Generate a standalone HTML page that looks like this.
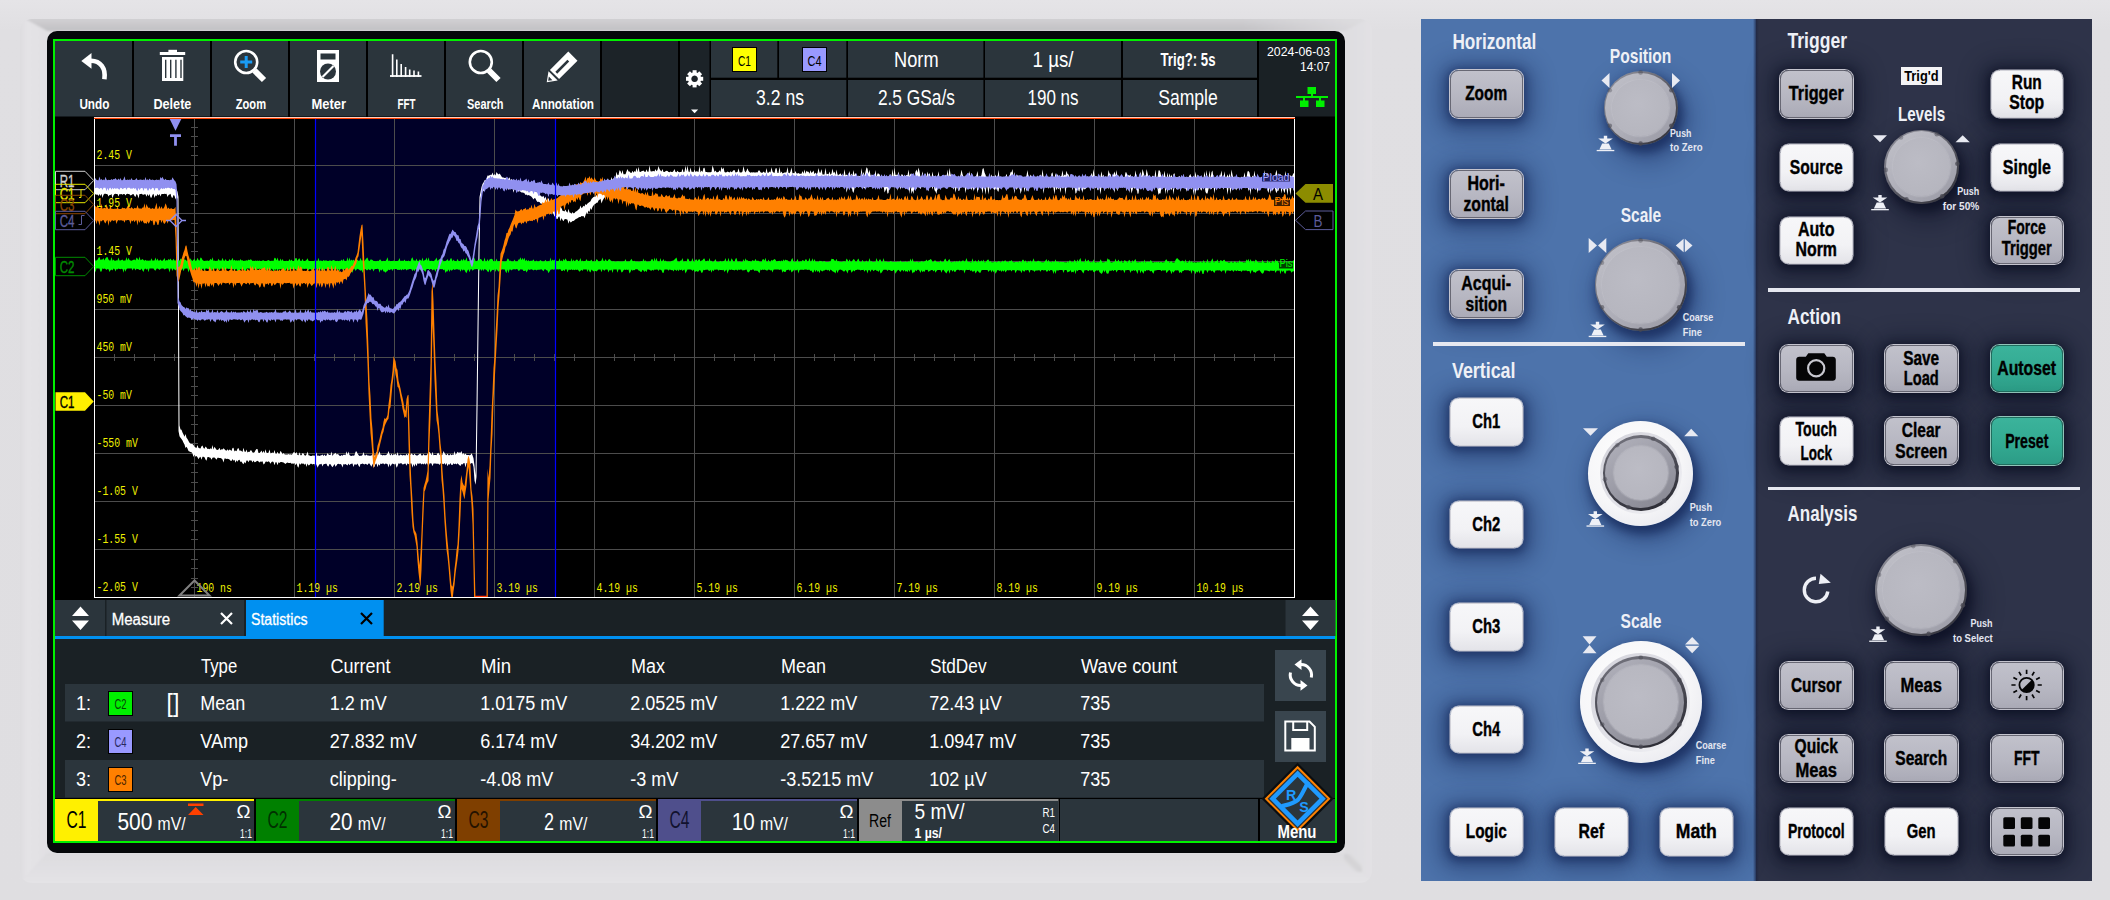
<!DOCTYPE html>
<html><head><meta charset="utf-8"><title>Oscilloscope</title>
<style>
html,body{margin:0;padding:0;background:#dfdee1;}
body{width:2110px;height:900px;overflow:hidden;font-family:"Liberation Sans",sans-serif;}
#root{position:relative;width:2110px;height:900px;overflow:hidden;background:linear-gradient(180deg,#e5e4e7 0,#e0dfe2 30px,#dfdee1 100%);}
#root div{position:absolute;box-sizing:border-box;}
#ov{position:absolute;left:0;top:0;}

</style></head>
<body>
<div id="root">
<svg style="position:absolute;left:0;top:0" width="1400" height="900" viewBox="0 0 1400 900"><defs><linearGradient id="bt" x1="0" y1="0" x2="0" y2="1"><stop offset="0" stop-color="#d9d8db"/><stop offset="1" stop-color="#c1c0c3"/></linearGradient><linearGradient id="btf" x1="0" y1="0" x2="1" y2="0"><stop offset="0" stop-color="#e1e0e3" stop-opacity="0"/><stop offset=".9" stop-color="#e1e0e3" stop-opacity="0"/><stop offset="1" stop-color="#e1e0e3" stop-opacity=".9"/></linearGradient><linearGradient id="bl" x1="0" y1="0" x2="1" y2="0"><stop offset="0" stop-color="#d9d8db"/><stop offset=".4" stop-color="#e4e3e6"/><stop offset="1" stop-color="#e1e0e3"/></linearGradient><linearGradient id="bb" x1="0" y1="0" x2="0" y2="1"><stop offset="0" stop-color="#dddcdf"/><stop offset="1" stop-color="#e5e4e7"/></linearGradient><linearGradient id="br" x1="0" y1="0" x2="1" y2="0"><stop offset="0" stop-color="#dedde0"/><stop offset="1" stop-color="#e3e2e5"/></linearGradient><clipPath id="bz"><rect x="20" y="19" width="1352" height="864" rx="12"/></clipPath><filter id="bf" x="-2%" y="-2%" width="104%" height="104%"><feGaussianBlur stdDeviation="1.2"/></filter></defs><g clip-path="url(#bz)"><g filter="url(#bf)"><rect x="10" y="10" width="1372" height="884" fill="#e1e0e3"/><path d="M14 13H1378L1345 31H47z" fill="url(#bt)"/><path d="M14 13H1378L1345 31H47z" fill="url(#btf)"/><path d="M14 13L47 31V853L14 889z" fill="url(#bl)"/><path d="M14 889L47 853H1345L1378 889z" fill="url(#bb)"/><path d="M1378 13L1345 31V853L1378 889z" fill="url(#br)"/><path d="M1345 855L1361 871" stroke="#cccbce" stroke-width="7" stroke-linecap="round" opacity=".55" filter="url(#bf)"/></g></g></svg>
<div style="left:47px;top:31px;width:1298.3px;height:822.3px;background:#05070a;border-radius:10px;"></div>
<div style="left:53px;top:39px;width:1284px;height:804px;border:2px solid #00f000;background:#000;"></div>
<div style="left:0;top:0;width:2110px;height:900px;clip-path:inset(19px 18px 19px 1421px);"><div style="left:1421px;top:19px;width:335px;height:862px;background:#4d73ab;"></div>
<div style="left:1756px;top:19px;width:336px;height:862px;background:#2e3349;"></div>
<div style="left:1753px;top:19px;width:6px;height:862px;background:linear-gradient(90deg,rgba(30,40,70,0),rgba(28,36,66,.7) 50%,rgba(30,40,70,0));"></div>
<div style="left:1450px;top:70px;width:72.5px;height:47.5px;background:linear-gradient(180deg,#c1c1cb 0,#b7b7c2 55%,#ababb7 100%);border:1.5px solid #686874;box-shadow:0 0 0 1px #c4c4ce,0 2px 8px 3px rgba(14,30,78,.5),0 4px 22px 11px rgba(14,30,78,.4);border-radius:8.5px;"></div>
<div style="left:1450px;top:170px;width:72.5px;height:47.5px;background:linear-gradient(180deg,#c1c1cb 0,#b7b7c2 55%,#ababb7 100%);border:1.5px solid #686874;box-shadow:0 0 0 1px #c4c4ce,0 2px 8px 3px rgba(14,30,78,.5),0 4px 22px 11px rgba(14,30,78,.4);border-radius:8.5px;"></div>
<div style="left:1450px;top:270px;width:72.5px;height:47.5px;background:linear-gradient(180deg,#c1c1cb 0,#b7b7c2 55%,#ababb7 100%);border:1.5px solid #686874;box-shadow:0 0 0 1px #c4c4ce,0 2px 8px 3px rgba(14,30,78,.5),0 4px 22px 11px rgba(14,30,78,.4);border-radius:8.5px;"></div>
<div style="left:1603.6px;top:71px;width:74px;height:74px;border-radius:50%;background:linear-gradient(140deg,#9a9aa4 0,#5c5c66 50%,#2a2a32 100%);box-shadow:3px 6px 10px 2px rgba(14,30,78,.6),6px 11px 24px 7px rgba(14,30,78,.35);"></div>
<div style="left:1605.3999999999999px;top:72.8px;width:70.4px;height:70.4px;border-radius:50%;background:linear-gradient(140deg,#c2c2ca 0,#aeaeb8 55%,#9898a3 100%);"></div>
<div style="left:1612.11px;top:79.50999999999999px;width:56.980000000000004px;height:56.980000000000004px;border-radius:50%;background:radial-gradient(circle at 45% 42%,#bcbcc5 0,#b6b6bf 70%,#b0b0ba 100%);box-shadow:0 0 1.5px 0.6px rgba(196,196,204,.75);"></div>
<div style="left:1594.6px;top:239px;width:92px;height:92px;border-radius:50%;background:linear-gradient(140deg,#9a9aa4 0,#5c5c66 50%,#2a2a32 100%);box-shadow:3px 6px 10px 2px rgba(14,30,78,.6),6px 11px 24px 7px rgba(14,30,78,.35);"></div>
<div style="left:1596.3999999999999px;top:240.8px;width:88.4px;height:88.4px;border-radius:50%;background:linear-gradient(140deg,#c2c2ca 0,#aeaeb8 55%,#9898a3 100%);"></div>
<div style="left:1602.4199999999998px;top:246.82px;width:76.36px;height:76.36px;border-radius:50%;background:radial-gradient(circle at 45% 42%,#bcbcc5 0,#b6b6bf 70%,#b0b0ba 100%);box-shadow:0 0 1.5px 0.6px rgba(196,196,204,.75);"></div>
<div style="left:1433px;top:342.2px;width:312px;height:3.6px;background:#e6e8f0;"></div>
<div style="left:1450px;top:398px;width:72.5px;height:47.5px;background:linear-gradient(180deg,#f7f7f9 0,#f2f2f5 60%,#e4e4e9 100%);border:1.5px solid #d2d2d9;box-shadow:0 0 0 0.5px #c4c4d0,0 2px 8px 3px rgba(14,30,78,.5),0 4px 22px 11px rgba(14,30,78,.4);border-radius:8.5px;"></div>
<div style="left:1450px;top:500.5px;width:72.5px;height:47.5px;background:linear-gradient(180deg,#f7f7f9 0,#f2f2f5 60%,#e4e4e9 100%);border:1.5px solid #d2d2d9;box-shadow:0 0 0 0.5px #c4c4d0,0 2px 8px 3px rgba(14,30,78,.5),0 4px 22px 11px rgba(14,30,78,.4);border-radius:8.5px;"></div>
<div style="left:1450px;top:603px;width:72.5px;height:47.5px;background:linear-gradient(180deg,#f7f7f9 0,#f2f2f5 60%,#e4e4e9 100%);border:1.5px solid #d2d2d9;box-shadow:0 0 0 0.5px #c4c4d0,0 2px 8px 3px rgba(14,30,78,.5),0 4px 22px 11px rgba(14,30,78,.4);border-radius:8.5px;"></div>
<div style="left:1450px;top:705.5px;width:72.5px;height:47.5px;background:linear-gradient(180deg,#f7f7f9 0,#f2f2f5 60%,#e4e4e9 100%);border:1.5px solid #d2d2d9;box-shadow:0 0 0 0.5px #c4c4d0,0 2px 8px 3px rgba(14,30,78,.5),0 4px 22px 11px rgba(14,30,78,.4);border-radius:8.5px;"></div>
<div style="left:1450px;top:808px;width:72.5px;height:47.5px;background:linear-gradient(180deg,#f7f7f9 0,#f2f2f5 60%,#e4e4e9 100%);border:1.5px solid #d2d2d9;box-shadow:0 0 0 0.5px #c4c4d0,0 2px 8px 3px rgba(14,30,78,.5),0 4px 22px 11px rgba(14,30,78,.4);border-radius:8.5px;"></div>
<div style="left:1555px;top:808px;width:72.5px;height:47.5px;background:linear-gradient(180deg,#f7f7f9 0,#f2f2f5 60%,#e4e4e9 100%);border:1.5px solid #d2d2d9;box-shadow:0 0 0 0.5px #c4c4d0,0 2px 8px 3px rgba(14,30,78,.5),0 4px 22px 11px rgba(14,30,78,.4);border-radius:8.5px;"></div>
<div style="left:1660px;top:808px;width:72.5px;height:47.5px;background:linear-gradient(180deg,#f7f7f9 0,#f2f2f5 60%,#e4e4e9 100%);border:1.5px solid #d2d2d9;box-shadow:0 0 0 0.5px #c4c4d0,0 2px 8px 3px rgba(14,30,78,.5),0 4px 22px 11px rgba(14,30,78,.4);border-radius:8.5px;"></div>
<div style="left:1588.3px;top:420.5px;width:105.0px;height:105.0px;border-radius:50%;background:radial-gradient(circle at 42% 38%,#ffffff 0,#f6f6f8 55%,#e8e8ee 85%,#d8d8e0 100%);box-shadow:3px 6px 10px 2px rgba(14,30,78,.6),6px 10px 22px 6px rgba(14,30,78,.35);"></div>
<div style="left:1599.5px;top:431.7px;width:82.6px;height:82.6px;border-radius:50%;background:linear-gradient(135deg,#d2d2da 0,#e4e4ea 60%,#f4f4f7 100%);"></div>
<div style="left:1603.0px;top:435.2px;width:75.6px;height:75.6px;border-radius:50%;background:linear-gradient(160deg,#7a7a84 0,#4c4c56 45%,#26262e 100%);"></div>
<div style="left:1605.3999999999999px;top:437.6px;width:70.8px;height:70.8px;border-radius:50%;background:linear-gradient(150deg,#b2b2bc 0,#9c9ca7 50%,#85858f 100%);"></div>
<div style="left:1613.584px;top:445.784px;width:54.431999999999995px;height:54.431999999999995px;border-radius:50%;background:radial-gradient(circle at 45% 42%,#bcbcc5 0,#b6b6bf 70%,#b0b0ba 100%);box-shadow:0 0 1.5px 0.6px rgba(196,196,204,.75);"></div>
<div style="left:1579.7px;top:641.1px;width:122.2px;height:122.2px;border-radius:50%;background:radial-gradient(circle at 42% 38%,#ffffff 0,#f6f6f8 55%,#e8e8ee 85%,#d8d8e0 100%);box-shadow:3px 6px 10px 2px rgba(14,30,78,.6),6px 10px 22px 6px rgba(14,30,78,.35);"></div>
<div style="left:1591.3px;top:652.7px;width:99px;height:99px;border-radius:50%;background:linear-gradient(135deg,#d2d2da 0,#e4e4ea 60%,#f4f4f7 100%);"></div>
<div style="left:1594.8px;top:656.2px;width:92px;height:92px;border-radius:50%;background:linear-gradient(160deg,#7a7a84 0,#4c4c56 45%,#26262e 100%);"></div>
<div style="left:1597.2px;top:658.6px;width:87.2px;height:87.2px;border-radius:50%;background:linear-gradient(150deg,#b2b2bc 0,#9c9ca7 50%,#85858f 100%);"></div>
<div style="left:1604.0px;top:665.4000000000001px;width:73.60000000000001px;height:73.60000000000001px;border-radius:50%;background:radial-gradient(circle at 45% 42%,#bcbcc5 0,#b6b6bf 70%,#b0b0ba 100%);box-shadow:0 0 1.5px 0.6px rgba(196,196,204,.75);"></div>
<div style="left:1780px;top:70px;width:72.5px;height:47.5px;background:linear-gradient(180deg,#c1c1cb 0,#b7b7c2 55%,#ababb7 100%);border:1.5px solid #686874;box-shadow:0 0 0 1px #c4c4ce,0 2px 8px 3px rgba(6,10,30,.55),0 4px 22px 11px rgba(6,10,30,.38);border-radius:8.5px;"></div>
<div style="left:1780px;top:143.5px;width:72.5px;height:47.5px;background:linear-gradient(180deg,#f7f7f9 0,#f2f2f5 60%,#e4e4e9 100%);border:1.5px solid #d2d2d9;box-shadow:0 0 0 0.5px #c4c4d0,0 2px 8px 3px rgba(6,10,30,.55),0 4px 22px 11px rgba(6,10,30,.38);border-radius:8.5px;"></div>
<div style="left:1780px;top:216.5px;width:72.5px;height:47.5px;background:linear-gradient(180deg,#f7f7f9 0,#f2f2f5 60%,#e4e4e9 100%);border:1.5px solid #d2d2d9;box-shadow:0 0 0 0.5px #c4c4d0,0 2px 8px 3px rgba(6,10,30,.55),0 4px 22px 11px rgba(6,10,30,.38);border-radius:8.5px;"></div>
<div style="left:1990.5px;top:70px;width:72.5px;height:47.5px;background:linear-gradient(180deg,#f7f7f9 0,#f2f2f5 60%,#e4e4e9 100%);border:1.5px solid #d2d2d9;box-shadow:0 0 0 0.5px #c4c4d0,0 2px 8px 3px rgba(6,10,30,.55),0 4px 22px 11px rgba(6,10,30,.38);border-radius:8.5px;"></div>
<div style="left:1990.5px;top:143.5px;width:72.5px;height:47.5px;background:linear-gradient(180deg,#f7f7f9 0,#f2f2f5 60%,#e4e4e9 100%);border:1.5px solid #d2d2d9;box-shadow:0 0 0 0.5px #c4c4d0,0 2px 8px 3px rgba(6,10,30,.55),0 4px 22px 11px rgba(6,10,30,.38);border-radius:8.5px;"></div>
<div style="left:1990.5px;top:216.5px;width:72.5px;height:47.5px;background:linear-gradient(180deg,#c1c1cb 0,#b7b7c2 55%,#ababb7 100%);border:1.5px solid #686874;box-shadow:0 0 0 1px #c4c4ce,0 2px 8px 3px rgba(6,10,30,.55),0 4px 22px 11px rgba(6,10,30,.38);border-radius:8.5px;"></div>
<div style="left:1901px;top:67px;width:41px;height:18px;background:#f4f4f6;"></div>
<div style="left:1884.3px;top:129.5px;width:74.6px;height:74.6px;border-radius:50%;background:linear-gradient(140deg,#9a9aa4 0,#5c5c66 50%,#2a2a32 100%);box-shadow:3px 6px 10px 2px rgba(6,10,30,.6),6px 11px 24px 7px rgba(6,10,30,.35);"></div>
<div style="left:1886.1px;top:131.3px;width:71.0px;height:71.0px;border-radius:50%;background:linear-gradient(140deg,#c2c2ca 0,#aeaeb8 55%,#9898a3 100%);"></div>
<div style="left:1892.879px;top:138.079px;width:57.442px;height:57.442px;border-radius:50%;background:radial-gradient(circle at 45% 42%,#bcbcc5 0,#b6b6bf 70%,#b0b0ba 100%);box-shadow:0 0 1.5px 0.6px rgba(196,196,204,.75);"></div>
<div style="left:1768px;top:288.2px;width:312px;height:3.6px;background:#e6e8f0;"></div>
<div style="left:1780px;top:344.5px;width:72.5px;height:47.5px;background:linear-gradient(180deg,#c1c1cb 0,#b7b7c2 55%,#ababb7 100%);border:1.5px solid #686874;box-shadow:0 0 0 1px #c4c4ce,0 2px 8px 3px rgba(6,10,30,.55),0 4px 22px 11px rgba(6,10,30,.38);border-radius:8.5px;"></div>
<div style="left:1885px;top:344.5px;width:72.5px;height:47.5px;background:linear-gradient(180deg,#c1c1cb 0,#b7b7c2 55%,#ababb7 100%);border:1.5px solid #686874;box-shadow:0 0 0 1px #c4c4ce,0 2px 8px 3px rgba(6,10,30,.55),0 4px 22px 11px rgba(6,10,30,.38);border-radius:8.5px;"></div>
<div style="left:1990.5px;top:344.5px;width:72.5px;height:47.5px;background:linear-gradient(180deg,#3bb39b 0,#33aa92 55%,#2c9c86 100%);border:1.5px solid #1e6e5e;box-shadow:0 0 0 1px #8fc4b8,0 2px 8px 3px rgba(6,10,30,.55),0 4px 22px 11px rgba(6,10,30,.38);border-radius:8.5px;"></div>
<div style="left:1780px;top:417.3px;width:72.5px;height:47.5px;background:linear-gradient(180deg,#f7f7f9 0,#f2f2f5 60%,#e4e4e9 100%);border:1.5px solid #d2d2d9;box-shadow:0 0 0 0.5px #c4c4d0,0 2px 8px 3px rgba(6,10,30,.55),0 4px 22px 11px rgba(6,10,30,.38);border-radius:8.5px;"></div>
<div style="left:1885px;top:417.3px;width:72.5px;height:47.5px;background:linear-gradient(180deg,#c1c1cb 0,#b7b7c2 55%,#ababb7 100%);border:1.5px solid #686874;box-shadow:0 0 0 1px #c4c4ce,0 2px 8px 3px rgba(6,10,30,.55),0 4px 22px 11px rgba(6,10,30,.38);border-radius:8.5px;"></div>
<div style="left:1990.5px;top:417.3px;width:72.5px;height:47.5px;background:linear-gradient(180deg,#3bb39b 0,#33aa92 55%,#2c9c86 100%);border:1.5px solid #1e6e5e;box-shadow:0 0 0 1px #8fc4b8,0 2px 8px 3px rgba(6,10,30,.55),0 4px 22px 11px rgba(6,10,30,.38);border-radius:8.5px;"></div>
<div style="left:1768px;top:486.7px;width:312px;height:3.6px;background:#e6e8f0;"></div>
<div style="left:1875px;top:544px;width:92px;height:92px;border-radius:50%;background:linear-gradient(140deg,#9a9aa4 0,#5c5c66 50%,#2a2a32 100%);box-shadow:3px 6px 10px 2px rgba(6,10,30,.6),6px 11px 24px 7px rgba(6,10,30,.35);"></div>
<div style="left:1876.8px;top:545.8px;width:88.4px;height:88.4px;border-radius:50%;background:linear-gradient(140deg,#c2c2ca 0,#aeaeb8 55%,#9898a3 100%);"></div>
<div style="left:1883.28px;top:552.28px;width:75.44px;height:75.44px;border-radius:50%;background:radial-gradient(circle at 45% 42%,#bcbcc5 0,#b6b6bf 70%,#b0b0ba 100%);box-shadow:0 0 1.5px 0.6px rgba(196,196,204,.75);"></div>
<div style="left:1780px;top:661.8px;width:72.5px;height:47.5px;background:linear-gradient(180deg,#c1c1cb 0,#b7b7c2 55%,#ababb7 100%);border:1.5px solid #686874;box-shadow:0 0 0 1px #c4c4ce,0 2px 8px 3px rgba(6,10,30,.55),0 4px 22px 11px rgba(6,10,30,.38);border-radius:8.5px;"></div>
<div style="left:1885px;top:661.8px;width:72.5px;height:47.5px;background:linear-gradient(180deg,#c1c1cb 0,#b7b7c2 55%,#ababb7 100%);border:1.5px solid #686874;box-shadow:0 0 0 1px #c4c4ce,0 2px 8px 3px rgba(6,10,30,.55),0 4px 22px 11px rgba(6,10,30,.38);border-radius:8.5px;"></div>
<div style="left:1990.5px;top:661.8px;width:72.5px;height:47.5px;background:linear-gradient(180deg,#c1c1cb 0,#b7b7c2 55%,#ababb7 100%);border:1.5px solid #686874;box-shadow:0 0 0 1px #c4c4ce,0 2px 8px 3px rgba(6,10,30,.55),0 4px 22px 11px rgba(6,10,30,.38);border-radius:8.5px;"></div>
<div style="left:1780px;top:734.5px;width:72.5px;height:47.5px;background:linear-gradient(180deg,#c1c1cb 0,#b7b7c2 55%,#ababb7 100%);border:1.5px solid #686874;box-shadow:0 0 0 1px #c4c4ce,0 2px 8px 3px rgba(6,10,30,.55),0 4px 22px 11px rgba(6,10,30,.38);border-radius:8.5px;"></div>
<div style="left:1885px;top:734.5px;width:72.5px;height:47.5px;background:linear-gradient(180deg,#c1c1cb 0,#b7b7c2 55%,#ababb7 100%);border:1.5px solid #686874;box-shadow:0 0 0 1px #c4c4ce,0 2px 8px 3px rgba(6,10,30,.55),0 4px 22px 11px rgba(6,10,30,.38);border-radius:8.5px;"></div>
<div style="left:1990.5px;top:734.5px;width:72.5px;height:47.5px;background:linear-gradient(180deg,#c1c1cb 0,#b7b7c2 55%,#ababb7 100%);border:1.5px solid #686874;box-shadow:0 0 0 1px #c4c4ce,0 2px 8px 3px rgba(6,10,30,.55),0 4px 22px 11px rgba(6,10,30,.38);border-radius:8.5px;"></div>
<div style="left:1780px;top:807.8px;width:72.5px;height:47.5px;background:linear-gradient(180deg,#f7f7f9 0,#f2f2f5 60%,#e4e4e9 100%);border:1.5px solid #d2d2d9;box-shadow:0 0 0 0.5px #c4c4d0,0 2px 8px 3px rgba(6,10,30,.55),0 4px 22px 11px rgba(6,10,30,.38);border-radius:8.5px;"></div>
<div style="left:1885px;top:807.8px;width:72.5px;height:47.5px;background:linear-gradient(180deg,#f7f7f9 0,#f2f2f5 60%,#e4e4e9 100%);border:1.5px solid #d2d2d9;box-shadow:0 0 0 0.5px #c4c4d0,0 2px 8px 3px rgba(6,10,30,.55),0 4px 22px 11px rgba(6,10,30,.38);border-radius:8.5px;"></div>
<div style="left:1990.5px;top:807.8px;width:72.5px;height:47.5px;background:linear-gradient(180deg,#c1c1cb 0,#b7b7c2 55%,#ababb7 100%);border:1.5px solid #686874;box-shadow:0 0 0 1px #c4c4ce,0 2px 8px 3px rgba(6,10,30,.55),0 4px 22px 11px rgba(6,10,30,.38);border-radius:8.5px;"></div></div>
<svg id="ov" width="2110" height="900" viewBox="0 0 2110 900" font-family='"Liberation Sans", sans-serif'>
<rect x="55" y="41" width="1280" height="76" fill="#000"/>
<rect x="55" y="41" width="77" height="75.5" fill="#2b353c"/>
<text x="79.4" y="108.6" font-size="14.5" fill="#fff" font-weight="700" textLength="30.0" lengthAdjust="spacingAndGlyphs">Undo</text>
<rect x="134" y="41" width="76" height="75.5" fill="#2b353c"/>
<text x="153.4" y="108.6" font-size="14.5" fill="#fff" font-weight="700" textLength="38.0" lengthAdjust="spacingAndGlyphs">Delete</text>
<rect x="212" y="41" width="76" height="75.5" fill="#2b353c"/>
<text x="235.8" y="108.6" font-size="14.5" fill="#fff" font-weight="700" textLength="30.2" lengthAdjust="spacingAndGlyphs">Zoom</text>
<rect x="290" y="41" width="76" height="75.5" fill="#2b353c"/>
<text x="311.5" y="108.6" font-size="14.5" fill="#fff" font-weight="700" textLength="34.5" lengthAdjust="spacingAndGlyphs">Meter</text>
<rect x="368" y="41" width="76" height="75.5" fill="#2b353c"/>
<text x="397.6" y="108.6" font-size="14.5" fill="#fff" font-weight="700" textLength="18.0" lengthAdjust="spacingAndGlyphs">FFT</text>
<rect x="446" y="41" width="76" height="75.5" fill="#2b353c"/>
<text x="467.0" y="108.6" font-size="14.5" fill="#fff" font-weight="700" textLength="36.5" lengthAdjust="spacingAndGlyphs">Search</text>
<rect x="524" y="41" width="76" height="75.5" fill="#2b353c"/>
<text x="532.0" y="108.6" font-size="14.5" fill="#fff" font-weight="700" textLength="62.0" lengthAdjust="spacingAndGlyphs">Annotation</text>
<rect x="602" y="41" width="76" height="75.5" fill="#1c2328"/>
<rect x="680" y="41" width="29.5" height="75.5" fill="#1c2328"/>
<rect x="711" y="41" width="66.3" height="36.7" fill="#2b353c"/>
<rect x="779" y="41" width="67.3" height="36.7" fill="#2b353c"/>
<rect x="848" y="41" width="135.4" height="36.7" fill="#2b353c"/>
<rect x="985" y="41" width="136" height="36.7" fill="#2b353c"/>
<rect x="1123" y="41" width="134" height="36.7" fill="#2b353c"/>
<rect x="711" y="80" width="135.3" height="36.5" fill="#2b353c"/>
<rect x="848" y="80" width="135.4" height="36.5" fill="#2b353c"/>
<rect x="985" y="80" width="136" height="36.5" fill="#2b353c"/>
<rect x="1123" y="80" width="134" height="36.5" fill="#2b353c"/>
<rect x="1259" y="41" width="76" height="75.5" fill="#1a2125"/>
<rect x="732.5" y="47.5" width="24" height="24" fill="#ffff00" stroke="#000" stroke-width="1"/>
<text x="738.0" y="66.0" font-size="15" fill="#000" textLength="13.0" lengthAdjust="spacingAndGlyphs">C1</text>
<rect x="802.5" y="47.5" width="24" height="24" fill="#9999ff" stroke="#000" stroke-width="1"/>
<text x="807.5" y="66.0" font-size="15" fill="#000" textLength="14.0" lengthAdjust="spacingAndGlyphs">C4</text>
<text x="894.1" y="67.0" font-size="21.5" fill="#fff" textLength="44.5" lengthAdjust="spacingAndGlyphs">Norm</text>
<text x="1032.5" y="67.0" font-size="21.5" fill="#fff" textLength="41.0" lengthAdjust="spacingAndGlyphs">1 µs/</text>
<text x="1160.5" y="66.0" font-size="17.5" fill="#fff" font-weight="700" textLength="55.0" lengthAdjust="spacingAndGlyphs">Trig?: 5s</text>
<text x="756.0" y="104.7" font-size="21.5" fill="#fff" textLength="48.0" lengthAdjust="spacingAndGlyphs">3.2 ns</text>
<text x="877.9" y="104.7" font-size="21.5" fill="#fff" textLength="77.0" lengthAdjust="spacingAndGlyphs">2.5 GSa/s</text>
<text x="1027.5" y="104.7" font-size="21.5" fill="#fff" textLength="51.0" lengthAdjust="spacingAndGlyphs">190 ns</text>
<text x="1158.2" y="104.7" font-size="21.5" fill="#fff" textLength="59.5" lengthAdjust="spacingAndGlyphs">Sample</text>
<text x="1267.0" y="55.7" font-size="13.5" fill="#fff" textLength="63.0" lengthAdjust="spacingAndGlyphs">2024-06-03</text>
<text x="1300.0" y="70.8" font-size="13.5" fill="#fff" textLength="30.0" lengthAdjust="spacingAndGlyphs">14:07</text>
<g fill="#00f000"><rect x="1307.5" y="87" width="8.5" height="7"/><rect x="1311" y="93" width="2" height="4"/><rect x="1296" y="96" width="32" height="2"/><rect x="1303" y="97" width="2" height="4"/><rect x="1319" y="97" width="2" height="4"/><rect x="1300" y="100.5" width="8.5" height="6.5"/><rect x="1316" y="100.5" width="8.5" height="6.5"/></g>
<g transform="translate(694.6 78.8)" fill="#fff"><rect x="-2" y="-8.6" width="4" height="4.2" transform="rotate(0)"/><rect x="-2" y="-8.6" width="4" height="4.2" transform="rotate(45)"/><rect x="-2" y="-8.6" width="4" height="4.2" transform="rotate(90)"/><rect x="-2" y="-8.6" width="4" height="4.2" transform="rotate(135)"/><rect x="-2" y="-8.6" width="4" height="4.2" transform="rotate(180)"/><rect x="-2" y="-8.6" width="4" height="4.2" transform="rotate(225)"/><rect x="-2" y="-8.6" width="4" height="4.2" transform="rotate(270)"/><rect x="-2" y="-8.6" width="4" height="4.2" transform="rotate(315)"/><path fill-rule="evenodd" d="M0 -6.6A6.6 6.6 0 1 0 0.01 -6.6ZM0 -3.3A3.3 3.3 0 1 1 -0.01 -3.3Z"/></g>
<path d="M691 109.5h7.2l-3.6 3.8z" fill="#fff"/>
<rect x="55" y="600" width="1280" height="36" fill="#1a2125"/>
<rect x="55" y="600" width="50" height="36" fill="#2b353c"/>
<rect x="106.5" y="600" width="137.5" height="36" fill="#2b353c"/>
<rect x="246" y="600" width="137.7" height="36" fill="#0090f0"/>
<rect x="1285.5" y="600" width="50" height="36" fill="#2b353c"/>
<rect x="55" y="636" width="1280" height="3" fill="#0090f0"/>
<text x="111.7" y="624.5" font-size="16" fill="#fff" textLength="58.5" lengthAdjust="spacingAndGlyphs" stroke="#fff" stroke-width=".3">Measure</text>
<text x="251.0" y="624.5" font-size="16" fill="#fff" textLength="56.5" lengthAdjust="spacingAndGlyphs" stroke="#fff" stroke-width=".3">Statistics</text>
<path d="M221 613l11 11M232 613l-11 11" stroke="#fff" stroke-width="2.2" fill="none"/>
<path d="M361 613l11 11M372 613l-11 11" stroke="#000" stroke-width="2.2" fill="none"/>
<path d="M72.0 616h17l-8.500 -9.500zM72.0 620.5h17l-8.500 9.500z" fill="#fff"/>
<path d="M1302.0 616h17l-8.500 -9.500zM1302.0 620.5h17l-8.500 9.500z" fill="#fff"/>
<rect x="55" y="639" width="1280" height="159" fill="#1a2125"/>
<rect x="65" y="684" width="1199" height="37.5" fill="#2b353c"/>
<rect x="65" y="760" width="1199" height="37.5" fill="#2b353c"/>
<text x="201.0" y="672.5" font-size="19.5" fill="#fff" textLength="36.2" lengthAdjust="spacingAndGlyphs">Type</text>
<text x="330.5" y="672.5" font-size="19.5" fill="#fff" textLength="60.0" lengthAdjust="spacingAndGlyphs">Current</text>
<text x="481.0" y="672.5" font-size="19.5" fill="#fff" textLength="30.0" lengthAdjust="spacingAndGlyphs">Min</text>
<text x="631.0" y="672.5" font-size="19.5" fill="#fff" textLength="34.0" lengthAdjust="spacingAndGlyphs">Max</text>
<text x="781.0" y="672.5" font-size="19.5" fill="#fff" textLength="45.0" lengthAdjust="spacingAndGlyphs">Mean</text>
<text x="930.0" y="672.5" font-size="19.5" fill="#fff" textLength="56.5" lengthAdjust="spacingAndGlyphs">StdDev</text>
<text x="1081.0" y="672.5" font-size="19.5" fill="#fff" textLength="96.0" lengthAdjust="spacingAndGlyphs">Wave count</text>
<text transform="translate(76.0 709.7) scale(0.88 1)" font-size="20.5" fill="#fff">1:</text>
<rect x="108.5" y="691.5" width="24" height="24" fill="#00f000" stroke="#000" stroke-width="1"/>
<text x="114.5" y="708.5" font-size="14" fill="#084008" textLength="12.0" lengthAdjust="spacingAndGlyphs">C2</text>
<text transform="translate(166.5 712.0) scale(0.92 1)" font-size="25" fill="#fff">[]</text>
<text transform="translate(200.2 709.7) scale(0.88 1)" font-size="20.5" fill="#fff">Mean</text>
<text transform="translate(329.7 709.7) scale(0.88 1)" font-size="20.5" fill="#fff">1.2 mV</text>
<text transform="translate(480.2 709.7) scale(0.88 1)" font-size="20.5" fill="#fff">1.0175 mV</text>
<text transform="translate(630.2 709.7) scale(0.88 1)" font-size="20.5" fill="#fff">2.0525 mV</text>
<text transform="translate(780.2 709.7) scale(0.88 1)" font-size="20.5" fill="#fff">1.222 mV</text>
<text transform="translate(929.2 709.7) scale(0.88 1)" font-size="20.5" fill="#fff">72.43 µV</text>
<text transform="translate(1080.2 709.7) scale(0.88 1)" font-size="20.5" fill="#fff">735</text>
<text transform="translate(76.0 747.7) scale(0.88 1)" font-size="20.5" fill="#fff">2:</text>
<rect x="108.5" y="729.5" width="24" height="24" fill="#9999ff" stroke="#000" stroke-width="1"/>
<text x="114.5" y="746.5" font-size="14" fill="#282860" textLength="12.0" lengthAdjust="spacingAndGlyphs">C4</text>
<text transform="translate(200.2 747.7) scale(0.88 1)" font-size="20.5" fill="#fff">VAmp</text>
<text transform="translate(329.7 747.7) scale(0.88 1)" font-size="20.5" fill="#fff">27.832 mV</text>
<text transform="translate(480.2 747.7) scale(0.88 1)" font-size="20.5" fill="#fff">6.174 mV</text>
<text transform="translate(630.2 747.7) scale(0.88 1)" font-size="20.5" fill="#fff">34.202 mV</text>
<text transform="translate(780.2 747.7) scale(0.88 1)" font-size="20.5" fill="#fff">27.657 mV</text>
<text transform="translate(929.2 747.7) scale(0.88 1)" font-size="20.5" fill="#fff">1.0947 mV</text>
<text transform="translate(1080.2 747.7) scale(0.88 1)" font-size="20.5" fill="#fff">735</text>
<text transform="translate(76.0 785.7) scale(0.88 1)" font-size="20.5" fill="#fff">3:</text>
<rect x="108.5" y="767.5" width="24" height="24" fill="#ff8000" stroke="#000" stroke-width="1"/>
<text x="114.5" y="784.5" font-size="14" fill="#4a2400" textLength="12.0" lengthAdjust="spacingAndGlyphs">C3</text>
<text transform="translate(200.2 785.7) scale(0.88 1)" font-size="20.5" fill="#fff">Vp-</text>
<text transform="translate(329.7 785.7) scale(0.88 1)" font-size="20.5" fill="#fff">clipping-</text>
<text transform="translate(480.2 785.7) scale(0.88 1)" font-size="20.5" fill="#fff">-4.08 mV</text>
<text transform="translate(630.2 785.7) scale(0.88 1)" font-size="20.5" fill="#fff">-3 mV</text>
<text transform="translate(780.2 785.7) scale(0.88 1)" font-size="20.5" fill="#fff">-3.5215 mV</text>
<text transform="translate(929.2 785.7) scale(0.88 1)" font-size="20.5" fill="#fff">102 µV</text>
<text transform="translate(1080.2 785.7) scale(0.88 1)" font-size="20.5" fill="#fff">735</text>
<rect x="1275" y="650" width="51" height="51" fill="#39454e"/>
<rect x="1275" y="711" width="51" height="51" fill="#39454e"/>
<g fill="none" stroke="#fff" stroke-width="3"><path d="M1311.300 677.500A10.500 10.500 0 0 0 1300.500 664.600"/><path d="M1290.500 672.500A10.500 10.500 0 0 0 1301.500 685.400"/></g><path d="M1294.500 664.600L1301.500 659.300V670zM1307.500 685.400L1300.500 680V690.700z" fill="#fff"/>
<path d="M1285.300 721.500H1309.500L1314.800 726.800V750.600H1285.300z" fill="none" stroke="#fff" stroke-width="2"/><path d="M1293.200 721.500V729.900H1307.200V721.500" fill="none" stroke="#fff" stroke-width="2"/><rect x="1291.300" y="738" width="18.200" height="13" fill="#fff"/>
<rect x="55" y="798" width="1280" height="43" fill="#000"/>
<rect x="55" y="799" width="199" height="42" fill="#fff000"/>
<rect x="98" y="801" width="156" height="40" fill="#2b353c"/>
<text x="66.5" y="828.0" font-size="23" fill="#000" textLength="20.0" lengthAdjust="spacingAndGlyphs">C1</text>
<text x="236.5" y="817.5" font-size="19" fill="#fff" textLength="14.0" lengthAdjust="spacingAndGlyphs">Ω</text>
<text x="240.0" y="838.0" font-size="12.5" fill="#fff" textLength="12.0" lengthAdjust="spacingAndGlyphs">1:1</text>
<rect x="256" y="799" width="199" height="42" fill="#008000"/>
<rect x="299" y="801" width="156" height="40" fill="#2b353c"/>
<text x="267.5" y="828.0" font-size="23" fill="#003000" textLength="20.0" lengthAdjust="spacingAndGlyphs">C2</text>
<text x="437.5" y="817.5" font-size="19" fill="#fff" textLength="14.0" lengthAdjust="spacingAndGlyphs">Ω</text>
<text x="441.0" y="838.0" font-size="12.5" fill="#fff" textLength="12.0" lengthAdjust="spacingAndGlyphs">1:1</text>
<rect x="457" y="799" width="199" height="42" fill="#7f3f00"/>
<rect x="500" y="801" width="156" height="40" fill="#2b353c"/>
<text x="468.5" y="828.0" font-size="23" fill="#241200" textLength="20.0" lengthAdjust="spacingAndGlyphs">C3</text>
<text x="638.5" y="817.5" font-size="19" fill="#fff" textLength="14.0" lengthAdjust="spacingAndGlyphs">Ω</text>
<text x="642.0" y="838.0" font-size="12.5" fill="#fff" textLength="12.0" lengthAdjust="spacingAndGlyphs">1:1</text>
<rect x="658" y="799" width="199" height="42" fill="#4f4f8c"/>
<rect x="701" y="801" width="156" height="40" fill="#2b353c"/>
<text x="669.5" y="828.0" font-size="23" fill="#12122e" textLength="20.0" lengthAdjust="spacingAndGlyphs">C4</text>
<text x="839.5" y="817.5" font-size="19" fill="#fff" textLength="14.0" lengthAdjust="spacingAndGlyphs">Ω</text>
<text x="843.0" y="838.0" font-size="12.5" fill="#fff" textLength="12.0" lengthAdjust="spacingAndGlyphs">1:1</text>
<text x="157.6" y="830.0" font-size="18.5" fill="#fff" textLength="28.0" lengthAdjust="spacingAndGlyphs">mV/</text>
<text x="117.4" y="830.0" font-size="24.5" fill="#fff" textLength="35.0" lengthAdjust="spacingAndGlyphs">500</text>
<text x="357.7" y="830.0" font-size="18.5" fill="#fff" textLength="28.0" lengthAdjust="spacingAndGlyphs">mV/</text>
<text x="329.5" y="830.0" font-size="24.5" fill="#fff" textLength="23.0" lengthAdjust="spacingAndGlyphs">20</text>
<text x="559.3" y="830.0" font-size="18.5" fill="#fff" textLength="28.0" lengthAdjust="spacingAndGlyphs">mV/</text>
<text x="544.1" y="830.0" font-size="24.5" fill="#fff" textLength="10.0" lengthAdjust="spacingAndGlyphs">2</text>
<text x="760.0" y="830.0" font-size="18.5" fill="#fff" textLength="28.0" lengthAdjust="spacingAndGlyphs">mV/</text>
<text x="731.8" y="830.0" font-size="24.5" fill="#fff" textLength="23.0" lengthAdjust="spacingAndGlyphs">10</text>
<path d="M188 803.5h15.500v2.500h-15.500zM188 815l7.700 -8 7.800 8z" fill="#ff4000"/>
<rect x="859" y="799" width="199.5" height="42" fill="#8c8c8c"/>
<rect x="902" y="801" width="156.5" height="40" fill="#2b353c"/>
<text x="869.0" y="826.5" font-size="17.5" fill="#000" textLength="22.0" lengthAdjust="spacingAndGlyphs">Ref</text>
<text x="914.5" y="818.5" font-size="21.5" fill="#fff" textLength="50.0" lengthAdjust="spacingAndGlyphs">5 mV/</text>
<text x="914.5" y="837.5" font-size="14.5" fill="#fff" font-weight="700" textLength="27.5" lengthAdjust="spacingAndGlyphs">1 µs/</text>
<text x="1042.5" y="816.5" font-size="13.5" fill="#fff" textLength="12.5" lengthAdjust="spacingAndGlyphs">R1</text>
<text x="1042.5" y="832.5" font-size="13.5" fill="#fff" textLength="12.5" lengthAdjust="spacingAndGlyphs">C4</text>
<rect x="1060" y="799" width="198" height="42" fill="#2b353c"/>
<rect x="1260" y="799" width="75" height="42" fill="#2b353c"/>
<g transform="translate(1297.6 798.7)"><path d="M0 -36L36 0 0 36 -36 0z" fill="#0a0d10"/><path d="M0 -31.500L31.500 0 0 31.500 -31.500 0z" fill="#2b353c" stroke="#ff8200" stroke-width="2"/><path d="M0 -25L25 0 0 25 -25 0z" fill="none" stroke="#1f9aff" stroke-width="4.500"/><path d="M-16 7.500C-8 5.500 -4 5 0 1.500C4 -2.500 6 -9 11 -17" fill="none" stroke="#1f9aff" stroke-width="4.200"/></g>
<rect x="1260" y="831" width="75" height="10" fill="#2b353c"/>
<text transform="translate(1291.2 799.5) scale(0.92 1)" font-size="15.5" fill="#1f9aff" font-weight="700" text-anchor="middle">R</text>
<text transform="translate(1303.9 811.5) scale(0.92 1)" font-size="15.5" fill="#1f9aff" font-weight="700" text-anchor="middle">S</text>
<text x="1277.5" y="838.4" font-size="17.5" fill="#fff" font-weight="700" textLength="39.0" lengthAdjust="spacingAndGlyphs">Menu</text>
<path d="M81.300 60.900L91.500 53V68.800z" fill="#fff"/><path d="M91 60.800C100.500 61 106 68 104.400 79.300" stroke="#fff" stroke-width="4.600" fill="none"/>
<g fill="#fff"><rect x="159.800" y="52" width="25.400" height="3"/><rect x="168.400" y="49.800" width="8.600" height="3"/><path fill-rule="evenodd" d="M162 56.900h21.300v24.100h-21.300zM165 59.700v18.300h1.400v-18.300zM170 59.700v18.300h1.400v-18.300zM175.200 59.700v18.300h1.400v-18.300zM180.300 59.700v18.300h1.400v-18.300z"/></g>
<g><circle cx="246.200" cy="62" r="11" fill="none" stroke="#fff" stroke-width="2.600"/><path d="M254.500 70.500l9.500 9.500" stroke="#fff" stroke-width="6" /><path d="M240.200 62h12M246.200 56v12" stroke="#1a9cf5" stroke-width="3"/></g>
<g><rect x="317" y="50" width="22" height="32" fill="#fff"/><rect x="320.500" y="53.500" width="15" height="6" fill="#2b353c"/><circle cx="328" cy="71.500" r="8" fill="#2b353c"/><path d="M322.500 77l11 -11" stroke="#fff" stroke-width="2.200"/></g>
<path d="M392.6 77V54.3M396.8 77V59.5M401.2 77V64.0M405.6 77V67.0M409.7 77V69.5M414.0 77V70.5M418.4 77V71.5" stroke="#fff" stroke-width="1.600" fill="none"/><path d="M390 76h31.500" stroke="#fff" stroke-width="1.800"/>
<g><circle cx="480.800" cy="62" r="11" fill="none" stroke="#fff" stroke-width="2.600"/><path d="M489 70.500l9.500 9.500" stroke="#fff" stroke-width="6"/></g>
<g transform="translate(563 66) rotate(-45)" fill="#fff"><path fill-rule="evenodd" d="M-12 -6.500h26v13h-26zM-9.500 -1.300v2.600h17v-2.600z"/><path d="M-14 -6.500v13l-9 -6.500zM-17.500 -2.500v5l-3.500 -2.500z" fill-rule="evenodd"/></g>
<rect x="94.5" y="117.5" width="1200.0" height="480.0" fill="#000"/>
<rect x="315.5" y="117.5" width="240" height="480.0" fill="#000028"/>
<path d="M194.5 117.5V597.5M294.5 117.5V597.5M394.5 117.5V597.5M494.5 117.5V597.5M594.5 117.5V597.5M694.5 117.5V597.5M794.5 117.5V597.5M894.5 117.5V597.5M994.5 117.5V597.5M1094.5 117.5V597.5M1194.5 117.5V597.5M94.5 165.5H1294.5M94.5 213.5H1294.5M94.5 261.5H1294.5M94.5 309.5H1294.5M94.5 357.5H1294.5M94.5 405.5H1294.5M94.5 453.5H1294.5M94.5 501.5H1294.5M94.5 549.5H1294.5M191.0 127.1h7M191.0 136.7h7M191.0 146.3h7M191.0 155.9h7M191.0 175.1h7M191.0 184.7h7M191.0 194.3h7M191.0 203.9h7M191.0 223.1h7M191.0 232.7h7M191.0 242.3h7M191.0 251.9h7M191.0 271.1h7M191.0 280.7h7M191.0 290.3h7M191.0 299.9h7M191.0 319.1h7M191.0 328.7h7M191.0 338.3h7M191.0 347.9h7M191.0 367.1h7M191.0 376.7h7M191.0 386.3h7M191.0 395.9h7M191.0 415.1h7M191.0 424.7h7M191.0 434.3h7M191.0 443.9h7M191.0 463.1h7M191.0 472.7h7M191.0 482.3h7M191.0 491.9h7M191.0 511.1h7M191.0 520.7h7M191.0 530.3h7M191.0 539.9h7M191.0 559.1h7M191.0 568.7h7M191.0 578.3h7M191.0 587.9h7M114.5 354.0v7M134.5 354.0v7M154.5 354.0v7M174.5 354.0v7M214.5 354.0v7M234.5 354.0v7M254.5 354.0v7M274.5 354.0v7M314.5 354.0v7M334.5 354.0v7M354.5 354.0v7M374.5 354.0v7M414.5 354.0v7M434.5 354.0v7M454.5 354.0v7M474.5 354.0v7M514.5 354.0v7M534.5 354.0v7M554.5 354.0v7M574.5 354.0v7M614.5 354.0v7M634.5 354.0v7M654.5 354.0v7M674.5 354.0v7M714.5 354.0v7M734.5 354.0v7M754.5 354.0v7M774.5 354.0v7M814.5 354.0v7M834.5 354.0v7M854.5 354.0v7M874.5 354.0v7M914.5 354.0v7M934.5 354.0v7M954.5 354.0v7M974.5 354.0v7M1014.5 354.0v7M1034.5 354.0v7M1054.5 354.0v7M1074.5 354.0v7M1114.5 354.0v7M1134.5 354.0v7M1154.5 354.0v7M1174.5 354.0v7M1214.5 354.0v7M1234.5 354.0v7M1254.5 354.0v7M1274.5 354.0v7" stroke="#4c4c4c" stroke-width="1" fill="none" shape-rendering="crispEdges"/>
<clipPath id="gc"><rect x="94.5" y="117.5" width="1200" height="480"/></clipPath>
<g clip-path="url(#gc)">
<path d="M94.5,186.8 95.5,183.6 96.5,186.6 97.5,187.1 98.5,186.2 99.5,187.2 100.5,187.2 101.5,185.8 102.5,182.7 103.5,186.0 104.5,187.1 105.5,186.6 106.5,187.1 107.5,187.2 108.5,186.8 109.5,186.6 110.5,186.6 111.5,186.7 112.5,182.5 113.5,184.6 114.5,187.0 115.5,187.0 116.5,185.3 117.5,184.5 118.5,183.1 119.5,187.2 120.5,183.8 121.5,182.8 122.5,187.2 123.5,185.2 124.5,187.2 125.5,183.0 126.5,187.2 127.5,187.2 128.5,185.0 129.5,186.4 130.5,187.1 131.5,187.2 132.5,187.2 133.5,187.1 134.5,182.9 135.5,187.0 136.5,187.1 137.5,184.5 138.5,187.2 139.5,187.1 140.5,185.2 141.5,187.0 142.5,187.2 143.5,187.1 144.5,186.9 145.5,183.1 146.5,186.4 147.5,187.1 148.5,183.8 149.5,187.1 150.5,185.5 151.5,187.1 152.5,184.1 153.5,186.8 154.5,187.2 155.5,187.1 156.5,187.0 157.5,186.3 158.5,187.1 159.5,187.2 160.5,186.4 161.5,186.2 162.5,183.7 163.5,187.2 164.5,186.8 165.5,187.1 166.5,186.4 167.5,186.9 168.5,182.8 169.5,185.8 170.5,187.1 171.5,187.2 172.5,185.8 173.5,187.2 174.5,187.1 175.5,188.2 176.5,189.2 177.5,191.7 178.5,196.9 179.5,425.5 180.5,429.4 181.5,429.8 182.5,432.6 183.5,434.4 184.5,436.7 185.5,434.0 186.5,437.7 187.5,438.9 188.5,441.1 189.5,442.7 190.5,443.6 191.5,443.9 192.5,443.9 193.5,445.1 194.5,446.7 195.5,447.5 196.5,448.1 197.5,444.9 198.5,447.9 199.5,448.2 200.5,448.4 201.5,446.3 202.5,445.6 203.5,447.9 204.5,448.8 205.5,446.4 206.5,447.5 207.5,448.9 208.5,448.8 209.5,449.2 210.5,448.3 211.5,449.2 212.5,445.1 213.5,449.6 214.5,446.8 215.5,448.3 216.5,449.7 217.5,450.0 218.5,449.6 219.5,447.7 220.5,450.2 221.5,449.3 222.5,449.4 223.5,448.2 224.5,449.3 225.5,450.2 226.5,450.8 227.5,449.3 228.5,450.8 229.5,449.6 230.5,450.1 231.5,450.9 232.5,447.9 233.5,447.7 234.5,451.4 235.5,450.5 236.5,451.3 237.5,448.7 238.5,447.9 239.5,450.7 240.5,450.4 241.5,451.0 242.5,452.0 243.5,447.8 244.5,451.6 245.5,452.1 246.5,449.6 247.5,452.4 248.5,451.8 249.5,452.0 250.5,450.3 251.5,450.5 252.5,452.5 253.5,452.7 254.5,452.2 255.5,450.3 256.5,449.0 257.5,449.1 258.5,452.9 259.5,452.9 260.5,452.1 261.5,450.6 262.5,453.1 263.5,450.7 264.5,453.3 265.5,449.2 266.5,452.7 267.5,452.9 268.5,452.7 269.5,449.4 270.5,453.4 271.5,453.0 272.5,452.5 273.5,453.2 274.5,449.9 275.5,453.8 276.5,454.0 277.5,451.8 278.5,453.7 279.5,454.1 280.5,450.7 281.5,452.3 282.5,454.3 283.5,453.1 284.5,454.2 285.5,454.5 286.5,454.6 287.5,454.5 288.5,454.1 289.5,454.5 290.5,454.2 291.5,454.8 292.5,453.9 293.5,452.3 294.5,452.3 295.5,453.4 296.5,451.9 297.5,455.0 298.5,455.2 299.5,452.2 300.5,455.3 301.5,455.3 302.5,453.0 303.5,453.5 304.5,455.3 305.5,455.7 306.5,454.4 307.5,451.6 308.5,455.3 309.5,455.4 310.5,455.9 311.5,456.0 312.5,455.4 313.5,455.4 314.5,456.0 315.5,453.5 316.5,452.5 317.5,456.1 318.5,455.6 319.5,455.9 320.5,455.5 321.5,455.2 322.5,454.6 323.5,456.0 324.5,454.4 325.5,456.0 326.5,455.5 327.5,452.9 328.5,454.6 329.5,455.0 330.5,455.1 331.5,451.6 332.5,455.9 333.5,454.3 334.5,453.7 335.5,452.8 336.5,454.6 337.5,454.1 338.5,454.4 339.5,455.7 340.5,456.0 341.5,454.9 342.5,455.8 343.5,454.7 344.5,454.8 345.5,455.3 346.5,451.2 347.5,454.5 348.5,451.5 349.5,454.9 350.5,455.8 351.5,455.9 352.5,455.6 353.5,455.7 354.5,455.2 355.5,451.7 356.5,451.2 357.5,453.6 358.5,455.0 359.5,455.9 360.5,455.8 361.5,455.8 362.5,454.9 363.5,451.9 364.5,455.2 365.5,455.5 366.5,454.6 367.5,455.6 368.5,455.6 369.5,455.7 370.5,455.7 371.5,455.5 372.5,454.0 373.5,451.2 374.5,455.8 375.5,455.4 376.5,451.4 377.5,455.1 378.5,454.2 379.5,451.3 380.5,454.8 381.5,454.7 382.5,455.6 383.5,455.1 384.5,455.3 385.5,455.2 386.5,454.8 387.5,453.7 388.5,451.0 389.5,454.0 390.5,455.6 391.5,453.6 392.5,455.4 393.5,454.3 394.5,454.8 395.5,453.8 396.5,455.5 397.5,452.1 398.5,455.6 399.5,455.4 400.5,454.6 401.5,454.9 402.5,455.6 403.5,454.9 404.5,455.3 405.5,455.5 406.5,453.8 407.5,455.6 408.5,453.3 409.5,453.6 410.5,455.1 411.5,453.2 412.5,454.4 413.5,455.3 414.5,453.8 415.5,455.1 416.5,455.5 417.5,455.5 418.5,454.7 419.5,454.1 420.5,453.5 421.5,455.4 422.5,455.5 423.5,453.9 424.5,455.3 425.5,455.2 426.5,455.2 427.5,453.9 428.5,451.9 429.5,452.0 430.5,453.2 431.5,455.2 432.5,451.7 433.5,455.2 434.5,455.1 435.5,455.0 436.5,455.3 437.5,453.2 438.5,452.8 439.5,455.3 440.5,452.3 441.5,455.4 442.5,454.6 443.5,451.1 444.5,453.1 445.5,454.6 446.5,455.3 447.5,453.6 448.5,455.3 449.5,455.2 450.5,454.1 451.5,455.2 452.5,454.6 453.5,454.9 454.5,451.0 455.5,454.7 456.5,453.7 457.5,451.8 458.5,452.8 459.5,452.5 460.5,452.7 461.5,451.1 462.5,454.6 463.5,453.0 464.5,454.8 465.5,453.5 466.5,454.9 467.5,455.1 468.5,455.0 469.5,455.2 470.5,455.1 471.5,453.2 472.5,455.2 473.5,458.3 474.5,465.6 475.5,475.5 476.5,406.1 477.5,328.0 478.5,249.2 479.5,196.9 480.5,191.9 481.5,186.9 482.5,184.1 483.5,182.6 484.5,180.3 485.5,180.3 486.5,178.9 487.5,175.4 488.5,175.7 489.5,175.2 490.5,174.7 491.5,175.0 492.5,172.6 493.5,175.4 494.5,174.1 495.5,175.4 496.5,172.1 497.5,173.6 498.5,174.5 499.5,173.4 500.5,174.7 501.5,176.6 502.5,177.5 503.5,177.6 504.5,178.0 505.5,177.8 506.5,178.2 507.5,178.8 508.5,178.8 509.5,177.3 510.5,180.2 511.5,179.1 512.5,180.3 513.5,181.5 514.5,179.8 515.5,181.4 516.5,182.5 517.5,183.1 518.5,183.4 519.5,184.0 520.5,183.0 521.5,181.2 522.5,183.9 523.5,183.5 524.5,186.3 525.5,185.5 526.5,187.2 527.5,185.2 528.5,188.1 529.5,188.5 530.5,188.7 531.5,186.0 532.5,189.3 533.5,188.5 534.5,190.7 535.5,191.4 536.5,192.2 537.5,189.2 538.5,193.0 539.5,194.9 540.5,195.5 541.5,196.4 542.5,196.7 543.5,195.8 544.5,198.8 545.5,196.5 546.5,200.1 547.5,201.1 548.5,197.8 549.5,201.3 550.5,203.4 551.5,203.3 552.5,205.1 553.5,205.1 554.5,206.4 555.5,207.2 556.5,208.2 557.5,208.7 558.5,208.5 559.5,208.8 560.5,206.7 561.5,208.1 562.5,210.7 563.5,211.0 564.5,211.4 565.5,209.5 566.5,211.7 567.5,212.8 568.5,208.7 569.5,212.4 570.5,212.7 571.5,214.1 572.5,212.1 573.5,213.6 574.5,213.0 575.5,211.7 576.5,211.2 577.5,210.5 578.5,209.5 579.5,208.8 580.5,205.5 581.5,208.3 582.5,207.2 583.5,205.8 584.5,206.4 585.5,203.9 586.5,204.9 587.5,203.6 588.5,202.7 589.5,202.0 590.5,201.2 591.5,199.0 592.5,198.0 593.5,196.9 594.5,196.8 595.5,196.6 596.5,195.2 597.5,194.7 598.5,193.2 599.5,192.6 600.5,191.4 601.5,186.1 602.5,188.0 603.5,188.2 604.5,187.6 605.5,185.8 606.5,185.8 607.5,184.8 608.5,178.6 609.5,182.8 610.5,181.8 611.5,176.9 612.5,179.9 613.5,178.3 614.5,178.6 615.5,177.4 616.5,171.7 617.5,175.2 618.5,175.0 619.5,170.3 620.5,171.1 621.5,174.1 622.5,170.1 623.5,174.3 624.5,174.2 625.5,174.2 626.5,171.6 627.5,168.9 628.5,171.4 629.5,171.4 630.5,172.7 631.5,173.0 632.5,170.8 633.5,172.8 634.5,170.9 635.5,172.1 636.5,167.8 637.5,172.1 638.5,166.7 639.5,171.7 640.5,171.9 641.5,171.3 642.5,171.0 643.5,170.6 644.5,171.7 645.5,171.9 646.5,169.2 647.5,171.7 648.5,171.8 649.5,165.2 650.5,171.3 651.5,171.5 652.5,171.2 653.5,170.9 654.5,171.6 655.5,169.0 656.5,171.2 657.5,170.0 658.5,166.1 659.5,169.0 660.5,170.6 661.5,171.4 662.5,169.0 663.5,171.9 664.5,171.9 665.5,171.2 666.5,170.8 667.5,170.9 668.5,172.0 669.5,172.2 670.5,171.5 671.5,171.9 672.5,172.1 673.5,171.0 674.5,169.0 675.5,172.1 676.5,172.2 677.5,170.7 678.5,171.9 679.5,172.2 680.5,172.1 681.5,172.1 682.5,168.5 683.5,172.2 684.5,171.8 685.5,165.8 686.5,171.4 687.5,165.5 688.5,171.6 689.5,172.3 690.5,167.5 691.5,171.8 692.5,171.7 693.5,172.3 694.5,169.5 695.5,172.1 696.5,171.2 697.5,171.6 698.5,171.9 699.5,165.7 700.5,172.4 701.5,170.6 702.5,172.0 703.5,168.1 704.5,167.7 705.5,171.9 706.5,171.9 707.5,172.2 708.5,172.2 709.5,172.3 710.5,172.2 711.5,172.1 712.5,165.4 713.5,168.2 714.5,171.9 715.5,170.4 716.5,172.2 717.5,172.3 718.5,171.9 719.5,170.2 720.5,172.0 721.5,166.8 722.5,169.6 723.5,167.4 724.5,172.1 725.5,172.5 726.5,172.2 727.5,171.6 728.5,172.0 729.5,172.5 730.5,171.2 731.5,172.2 732.5,171.5 733.5,170.3 734.5,170.1 735.5,172.5 736.5,172.3 737.5,172.0 738.5,168.3 739.5,172.3 740.5,172.4 741.5,172.6 742.5,171.4 743.5,166.1 744.5,170.7 745.5,172.5 746.5,170.8 747.5,168.3 748.5,171.1 749.5,172.1 750.5,172.7 751.5,172.3 752.5,172.4 753.5,172.2 754.5,172.6 755.5,172.5 756.5,172.3 757.5,172.6 758.5,170.5 759.5,170.6 760.5,172.2 761.5,172.8 762.5,172.8 763.5,171.5 764.5,172.5 765.5,172.9 766.5,168.1 767.5,172.7 768.5,172.8 769.5,171.5 770.5,172.6 771.5,167.3 772.5,171.5 773.5,172.6 774.5,172.9 775.5,168.6 776.5,168.1 777.5,173.1 778.5,172.9 779.5,166.7 780.5,173.2 781.5,171.4 782.5,173.4 783.5,172.9 784.5,172.6 785.5,172.4 786.5,172.3 787.5,167.1 788.5,173.1 789.5,173.2 790.5,171.5 791.5,167.4 792.5,173.5 793.5,172.9 794.5,173.3 795.5,171.1 796.5,173.5 797.5,173.4 798.5,172.9 799.5,173.8 800.5,173.8 801.5,173.8 802.5,171.0 803.5,173.8 804.5,169.6 805.5,173.8 806.5,170.8 807.5,171.8 808.5,171.8 809.5,173.8 810.5,170.2 811.5,173.0 812.5,172.0 813.5,170.5 814.5,174.2 815.5,172.4 816.5,174.2 817.5,173.1 818.5,168.0 819.5,172.4 820.5,172.8 821.5,168.9 822.5,174.5 823.5,174.5 824.5,174.4 825.5,167.7 826.5,174.4 827.5,173.7 828.5,174.4 829.5,171.6 830.5,174.7 831.5,173.5 832.5,168.4 833.5,173.0 834.5,171.8 835.5,175.1 836.5,169.6 837.5,174.5 838.5,175.0 839.5,174.2 840.5,173.3 841.5,175.2 842.5,174.9 843.5,175.6 844.5,169.0 845.5,175.6 846.5,174.6 847.5,175.5 848.5,174.7 849.5,171.1 850.5,175.9 851.5,173.5 852.5,175.6 853.5,170.1 854.5,175.2 855.5,172.8 856.5,176.3 857.5,176.2 858.5,175.7 859.5,175.9 860.5,176.5 861.5,167.9 862.5,175.2 863.5,172.1 864.5,175.9 865.5,171.5 866.5,167.3 867.5,168.5 868.5,173.7 869.5,169.8 870.5,175.2 871.5,176.2 872.5,174.4 873.5,176.3 874.5,176.4 875.5,170.0 876.5,176.9 877.5,173.4 878.5,173.4 879.5,174.2 880.5,176.9 881.5,176.4 882.5,177.1 883.5,176.3 884.5,175.6 885.5,176.8 886.5,176.6 887.5,177.0 888.5,176.2 889.5,176.8 890.5,174.0 891.5,176.7 892.5,168.9 893.5,176.9 894.5,167.6 895.5,174.9 896.5,174.8 897.5,175.1 898.5,171.4 899.5,175.9 900.5,177.1 901.5,174.3 902.5,174.6 903.5,176.5 904.5,175.3 905.5,175.9 906.5,175.0 907.5,175.3 908.5,169.5 909.5,176.2 910.5,173.7 911.5,173.7 912.5,176.5 913.5,177.1 914.5,176.1 915.5,171.8 916.5,169.4 917.5,172.7 918.5,167.6 919.5,171.2 920.5,177.0 921.5,176.3 922.5,171.3 923.5,176.9 924.5,177.3 925.5,173.0 926.5,177.0 927.5,171.6 928.5,175.8 929.5,172.8 930.5,176.8 931.5,177.4 932.5,171.4 933.5,177.3 934.5,176.7 935.5,175.3 936.5,177.4 937.5,177.2 938.5,171.2 939.5,177.2 940.5,176.6 941.5,176.9 942.5,175.3 943.5,175.5 944.5,177.3 945.5,174.6 946.5,177.4 947.5,169.5 948.5,176.9 949.5,167.8 950.5,174.0 951.5,177.1 952.5,177.4 953.5,176.7 954.5,176.8 955.5,176.3 956.5,177.0 957.5,177.3 958.5,177.2 959.5,177.2 960.5,174.9 961.5,169.8 962.5,174.0 963.5,176.7 964.5,176.8 965.5,176.7 966.5,177.2 967.5,175.0 968.5,176.9 969.5,171.0 970.5,176.9 971.5,172.7 972.5,175.9 973.5,177.6 974.5,177.7 975.5,177.1 976.5,175.1 977.5,171.0 978.5,177.8 979.5,176.7 980.5,176.8 981.5,175.1 982.5,168.9 983.5,168.1 984.5,172.6 985.5,174.8 986.5,177.8 987.5,177.1 988.5,177.6 989.5,177.6 990.5,177.7 991.5,174.2 992.5,177.7 993.5,175.7 994.5,177.5 995.5,174.4 996.5,177.8 997.5,178.0 998.5,169.8 999.5,178.0 1000.5,176.5 1001.5,177.8 1002.5,177.5 1003.5,177.8 1004.5,177.8 1005.5,176.7 1006.5,173.7 1007.5,177.2 1008.5,177.7 1009.5,176.4 1010.5,172.3 1011.5,172.3 1012.5,169.1 1013.5,177.2 1014.5,172.0 1015.5,177.2 1016.5,177.8 1017.5,174.5 1018.5,177.8 1019.5,178.0 1020.5,177.5 1021.5,175.7 1022.5,178.0 1023.5,178.0 1024.5,177.9 1025.5,177.5 1026.5,175.6 1027.5,169.9 1028.5,176.8 1029.5,177.3 1030.5,174.5 1031.5,177.4 1032.5,177.0 1033.5,177.2 1034.5,178.0 1035.5,178.0 1036.5,176.5 1037.5,177.8 1038.5,177.4 1039.5,176.9 1040.5,174.3 1041.5,178.1 1042.5,169.3 1043.5,176.2 1044.5,177.4 1045.5,177.4 1046.5,176.1 1047.5,177.6 1048.5,176.8 1049.5,178.1 1050.5,177.8 1051.5,173.6 1052.5,172.2 1053.5,177.7 1054.5,178.1 1055.5,172.9 1056.5,177.6 1057.5,173.7 1058.5,178.1 1059.5,178.1 1060.5,176.6 1061.5,175.8 1062.5,170.3 1063.5,176.4 1064.5,174.6 1065.5,175.4 1066.5,170.8 1067.5,173.9 1068.5,174.4 1069.5,177.2 1070.5,178.1 1071.5,174.7 1072.5,178.1 1073.5,175.6 1074.5,178.1 1075.5,177.7 1076.5,176.6 1077.5,177.9 1078.5,176.8 1079.5,178.1 1080.5,177.1 1081.5,177.3 1082.5,175.5 1083.5,177.0 1084.5,177.5 1085.5,178.1 1086.5,178.0 1087.5,178.0 1088.5,178.0 1089.5,176.4 1090.5,177.5 1091.5,172.8 1092.5,176.4 1093.5,169.0 1094.5,175.3 1095.5,177.9 1096.5,176.5 1097.5,178.2 1098.5,177.6 1099.5,177.4 1100.5,176.7 1101.5,171.2 1102.5,177.1 1103.5,174.5 1104.5,177.8 1105.5,178.3 1106.5,176.6 1107.5,177.8 1108.5,170.0 1109.5,173.6 1110.5,174.0 1111.5,178.1 1112.5,176.3 1113.5,174.3 1114.5,171.5 1115.5,175.4 1116.5,170.0 1117.5,177.9 1118.5,174.9 1119.5,178.0 1120.5,176.9 1121.5,177.9 1122.5,178.2 1123.5,178.0 1124.5,178.0 1125.5,172.2 1126.5,172.5 1127.5,176.3 1128.5,174.9 1129.5,175.8 1130.5,174.2 1131.5,178.4 1132.5,177.8 1133.5,178.1 1134.5,177.7 1135.5,170.3 1136.5,176.7 1137.5,178.1 1138.5,178.3 1139.5,175.9 1140.5,171.5 1141.5,176.8 1142.5,168.9 1143.5,172.3 1144.5,175.8 1145.5,178.4 1146.5,169.1 1147.5,172.7 1148.5,177.1 1149.5,177.1 1150.5,177.1 1151.5,177.2 1152.5,175.4 1153.5,177.3 1154.5,177.3 1155.5,169.5 1156.5,178.3 1157.5,177.9 1158.5,170.5 1159.5,170.2 1160.5,172.6 1161.5,178.5 1162.5,176.6 1163.5,176.4 1164.5,170.7 1165.5,177.2 1166.5,178.5 1167.5,172.4 1168.5,178.5 1169.5,173.3 1170.5,177.2 1171.5,174.6 1172.5,178.6 1173.5,174.0 1174.5,173.2 1175.5,178.0 1176.5,178.6 1177.5,178.2 1178.5,177.2 1179.5,175.8 1180.5,178.2 1181.5,178.3 1182.5,178.2 1183.5,174.2 1184.5,178.2 1185.5,178.2 1186.5,178.2 1187.5,178.3 1188.5,178.1 1189.5,175.2 1190.5,174.1 1191.5,178.5 1192.5,178.3 1193.5,177.8 1194.5,177.9 1195.5,171.4 1196.5,177.9 1197.5,174.2 1198.5,178.1 1199.5,177.9 1200.5,176.7 1201.5,177.5 1202.5,178.7 1203.5,177.9 1204.5,171.4 1205.5,178.4 1206.5,170.0 1207.5,178.1 1208.5,178.5 1209.5,170.5 1210.5,178.5 1211.5,172.2 1212.5,170.4 1213.5,178.0 1214.5,178.3 1215.5,178.6 1216.5,178.1 1217.5,178.2 1218.5,178.6 1219.5,177.2 1220.5,174.7 1221.5,170.5 1222.5,178.4 1223.5,178.2 1224.5,171.2 1225.5,178.5 1226.5,177.0 1227.5,174.2 1228.5,177.7 1229.5,173.2 1230.5,178.5 1231.5,169.5 1232.5,174.8 1233.5,178.7 1234.5,178.5 1235.5,178.5 1236.5,178.5 1237.5,177.5 1238.5,177.7 1239.5,178.8 1240.5,178.8 1241.5,176.6 1242.5,177.7 1243.5,178.3 1244.5,172.3 1245.5,177.9 1246.5,177.8 1247.5,171.5 1248.5,170.9 1249.5,172.4 1250.5,177.5 1251.5,178.4 1252.5,175.4 1253.5,177.0 1254.5,170.6 1255.5,178.7 1256.5,178.2 1257.5,177.6 1258.5,177.5 1259.5,178.9 1260.5,178.4 1261.5,176.6 1262.5,178.8 1263.5,177.7 1264.5,169.9 1265.5,177.9 1266.5,174.2 1267.5,173.6 1268.5,178.5 1269.5,177.6 1270.5,177.3 1271.5,177.7 1272.5,178.4 1273.5,177.6 1274.5,178.6 1275.5,173.6 1276.5,169.7 1277.5,176.0 1278.5,175.7 1279.5,174.2 1280.5,174.0 1281.5,178.6 1282.5,178.9 1283.5,178.3 1284.5,176.9 1285.5,171.1 1286.5,178.9 1287.5,178.8 1288.5,172.8 1289.5,178.7 1290.5,175.0 1291.5,176.8 1292.5,175.5 1293.5,172.9 1294.5,174.6 L1294.5,192.3 1293.5,190.1 1292.5,186.1 1291.5,186.2 1290.5,195.5 1289.5,189.0 1288.5,186.5 1287.5,195.4 1286.5,188.7 1285.5,188.4 1284.5,193.2 1283.5,190.5 1282.5,187.3 1281.5,193.4 1280.5,186.5 1279.5,186.2 1278.5,190.8 1277.5,190.6 1276.5,193.3 1275.5,190.7 1274.5,186.3 1273.5,186.6 1272.5,191.4 1271.5,187.1 1270.5,194.1 1269.5,186.8 1268.5,192.9 1267.5,190.6 1266.5,186.3 1265.5,186.0 1264.5,186.4 1263.5,188.3 1262.5,187.2 1261.5,187.0 1260.5,187.7 1259.5,187.1 1258.5,186.6 1257.5,193.4 1256.5,187.5 1255.5,188.8 1254.5,186.3 1253.5,186.1 1252.5,186.2 1251.5,186.1 1250.5,195.3 1249.5,186.1 1248.5,191.6 1247.5,186.2 1246.5,186.4 1245.5,187.4 1244.5,187.7 1243.5,186.5 1242.5,188.0 1241.5,186.5 1240.5,186.2 1239.5,186.3 1238.5,186.1 1237.5,188.3 1236.5,190.5 1235.5,185.8 1234.5,189.4 1233.5,186.0 1232.5,186.6 1231.5,185.8 1230.5,194.0 1229.5,186.9 1228.5,187.8 1227.5,194.8 1226.5,186.3 1225.5,186.4 1224.5,187.1 1223.5,189.7 1222.5,185.9 1221.5,185.9 1220.5,187.2 1219.5,187.5 1218.5,187.2 1217.5,186.0 1216.5,185.8 1215.5,186.0 1214.5,193.7 1213.5,185.9 1212.5,186.8 1211.5,189.2 1210.5,188.5 1209.5,186.0 1208.5,189.0 1207.5,193.5 1206.5,193.5 1205.5,192.1 1204.5,185.9 1203.5,185.8 1202.5,187.0 1201.5,190.7 1200.5,189.4 1199.5,186.2 1198.5,190.2 1197.5,190.0 1196.5,185.9 1195.5,195.3 1194.5,186.3 1193.5,195.3 1192.5,186.0 1191.5,189.7 1190.5,187.2 1189.5,188.4 1188.5,186.2 1187.5,186.0 1186.5,192.0 1185.5,187.1 1184.5,188.2 1183.5,186.2 1182.5,186.8 1181.5,185.8 1180.5,192.1 1179.5,186.7 1178.5,186.2 1177.5,187.5 1176.5,189.7 1175.5,186.2 1174.5,186.4 1173.5,194.7 1172.5,185.7 1171.5,190.4 1170.5,187.4 1169.5,188.5 1168.5,185.6 1167.5,194.1 1166.5,185.7 1165.5,194.2 1164.5,185.7 1163.5,187.7 1162.5,188.5 1161.5,186.8 1160.5,193.4 1159.5,193.2 1158.5,194.7 1157.5,188.7 1156.5,186.1 1155.5,187.2 1154.5,187.2 1153.5,185.6 1152.5,186.4 1151.5,185.8 1150.5,186.2 1149.5,185.8 1148.5,185.6 1147.5,189.9 1146.5,188.4 1145.5,187.3 1144.5,185.6 1143.5,185.6 1142.5,186.0 1141.5,185.7 1140.5,185.6 1139.5,185.6 1138.5,193.5 1137.5,193.8 1136.5,186.1 1135.5,186.8 1134.5,189.0 1133.5,186.5 1132.5,189.9 1131.5,193.4 1130.5,185.9 1129.5,192.9 1128.5,186.9 1127.5,187.0 1126.5,191.3 1125.5,185.7 1124.5,186.8 1123.5,185.9 1122.5,186.6 1121.5,185.8 1120.5,185.8 1119.5,185.4 1118.5,185.8 1117.5,191.3 1116.5,188.7 1115.5,186.1 1114.5,193.0 1113.5,187.2 1112.5,185.6 1111.5,186.9 1110.5,185.7 1109.5,185.5 1108.5,189.4 1107.5,185.6 1106.5,187.0 1105.5,188.4 1104.5,191.0 1103.5,185.5 1102.5,185.7 1101.5,186.4 1100.5,194.5 1099.5,187.5 1098.5,188.7 1097.5,190.5 1096.5,185.8 1095.5,188.8 1094.5,185.7 1093.5,185.9 1092.5,186.5 1091.5,186.0 1090.5,187.1 1089.5,186.7 1088.5,186.0 1087.5,185.9 1086.5,187.2 1085.5,189.0 1084.5,189.6 1083.5,188.2 1082.5,193.0 1081.5,186.0 1080.5,185.3 1079.5,191.5 1078.5,190.7 1077.5,186.1 1076.5,192.8 1075.5,193.7 1074.5,185.4 1073.5,186.8 1072.5,190.6 1071.5,185.4 1070.5,185.8 1069.5,186.2 1068.5,186.0 1067.5,186.2 1066.5,185.3 1065.5,194.7 1064.5,186.1 1063.5,185.2 1062.5,189.1 1061.5,185.2 1060.5,192.9 1059.5,187.4 1058.5,189.2 1057.5,187.6 1056.5,190.3 1055.5,185.8 1054.5,194.6 1053.5,188.0 1052.5,186.0 1051.5,186.1 1050.5,185.6 1049.5,185.3 1048.5,189.0 1047.5,186.4 1046.5,187.1 1045.5,185.7 1044.5,187.1 1043.5,193.8 1042.5,185.2 1041.5,186.0 1040.5,186.4 1039.5,185.5 1038.5,185.7 1037.5,185.3 1036.5,185.9 1035.5,186.6 1034.5,190.5 1033.5,186.1 1032.5,185.8 1031.5,186.0 1030.5,185.5 1029.5,185.6 1028.5,192.1 1027.5,186.8 1026.5,191.7 1025.5,186.3 1024.5,192.5 1023.5,185.5 1022.5,186.0 1021.5,190.7 1020.5,193.9 1019.5,185.2 1018.5,186.5 1017.5,188.3 1016.5,190.1 1015.5,185.1 1014.5,193.8 1013.5,187.2 1012.5,186.5 1011.5,185.3 1010.5,185.2 1009.5,186.1 1008.5,186.1 1007.5,185.1 1006.5,185.4 1005.5,185.5 1004.5,185.2 1003.5,186.7 1002.5,186.3 1001.5,189.5 1000.5,186.5 999.5,185.7 998.5,191.8 997.5,190.9 996.5,186.1 995.5,189.2 994.5,189.9 993.5,188.6 992.5,187.4 991.5,185.1 990.5,185.7 989.5,185.6 988.5,194.6 987.5,187.5 986.5,186.0 985.5,194.8 984.5,187.4 983.5,185.7 982.5,194.1 981.5,186.9 980.5,185.4 979.5,185.5 978.5,187.2 977.5,193.2 976.5,185.5 975.5,188.2 974.5,185.5 973.5,191.6 972.5,186.4 971.5,190.5 970.5,185.4 969.5,185.2 968.5,185.0 967.5,185.2 966.5,187.8 965.5,193.2 964.5,185.2 963.5,184.8 962.5,186.7 961.5,185.5 960.5,185.7 959.5,190.5 958.5,190.9 957.5,186.5 956.5,187.8 955.5,192.8 954.5,185.7 953.5,189.7 952.5,186.9 951.5,185.5 950.5,185.3 949.5,187.6 948.5,184.9 947.5,186.7 946.5,184.8 945.5,185.7 944.5,184.8 943.5,187.6 942.5,185.0 941.5,185.1 940.5,184.6 939.5,187.2 938.5,188.0 937.5,186.8 936.5,194.1 935.5,191.5 934.5,190.2 933.5,184.8 932.5,189.8 931.5,185.1 930.5,184.6 929.5,184.7 928.5,191.5 927.5,188.6 926.5,189.1 925.5,185.7 924.5,186.1 923.5,186.8 922.5,184.7 921.5,185.9 920.5,189.2 919.5,187.6 918.5,184.5 917.5,185.7 916.5,189.6 915.5,186.8 914.5,184.7 913.5,194.0 912.5,190.4 911.5,194.0 910.5,184.9 909.5,194.1 908.5,184.5 907.5,186.2 906.5,185.3 905.5,184.3 904.5,186.0 903.5,184.6 902.5,185.1 901.5,185.3 900.5,189.7 899.5,186.0 898.5,186.5 897.5,190.8 896.5,184.5 895.5,184.9 894.5,184.4 893.5,184.9 892.5,184.8 891.5,187.0 890.5,184.4 889.5,185.0 888.5,192.9 887.5,193.7 886.5,188.0 885.5,190.6 884.5,192.5 883.5,184.7 882.5,185.4 881.5,185.0 880.5,184.3 879.5,184.4 878.5,185.6 877.5,184.4 876.5,184.7 875.5,184.6 874.5,184.5 873.5,186.4 872.5,188.9 871.5,184.7 870.5,184.4 869.5,184.0 868.5,184.4 867.5,184.7 866.5,184.0 865.5,187.9 864.5,188.5 863.5,187.3 862.5,188.5 861.5,183.6 860.5,183.9 859.5,184.9 858.5,187.3 857.5,183.5 856.5,183.6 855.5,183.6 854.5,188.6 853.5,193.0 852.5,191.2 851.5,185.3 850.5,184.7 849.5,183.8 848.5,183.8 847.5,189.0 846.5,192.7 845.5,183.1 844.5,183.3 843.5,182.8 842.5,183.1 841.5,183.8 840.5,183.0 839.5,182.7 838.5,182.5 837.5,182.5 836.5,182.6 835.5,182.4 834.5,182.4 833.5,183.3 832.5,182.7 831.5,185.0 830.5,182.6 829.5,185.9 828.5,182.3 827.5,182.8 826.5,181.9 825.5,181.9 824.5,184.3 823.5,181.7 822.5,184.0 821.5,188.5 820.5,182.1 819.5,182.1 818.5,181.6 817.5,187.3 816.5,181.4 815.5,181.7 814.5,181.9 813.5,184.7 812.5,182.9 811.5,181.9 810.5,185.0 809.5,184.1 808.5,181.6 807.5,181.5 806.5,181.7 805.5,182.1 804.5,181.1 803.5,185.4 802.5,181.9 801.5,181.7 800.5,183.2 799.5,181.0 798.5,181.0 797.5,181.1 796.5,181.1 795.5,181.9 794.5,181.1 793.5,182.0 792.5,182.3 791.5,184.4 790.5,182.8 789.5,183.0 788.5,185.4 787.5,181.0 786.5,184.4 785.5,182.1 784.5,182.3 783.5,180.8 782.5,181.6 781.5,180.7 780.5,180.7 779.5,180.5 778.5,180.8 777.5,181.3 776.5,180.3 775.5,180.8 774.5,184.0 773.5,180.8 772.5,181.7 771.5,183.1 770.5,181.4 769.5,186.2 768.5,180.9 767.5,182.0 766.5,181.2 765.5,180.4 764.5,180.2 763.5,180.7 762.5,180.8 761.5,180.5 760.5,180.3 759.5,179.8 758.5,181.0 757.5,181.1 756.5,180.4 755.5,179.9 754.5,181.7 753.5,180.6 752.5,179.9 751.5,180.7 750.5,180.3 749.5,180.3 748.5,179.8 747.5,180.0 746.5,185.8 745.5,181.8 744.5,185.1 743.5,180.1 742.5,183.2 741.5,181.3 740.5,179.7 739.5,180.1 738.5,179.9 737.5,180.2 736.5,182.0 735.5,179.9 734.5,181.6 733.5,179.9 732.5,179.8 731.5,180.3 730.5,179.6 729.5,179.8 728.5,179.9 727.5,179.6 726.5,182.6 725.5,184.2 724.5,180.1 723.5,179.6 722.5,182.0 721.5,180.0 720.5,179.7 719.5,179.9 718.5,185.0 717.5,179.8 716.5,179.5 715.5,180.0 714.5,179.6 713.5,179.7 712.5,181.5 711.5,180.2 710.5,180.3 709.5,179.7 708.5,180.6 707.5,179.9 706.5,182.6 705.5,183.4 704.5,180.2 703.5,180.8 702.5,181.6 701.5,179.5 700.5,180.0 699.5,180.9 698.5,179.8 697.5,185.0 696.5,179.7 695.5,179.7 694.5,181.9 693.5,186.5 692.5,179.4 691.5,179.7 690.5,179.5 689.5,179.6 688.5,182.0 687.5,179.5 686.5,182.2 685.5,179.4 684.5,179.5 683.5,179.9 682.5,182.5 681.5,181.4 680.5,179.6 679.5,182.9 678.5,180.6 677.5,180.3 676.5,179.6 675.5,179.6 674.5,179.5 673.5,180.3 672.5,184.3 671.5,182.6 670.5,179.9 669.5,180.1 668.5,179.4 667.5,183.7 666.5,181.5 665.5,179.2 664.5,180.5 663.5,180.0 662.5,182.4 661.5,182.2 660.5,179.4 659.5,179.3 658.5,179.3 657.5,180.1 656.5,183.2 655.5,180.1 654.5,181.0 653.5,180.8 652.5,179.3 651.5,184.6 650.5,181.8 649.5,179.1 648.5,184.0 647.5,180.2 646.5,179.3 645.5,179.4 644.5,182.4 643.5,179.4 642.5,179.1 641.5,180.1 640.5,185.8 639.5,180.9 638.5,181.2 637.5,179.8 636.5,181.0 635.5,181.7 634.5,183.2 633.5,180.4 632.5,180.5 631.5,180.8 630.5,180.7 629.5,186.5 628.5,181.0 627.5,185.5 626.5,181.6 625.5,181.5 624.5,186.1 623.5,183.3 622.5,188.9 621.5,182.2 620.5,182.6 619.5,182.5 618.5,187.9 617.5,183.2 616.5,189.9 615.5,185.6 614.5,190.2 613.5,186.6 612.5,187.9 611.5,191.6 610.5,189.4 609.5,190.5 608.5,191.1 607.5,193.0 606.5,195.9 605.5,198.4 604.5,197.3 603.5,198.9 602.5,200.7 601.5,203.5 600.5,198.8 599.5,199.8 598.5,200.6 597.5,202.7 596.5,202.7 595.5,203.7 594.5,204.3 593.5,205.4 592.5,207.0 591.5,210.1 590.5,208.1 589.5,212.0 588.5,210.6 587.5,214.0 586.5,212.3 585.5,215.3 584.5,218.2 583.5,216.0 582.5,216.3 581.5,215.9 580.5,217.1 579.5,216.9 578.5,217.4 577.5,218.3 576.5,218.8 575.5,219.3 574.5,220.2 573.5,221.0 572.5,221.1 571.5,222.1 570.5,222.5 569.5,220.6 568.5,223.7 567.5,219.7 566.5,219.2 565.5,218.9 564.5,219.2 563.5,221.2 562.5,220.0 561.5,218.1 560.5,221.3 559.5,216.6 558.5,216.8 557.5,218.9 556.5,219.0 555.5,214.7 554.5,216.8 553.5,214.0 552.5,212.0 551.5,211.2 550.5,213.9 549.5,211.9 548.5,209.3 547.5,209.4 546.5,207.7 545.5,207.1 544.5,207.4 543.5,205.7 542.5,206.0 541.5,203.5 540.5,203.5 539.5,201.9 538.5,201.8 537.5,202.1 536.5,200.7 535.5,198.5 534.5,198.0 533.5,199.5 532.5,197.9 531.5,196.7 530.5,195.9 529.5,195.5 528.5,195.1 527.5,195.4 526.5,194.4 525.5,195.1 524.5,193.2 523.5,192.8 522.5,192.5 521.5,192.6 520.5,191.7 519.5,191.1 518.5,191.7 517.5,190.3 516.5,190.3 515.5,189.4 514.5,188.9 513.5,192.8 512.5,188.3 511.5,187.6 510.5,187.3 509.5,187.7 508.5,190.2 507.5,186.0 506.5,186.6 505.5,186.6 504.5,185.0 503.5,184.8 502.5,186.8 501.5,184.7 500.5,184.0 499.5,183.6 498.5,183.8 497.5,183.4 496.5,183.8 495.5,183.2 494.5,182.5 493.5,182.4 492.5,184.4 491.5,184.1 490.5,183.4 489.5,182.4 488.5,187.0 487.5,184.9 486.5,185.8 485.5,186.9 484.5,188.9 483.5,191.2 482.5,191.1 481.5,193.6 480.5,198.5 479.5,251.3 478.5,330.1 477.5,408.1 476.5,477.1 475.5,484.8 474.5,480.4 473.5,467.1 472.5,463.3 471.5,462.9 470.5,464.0 469.5,463.1 468.5,467.1 467.5,463.3 466.5,463.0 465.5,467.5 464.5,463.0 463.5,463.3 462.5,464.4 461.5,464.0 460.5,466.1 459.5,465.2 458.5,464.2 457.5,463.3 456.5,464.4 455.5,463.6 454.5,464.2 453.5,463.2 452.5,464.9 451.5,464.9 450.5,463.1 449.5,464.7 448.5,464.1 447.5,466.3 446.5,463.0 445.5,465.1 444.5,463.0 443.5,464.2 442.5,463.8 441.5,463.7 440.5,463.2 439.5,464.9 438.5,463.8 437.5,463.8 436.5,463.8 435.5,463.4 434.5,463.4 433.5,463.4 432.5,466.3 431.5,463.5 430.5,463.3 429.5,463.5 428.5,466.9 427.5,463.9 426.5,463.2 425.5,464.8 424.5,463.2 423.5,464.6 422.5,463.4 421.5,464.4 420.5,463.2 419.5,463.4 418.5,463.7 417.5,463.2 416.5,466.2 415.5,463.5 414.5,466.8 413.5,463.9 412.5,467.8 411.5,463.5 410.5,463.4 409.5,463.4 408.5,464.3 407.5,463.3 406.5,465.8 405.5,463.5 404.5,463.8 403.5,464.3 402.5,464.6 401.5,463.3 400.5,463.3 399.5,463.7 398.5,463.3 397.5,466.3 396.5,467.7 395.5,463.4 394.5,464.4 393.5,464.1 392.5,463.5 391.5,464.4 390.5,466.6 389.5,463.5 388.5,467.4 387.5,464.0 386.5,463.8 385.5,463.6 384.5,464.6 383.5,463.5 382.5,463.4 381.5,463.9 380.5,463.5 379.5,465.8 378.5,463.9 377.5,467.2 376.5,463.6 375.5,464.0 374.5,466.8 373.5,467.4 372.5,463.5 371.5,466.7 370.5,465.3 369.5,463.5 368.5,463.5 367.5,465.1 366.5,464.3 365.5,463.7 364.5,464.4 363.5,463.9 362.5,463.5 361.5,464.1 360.5,464.0 359.5,467.2 358.5,465.4 357.5,463.6 356.5,464.7 355.5,464.4 354.5,464.2 353.5,466.9 352.5,463.6 351.5,463.7 350.5,464.0 349.5,465.3 348.5,463.6 347.5,465.5 346.5,464.8 345.5,464.0 344.5,464.4 343.5,463.9 342.5,467.5 341.5,464.7 340.5,464.0 339.5,464.2 338.5,463.7 337.5,464.1 336.5,465.6 335.5,466.7 334.5,464.1 333.5,465.7 332.5,467.2 331.5,466.0 330.5,464.3 329.5,464.1 328.5,466.6 327.5,466.0 326.5,463.7 325.5,463.8 324.5,464.1 323.5,464.2 322.5,466.4 321.5,463.8 320.5,464.2 319.5,464.3 318.5,465.7 317.5,467.8 316.5,463.9 315.5,468.4 314.5,463.9 313.5,463.9 312.5,464.5 311.5,463.8 310.5,463.7 309.5,465.0 308.5,465.5 307.5,463.6 306.5,466.9 305.5,463.6 304.5,464.7 303.5,463.4 302.5,463.7 301.5,463.2 300.5,464.8 299.5,463.2 298.5,467.8 297.5,466.6 296.5,463.2 295.5,465.2 294.5,463.0 293.5,463.7 292.5,463.4 291.5,463.7 290.5,462.7 289.5,462.9 288.5,462.9 287.5,462.5 286.5,463.0 285.5,464.0 284.5,463.3 283.5,462.4 282.5,462.3 281.5,462.1 280.5,462.1 279.5,463.0 278.5,462.2 277.5,465.2 276.5,462.2 275.5,462.3 274.5,465.3 273.5,462.0 272.5,461.6 271.5,462.1 270.5,463.7 269.5,462.0 268.5,461.3 267.5,461.9 266.5,461.4 265.5,461.8 264.5,463.8 263.5,464.4 262.5,461.3 261.5,461.7 260.5,461.5 259.5,462.5 258.5,461.4 257.5,460.8 256.5,461.2 255.5,462.0 254.5,462.2 253.5,460.6 252.5,462.6 251.5,460.5 250.5,460.4 249.5,460.3 248.5,462.2 247.5,460.6 246.5,460.4 245.5,463.5 244.5,462.1 243.5,464.3 242.5,463.2 241.5,461.4 240.5,462.1 239.5,459.8 238.5,460.1 237.5,461.7 236.5,460.2 235.5,462.7 234.5,459.7 233.5,460.7 232.5,459.1 231.5,461.1 230.5,460.7 229.5,459.4 228.5,459.0 227.5,458.7 226.5,459.0 225.5,458.5 224.5,458.5 223.5,462.4 222.5,459.4 221.5,458.5 220.5,458.0 219.5,458.1 218.5,457.8 217.5,457.8 216.5,459.8 215.5,458.4 214.5,457.5 213.5,457.4 212.5,457.8 211.5,459.8 210.5,457.7 209.5,457.4 208.5,457.1 207.5,457.0 206.5,460.8 205.5,459.4 204.5,457.2 203.5,456.8 202.5,456.8 201.5,459.8 200.5,456.7 199.5,457.4 198.5,459.3 197.5,457.2 196.5,456.0 195.5,456.7 194.5,454.6 193.5,457.0 192.5,453.5 191.5,452.2 190.5,452.1 189.5,451.6 188.5,451.1 187.5,448.4 186.5,446.8 185.5,447.9 184.5,444.5 183.5,442.7 182.5,440.6 181.5,438.9 180.5,437.8 179.5,436.3 178.5,430.9 177.5,198.9 176.5,196.6 175.5,199.5 174.5,195.8 173.5,194.9 172.5,197.9 171.5,197.2 170.5,193.8 169.5,194.6 168.5,195.0 167.5,197.0 166.5,193.8 165.5,194.1 164.5,193.8 163.5,194.0 162.5,193.9 161.5,194.0 160.5,196.5 159.5,193.9 158.5,195.4 157.5,194.0 156.5,196.2 155.5,195.3 154.5,197.9 153.5,193.8 152.5,194.7 151.5,197.8 150.5,197.6 149.5,193.9 148.5,196.2 147.5,193.9 146.5,196.7 145.5,194.3 144.5,194.2 143.5,194.7 142.5,194.6 141.5,193.8 140.5,194.0 139.5,194.0 138.5,198.4 137.5,194.9 136.5,194.1 135.5,196.9 134.5,196.0 133.5,194.0 132.5,194.2 131.5,194.9 130.5,195.4 129.5,194.2 128.5,193.9 127.5,193.8 126.5,193.9 125.5,195.6 124.5,194.0 123.5,194.0 122.5,194.8 121.5,194.1 120.5,194.3 119.5,193.9 118.5,196.5 117.5,194.1 116.5,194.1 115.5,193.8 114.5,193.9 113.5,195.3 112.5,198.5 111.5,194.0 110.5,195.0 109.5,194.9 108.5,196.4 107.5,194.3 106.5,193.9 105.5,193.8 104.5,193.8 103.5,194.8 102.5,198.0 101.5,193.8 100.5,196.1 99.5,194.0 98.5,195.9 97.5,194.4 96.5,194.7 95.5,194.3 94.5,194.6Z" fill="#ffffff"/>
<path d="M94.5,257.0 95.5,260.7 96.5,260.6 97.5,259.7 98.5,257.8 99.5,257.0 100.5,259.9 101.5,259.5 102.5,259.4 103.5,257.9 104.5,260.5 105.5,258.3 106.5,257.3 107.5,256.9 108.5,259.4 109.5,260.6 110.5,260.5 111.5,257.0 112.5,260.7 113.5,259.6 114.5,260.8 115.5,260.8 116.5,260.2 117.5,260.4 118.5,257.6 119.5,260.5 120.5,260.6 121.5,260.1 122.5,259.6 123.5,260.7 124.5,260.5 125.5,260.4 126.5,257.1 127.5,260.5 128.5,257.8 129.5,260.1 130.5,260.6 131.5,260.7 132.5,260.2 133.5,259.7 134.5,259.5 135.5,260.5 136.5,257.5 137.5,258.4 138.5,260.2 139.5,256.6 140.5,260.3 141.5,259.8 142.5,258.9 143.5,259.9 144.5,260.8 145.5,259.8 146.5,260.7 147.5,260.4 148.5,260.8 149.5,260.6 150.5,260.7 151.5,258.2 152.5,260.7 153.5,260.4 154.5,260.6 155.5,257.5 156.5,260.8 157.5,258.4 158.5,260.7 159.5,260.5 160.5,259.4 161.5,260.7 162.5,260.7 163.5,259.7 164.5,258.0 165.5,260.9 166.5,260.0 167.5,260.4 168.5,259.1 169.5,259.9 170.5,258.4 171.5,260.2 172.5,260.6 173.5,258.7 174.5,260.6 175.5,260.8 176.5,257.9 177.5,260.6 178.5,260.3 179.5,260.7 180.5,258.5 181.5,259.6 182.5,256.9 183.5,260.6 184.5,259.2 185.5,259.8 186.5,260.8 187.5,260.6 188.5,260.3 189.5,260.8 190.5,258.3 191.5,260.3 192.5,260.9 193.5,259.7 194.5,258.7 195.5,260.9 196.5,260.4 197.5,257.8 198.5,260.0 199.5,260.7 200.5,257.4 201.5,257.9 202.5,259.9 203.5,260.8 204.5,260.9 205.5,260.7 206.5,260.7 207.5,260.5 208.5,260.9 209.5,260.6 210.5,258.8 211.5,260.3 212.5,257.2 213.5,261.0 214.5,260.4 215.5,260.9 216.5,260.8 217.5,261.0 218.5,258.8 219.5,260.5 220.5,260.4 221.5,260.7 222.5,257.8 223.5,260.5 224.5,261.0 225.5,258.9 226.5,260.7 227.5,261.0 228.5,260.9 229.5,259.1 230.5,260.5 231.5,260.0 232.5,257.7 233.5,260.8 234.5,259.7 235.5,260.8 236.5,260.3 237.5,260.7 238.5,260.3 239.5,260.8 240.5,259.1 241.5,260.4 242.5,260.3 243.5,260.9 244.5,260.8 245.5,260.7 246.5,260.2 247.5,260.7 248.5,259.5 249.5,260.2 250.5,259.2 251.5,259.8 252.5,260.9 253.5,260.7 254.5,260.9 255.5,260.6 256.5,261.0 257.5,260.5 258.5,261.0 259.5,260.6 260.5,261.0 261.5,260.9 262.5,260.6 263.5,260.3 264.5,261.0 265.5,261.1 266.5,261.0 267.5,260.4 268.5,260.1 269.5,260.7 270.5,260.9 271.5,260.7 272.5,260.8 273.5,261.0 274.5,257.7 275.5,258.0 276.5,260.4 277.5,257.4 278.5,260.7 279.5,261.1 280.5,258.6 281.5,260.9 282.5,259.1 283.5,260.9 284.5,261.1 285.5,260.9 286.5,260.7 287.5,261.1 288.5,260.9 289.5,259.1 290.5,260.9 291.5,259.6 292.5,261.1 293.5,261.0 294.5,260.8 295.5,258.1 296.5,258.1 297.5,261.1 298.5,259.0 299.5,258.3 300.5,261.1 301.5,260.9 302.5,258.8 303.5,260.9 304.5,261.0 305.5,260.8 306.5,260.0 307.5,258.2 308.5,260.8 309.5,260.9 310.5,261.1 311.5,261.0 312.5,260.9 313.5,261.0 314.5,261.0 315.5,258.0 316.5,261.0 317.5,261.0 318.5,257.8 319.5,261.2 320.5,260.4 321.5,260.8 322.5,261.2 323.5,259.9 324.5,260.7 325.5,260.6 326.5,260.6 327.5,261.0 328.5,261.1 329.5,260.5 330.5,260.5 331.5,261.1 332.5,260.4 333.5,259.9 334.5,260.4 335.5,261.0 336.5,260.9 337.5,260.8 338.5,261.2 339.5,260.7 340.5,260.9 341.5,259.4 342.5,261.0 343.5,258.7 344.5,261.0 345.5,260.9 346.5,261.0 347.5,257.2 348.5,261.2 349.5,257.4 350.5,260.9 351.5,259.5 352.5,260.7 353.5,259.4 354.5,260.9 355.5,260.9 356.5,260.7 357.5,259.4 358.5,261.0 359.5,260.7 360.5,257.8 361.5,260.6 362.5,260.6 363.5,260.4 364.5,260.9 365.5,259.5 366.5,258.2 367.5,257.5 368.5,260.5 369.5,261.3 370.5,259.6 371.5,259.6 372.5,260.0 373.5,261.0 374.5,260.9 375.5,261.3 376.5,261.2 377.5,260.7 378.5,261.3 379.5,259.7 380.5,259.6 381.5,261.2 382.5,261.2 383.5,260.7 384.5,261.1 385.5,261.1 386.5,259.7 387.5,257.2 388.5,261.2 389.5,260.6 390.5,261.2 391.5,261.1 392.5,260.9 393.5,260.6 394.5,261.2 395.5,261.0 396.5,261.1 397.5,261.1 398.5,260.4 399.5,258.0 400.5,261.3 401.5,260.7 402.5,260.7 403.5,260.9 404.5,259.4 405.5,261.2 406.5,260.8 407.5,261.3 408.5,260.5 409.5,261.2 410.5,261.4 411.5,258.4 412.5,257.2 413.5,260.6 414.5,260.6 415.5,261.1 416.5,258.4 417.5,261.1 418.5,261.3 419.5,259.4 420.5,260.0 421.5,261.1 422.5,257.4 423.5,261.3 424.5,260.3 425.5,260.0 426.5,257.4 427.5,260.9 428.5,257.2 429.5,261.0 430.5,261.0 431.5,260.8 432.5,260.9 433.5,261.2 434.5,260.4 435.5,259.4 436.5,257.5 437.5,260.9 438.5,260.1 439.5,258.9 440.5,259.4 441.5,260.5 442.5,259.1 443.5,261.4 444.5,261.2 445.5,261.1 446.5,260.5 447.5,259.0 448.5,261.0 449.5,260.8 450.5,258.6 451.5,258.3 452.5,261.4 453.5,259.5 454.5,261.1 455.5,260.9 456.5,261.4 457.5,258.8 458.5,261.0 459.5,261.3 460.5,260.9 461.5,259.0 462.5,260.9 463.5,258.5 464.5,260.5 465.5,260.3 466.5,257.3 467.5,261.4 468.5,261.1 469.5,261.4 470.5,258.5 471.5,260.9 472.5,258.1 473.5,261.4 474.5,257.2 475.5,261.2 476.5,261.2 477.5,260.5 478.5,260.3 479.5,259.1 480.5,258.9 481.5,259.5 482.5,261.3 483.5,261.5 484.5,257.6 485.5,261.3 486.5,261.5 487.5,258.9 488.5,261.4 489.5,259.6 490.5,259.0 491.5,258.7 492.5,259.3 493.5,261.5 494.5,261.0 495.5,261.5 496.5,258.4 497.5,261.5 498.5,261.3 499.5,261.1 500.5,261.5 501.5,261.4 502.5,261.0 503.5,261.4 504.5,261.5 505.5,261.5 506.5,261.3 507.5,258.5 508.5,259.0 509.5,261.1 510.5,260.4 511.5,261.4 512.5,261.4 513.5,261.6 514.5,259.5 515.5,261.5 516.5,261.4 517.5,261.5 518.5,259.6 519.5,259.5 520.5,257.2 521.5,260.2 522.5,257.8 523.5,260.1 524.5,257.7 525.5,261.3 526.5,259.6 527.5,261.4 528.5,260.1 529.5,261.5 530.5,260.7 531.5,260.7 532.5,260.8 533.5,259.3 534.5,261.6 535.5,261.5 536.5,260.4 537.5,261.6 538.5,261.5 539.5,261.1 540.5,259.9 541.5,261.1 542.5,261.5 543.5,261.5 544.5,261.3 545.5,259.7 546.5,261.4 547.5,261.6 548.5,260.9 549.5,261.4 550.5,257.5 551.5,261.6 552.5,259.5 553.5,260.6 554.5,260.0 555.5,258.2 556.5,261.3 557.5,260.9 558.5,261.3 559.5,258.3 560.5,261.5 561.5,260.2 562.5,261.7 563.5,258.8 564.5,260.8 565.5,258.3 566.5,260.3 567.5,261.4 568.5,260.7 569.5,261.2 570.5,261.7 571.5,258.1 572.5,261.7 573.5,259.4 574.5,261.6 575.5,260.6 576.5,259.5 577.5,259.8 578.5,261.4 579.5,260.5 580.5,258.1 581.5,261.7 582.5,260.5 583.5,261.5 584.5,260.9 585.5,261.1 586.5,258.9 587.5,261.0 588.5,260.7 589.5,261.0 590.5,260.7 591.5,259.5 592.5,261.7 593.5,261.2 594.5,261.3 595.5,261.6 596.5,259.1 597.5,259.9 598.5,261.6 599.5,261.5 600.5,260.9 601.5,260.6 602.5,257.5 603.5,260.8 604.5,261.3 605.5,258.9 606.5,260.7 607.5,261.3 608.5,259.5 609.5,259.0 610.5,260.3 611.5,261.1 612.5,261.6 613.5,260.9 614.5,261.5 615.5,261.7 616.5,261.6 617.5,261.2 618.5,261.3 619.5,261.4 620.5,261.5 621.5,261.4 622.5,261.5 623.5,261.2 624.5,261.3 625.5,258.9 626.5,261.7 627.5,261.4 628.5,261.5 629.5,261.6 630.5,260.2 631.5,258.8 632.5,261.1 633.5,261.3 634.5,260.8 635.5,261.7 636.5,261.6 637.5,261.6 638.5,261.7 639.5,261.7 640.5,261.4 641.5,261.1 642.5,261.4 643.5,258.4 644.5,261.4 645.5,260.3 646.5,261.8 647.5,261.7 648.5,261.5 649.5,261.6 650.5,261.2 651.5,259.2 652.5,259.1 653.5,261.7 654.5,257.5 655.5,260.9 656.5,257.7 657.5,261.3 658.5,261.5 659.5,261.8 660.5,257.9 661.5,261.8 662.5,260.7 663.5,259.0 664.5,261.6 665.5,260.5 666.5,261.5 667.5,261.7 668.5,261.5 669.5,261.7 670.5,261.8 671.5,261.0 672.5,260.8 673.5,260.5 674.5,259.4 675.5,258.4 676.5,257.6 677.5,261.4 678.5,261.8 679.5,261.9 680.5,260.5 681.5,260.6 682.5,258.1 683.5,261.9 684.5,261.6 685.5,260.9 686.5,261.9 687.5,258.4 688.5,258.9 689.5,261.6 690.5,261.8 691.5,261.1 692.5,258.0 693.5,261.8 694.5,261.7 695.5,259.8 696.5,259.2 697.5,261.2 698.5,259.6 699.5,259.1 700.5,261.8 701.5,260.5 702.5,260.2 703.5,258.7 704.5,258.5 705.5,261.5 706.5,261.3 707.5,260.4 708.5,261.5 709.5,257.9 710.5,261.2 711.5,260.8 712.5,261.9 713.5,261.7 714.5,260.7 715.5,258.9 716.5,261.8 717.5,261.9 718.5,261.9 719.5,261.8 720.5,260.8 721.5,261.7 722.5,261.5 723.5,261.1 724.5,260.7 725.5,258.0 726.5,261.7 727.5,261.5 728.5,257.7 729.5,261.8 730.5,261.8 731.5,258.2 732.5,259.7 733.5,261.7 734.5,261.9 735.5,258.8 736.5,258.0 737.5,261.7 738.5,261.8 739.5,261.4 740.5,261.8 741.5,261.9 742.5,261.9 743.5,259.0 744.5,261.8 745.5,258.2 746.5,260.4 747.5,260.2 748.5,261.3 749.5,261.1 750.5,261.4 751.5,261.8 752.5,260.1 753.5,260.8 754.5,260.9 755.5,258.7 756.5,260.9 757.5,260.8 758.5,260.7 759.5,261.7 760.5,261.8 761.5,261.9 762.5,259.4 763.5,259.1 764.5,260.8 765.5,257.7 766.5,261.8 767.5,262.0 768.5,259.6 769.5,261.8 770.5,261.9 771.5,259.8 772.5,260.7 773.5,259.8 774.5,259.0 775.5,259.7 776.5,261.8 777.5,261.3 778.5,261.1 779.5,260.8 780.5,261.8 781.5,260.3 782.5,261.7 783.5,259.2 784.5,261.0 785.5,259.6 786.5,260.3 787.5,260.3 788.5,261.3 789.5,261.9 790.5,262.0 791.5,259.3 792.5,258.0 793.5,261.8 794.5,261.4 795.5,261.9 796.5,261.6 797.5,258.7 798.5,261.9 799.5,262.0 800.5,261.3 801.5,261.7 802.5,259.9 803.5,260.6 804.5,261.5 805.5,259.2 806.5,259.4 807.5,261.7 808.5,261.1 809.5,257.7 810.5,261.9 811.5,260.9 812.5,258.3 813.5,261.8 814.5,259.1 815.5,261.5 816.5,261.7 817.5,261.5 818.5,262.1 819.5,260.7 820.5,261.0 821.5,261.0 822.5,262.0 823.5,261.2 824.5,261.0 825.5,262.0 826.5,262.1 827.5,261.9 828.5,262.0 829.5,261.5 830.5,261.6 831.5,258.7 832.5,258.9 833.5,259.0 834.5,260.4 835.5,260.9 836.5,258.8 837.5,261.6 838.5,260.9 839.5,261.7 840.5,261.7 841.5,262.0 842.5,261.7 843.5,261.3 844.5,261.3 845.5,262.1 846.5,258.6 847.5,259.8 848.5,262.0 849.5,259.2 850.5,261.5 851.5,262.1 852.5,260.5 853.5,259.1 854.5,259.7 855.5,261.7 856.5,262.0 857.5,259.7 858.5,258.5 859.5,261.5 860.5,262.1 861.5,262.0 862.5,259.8 863.5,261.8 864.5,262.1 865.5,261.6 866.5,260.4 867.5,262.0 868.5,261.8 869.5,258.0 870.5,261.7 871.5,261.1 872.5,262.1 873.5,262.0 874.5,261.8 875.5,261.9 876.5,258.0 877.5,260.9 878.5,262.1 879.5,259.4 880.5,259.6 881.5,262.0 882.5,262.1 883.5,258.1 884.5,261.7 885.5,261.5 886.5,261.6 887.5,262.0 888.5,262.0 889.5,262.0 890.5,260.9 891.5,261.4 892.5,262.0 893.5,262.1 894.5,261.4 895.5,262.0 896.5,262.1 897.5,261.5 898.5,261.8 899.5,261.8 900.5,260.6 901.5,262.0 902.5,262.1 903.5,261.8 904.5,262.1 905.5,261.2 906.5,262.1 907.5,262.1 908.5,261.2 909.5,261.9 910.5,258.5 911.5,261.8 912.5,258.3 913.5,261.8 914.5,262.0 915.5,262.1 916.5,261.6 917.5,261.7 918.5,262.2 919.5,262.0 920.5,262.1 921.5,261.1 922.5,261.4 923.5,262.0 924.5,261.2 925.5,261.1 926.5,259.6 927.5,261.3 928.5,260.3 929.5,260.1 930.5,259.0 931.5,259.7 932.5,262.1 933.5,261.9 934.5,260.4 935.5,260.4 936.5,261.9 937.5,262.0 938.5,262.1 939.5,262.2 940.5,260.2 941.5,262.1 942.5,262.0 943.5,262.1 944.5,259.5 945.5,258.4 946.5,261.3 947.5,262.1 948.5,260.1 949.5,258.9 950.5,262.1 951.5,262.2 952.5,262.0 953.5,262.1 954.5,261.0 955.5,262.3 956.5,261.0 957.5,261.8 958.5,261.8 959.5,260.6 960.5,262.1 961.5,261.4 962.5,260.5 963.5,260.5 964.5,262.1 965.5,260.8 966.5,257.9 967.5,261.4 968.5,262.0 969.5,261.9 970.5,262.2 971.5,262.2 972.5,258.3 973.5,262.2 974.5,261.5 975.5,260.2 976.5,262.0 977.5,262.2 978.5,259.4 979.5,262.0 980.5,261.5 981.5,260.2 982.5,262.0 983.5,259.4 984.5,262.2 985.5,262.2 986.5,261.0 987.5,259.7 988.5,259.6 989.5,262.1 990.5,261.1 991.5,262.3 992.5,262.3 993.5,262.2 994.5,261.2 995.5,261.8 996.5,262.2 997.5,262.1 998.5,261.0 999.5,261.5 1000.5,262.3 1001.5,262.0 1002.5,260.4 1003.5,262.0 1004.5,260.7 1005.5,260.2 1006.5,262.1 1007.5,261.8 1008.5,262.3 1009.5,260.8 1010.5,261.3 1011.5,260.0 1012.5,261.8 1013.5,262.3 1014.5,262.2 1015.5,262.1 1016.5,261.7 1017.5,261.9 1018.5,262.2 1019.5,261.0 1020.5,261.9 1021.5,262.2 1022.5,259.7 1023.5,259.8 1024.5,262.3 1025.5,260.2 1026.5,262.2 1027.5,262.3 1028.5,261.0 1029.5,262.0 1030.5,260.3 1031.5,262.3 1032.5,261.2 1033.5,258.2 1034.5,261.4 1035.5,261.8 1036.5,262.1 1037.5,261.0 1038.5,260.7 1039.5,261.4 1040.5,261.6 1041.5,262.3 1042.5,262.2 1043.5,262.3 1044.5,261.9 1045.5,260.6 1046.5,259.1 1047.5,262.2 1048.5,259.8 1049.5,262.1 1050.5,262.1 1051.5,262.2 1052.5,260.9 1053.5,262.1 1054.5,262.1 1055.5,259.3 1056.5,262.0 1057.5,261.5 1058.5,261.7 1059.5,262.3 1060.5,261.7 1061.5,261.9 1062.5,262.1 1063.5,261.9 1064.5,262.3 1065.5,262.2 1066.5,262.4 1067.5,261.2 1068.5,262.4 1069.5,260.4 1070.5,260.7 1071.5,262.2 1072.5,261.8 1073.5,262.2 1074.5,259.4 1075.5,260.9 1076.5,262.4 1077.5,259.3 1078.5,262.1 1079.5,259.4 1080.5,258.1 1081.5,262.2 1082.5,261.6 1083.5,262.1 1084.5,262.2 1085.5,258.2 1086.5,261.9 1087.5,260.4 1088.5,259.8 1089.5,262.1 1090.5,262.2 1091.5,262.1 1092.5,262.3 1093.5,259.2 1094.5,262.1 1095.5,262.4 1096.5,262.3 1097.5,261.9 1098.5,262.2 1099.5,262.1 1100.5,259.2 1101.5,260.9 1102.5,262.4 1103.5,262.2 1104.5,262.3 1105.5,261.3 1106.5,262.2 1107.5,258.2 1108.5,259.5 1109.5,259.6 1110.5,262.3 1111.5,262.5 1112.5,262.3 1113.5,262.1 1114.5,262.0 1115.5,258.4 1116.5,261.7 1117.5,261.2 1118.5,259.6 1119.5,261.8 1120.5,261.9 1121.5,260.2 1122.5,262.4 1123.5,262.4 1124.5,259.9 1125.5,260.8 1126.5,261.5 1127.5,262.4 1128.5,260.7 1129.5,259.8 1130.5,262.2 1131.5,262.4 1132.5,260.0 1133.5,262.3 1134.5,260.3 1135.5,258.9 1136.5,262.3 1137.5,262.3 1138.5,262.3 1139.5,262.0 1140.5,262.2 1141.5,261.4 1142.5,261.4 1143.5,262.5 1144.5,259.5 1145.5,262.4 1146.5,261.8 1147.5,261.6 1148.5,261.7 1149.5,261.9 1150.5,259.9 1151.5,261.1 1152.5,262.4 1153.5,262.4 1154.5,261.9 1155.5,262.2 1156.5,262.0 1157.5,262.2 1158.5,261.8 1159.5,262.4 1160.5,262.0 1161.5,262.0 1162.5,262.5 1163.5,262.3 1164.5,262.3 1165.5,259.9 1166.5,259.3 1167.5,261.5 1168.5,261.0 1169.5,262.5 1170.5,261.7 1171.5,261.1 1172.5,262.4 1173.5,262.4 1174.5,262.5 1175.5,259.9 1176.5,258.6 1177.5,258.2 1178.5,259.5 1179.5,260.3 1180.5,261.8 1181.5,260.9 1182.5,260.4 1183.5,261.1 1184.5,262.4 1185.5,259.2 1186.5,262.2 1187.5,262.4 1188.5,261.9 1189.5,260.0 1190.5,262.5 1191.5,261.0 1192.5,262.2 1193.5,262.4 1194.5,262.3 1195.5,262.6 1196.5,262.6 1197.5,262.0 1198.5,262.2 1199.5,262.3 1200.5,261.3 1201.5,262.2 1202.5,262.5 1203.5,260.0 1204.5,262.0 1205.5,262.6 1206.5,262.1 1207.5,258.8 1208.5,262.2 1209.5,262.3 1210.5,262.2 1211.5,260.2 1212.5,258.2 1213.5,262.2 1214.5,262.2 1215.5,261.0 1216.5,261.2 1217.5,259.2 1218.5,262.5 1219.5,262.6 1220.5,260.1 1221.5,260.6 1222.5,261.6 1223.5,259.9 1224.5,259.7 1225.5,261.7 1226.5,262.0 1227.5,262.1 1228.5,262.5 1229.5,262.5 1230.5,262.0 1231.5,261.3 1232.5,262.6 1233.5,262.6 1234.5,261.2 1235.5,262.0 1236.5,262.4 1237.5,262.1 1238.5,262.6 1239.5,260.2 1240.5,262.0 1241.5,262.1 1242.5,262.0 1243.5,262.5 1244.5,262.2 1245.5,262.6 1246.5,259.3 1247.5,260.9 1248.5,258.8 1249.5,262.6 1250.5,258.9 1251.5,261.6 1252.5,261.6 1253.5,260.7 1254.5,262.4 1255.5,259.6 1256.5,260.2 1257.5,262.1 1258.5,262.2 1259.5,262.2 1260.5,262.2 1261.5,262.5 1262.5,259.7 1263.5,261.9 1264.5,262.6 1265.5,262.6 1266.5,262.7 1267.5,259.8 1268.5,262.6 1269.5,261.8 1270.5,262.6 1271.5,262.4 1272.5,260.4 1273.5,261.5 1274.5,262.4 1275.5,259.2 1276.5,261.2 1277.5,260.6 1278.5,262.7 1279.5,262.4 1280.5,262.5 1281.5,261.0 1282.5,262.5 1283.5,261.5 1284.5,262.0 1285.5,262.7 1286.5,262.5 1287.5,262.2 1288.5,262.7 1289.5,261.4 1290.5,262.7 1291.5,262.1 1292.5,261.6 1293.5,259.9 1294.5,262.0 L1294.5,271.2 1293.5,271.2 1292.5,271.4 1291.5,272.8 1290.5,270.7 1289.5,270.5 1288.5,270.4 1287.5,270.7 1286.5,270.4 1285.5,273.8 1284.5,273.2 1283.5,270.4 1282.5,272.1 1281.5,270.3 1280.5,274.2 1279.5,270.3 1278.5,270.8 1277.5,270.4 1276.5,271.1 1275.5,273.1 1274.5,270.3 1273.5,270.9 1272.5,270.7 1271.5,270.8 1270.5,270.4 1269.5,271.5 1268.5,270.9 1267.5,270.8 1266.5,270.5 1265.5,270.5 1264.5,270.3 1263.5,272.9 1262.5,273.7 1261.5,273.0 1260.5,271.5 1259.5,270.3 1258.5,270.4 1257.5,270.9 1256.5,271.5 1255.5,273.1 1254.5,272.1 1253.5,272.2 1252.5,270.2 1251.5,270.5 1250.5,274.1 1249.5,270.9 1248.5,270.9 1247.5,271.2 1246.5,270.6 1245.5,270.5 1244.5,270.8 1243.5,270.5 1242.5,270.6 1241.5,271.9 1240.5,270.8 1239.5,271.1 1238.5,271.0 1237.5,270.2 1236.5,271.3 1235.5,270.4 1234.5,270.3 1233.5,271.9 1232.5,270.5 1231.5,270.2 1230.5,270.9 1229.5,270.7 1228.5,270.6 1227.5,270.6 1226.5,270.5 1225.5,274.1 1224.5,270.2 1223.5,270.4 1222.5,270.5 1221.5,271.9 1220.5,270.8 1219.5,270.2 1218.5,270.4 1217.5,270.3 1216.5,270.6 1215.5,270.4 1214.5,273.1 1213.5,272.1 1212.5,270.4 1211.5,271.6 1210.5,270.2 1209.5,270.5 1208.5,270.4 1207.5,273.1 1206.5,270.4 1205.5,270.3 1204.5,270.2 1203.5,273.9 1202.5,273.9 1201.5,270.4 1200.5,270.4 1199.5,273.4 1198.5,270.4 1197.5,272.8 1196.5,271.2 1195.5,274.3 1194.5,271.6 1193.5,270.9 1192.5,270.1 1191.5,274.0 1190.5,270.2 1189.5,271.0 1188.5,270.2 1187.5,270.2 1186.5,270.2 1185.5,270.2 1184.5,270.1 1183.5,270.9 1182.5,271.1 1181.5,273.2 1180.5,271.7 1179.5,273.3 1178.5,270.4 1177.5,270.3 1176.5,270.5 1175.5,270.2 1174.5,271.0 1173.5,272.8 1172.5,271.0 1171.5,274.2 1170.5,271.3 1169.5,270.1 1168.5,270.5 1167.5,271.8 1166.5,273.2 1165.5,270.1 1164.5,270.4 1163.5,270.5 1162.5,270.3 1161.5,271.2 1160.5,270.1 1159.5,270.1 1158.5,270.1 1157.5,270.1 1156.5,270.2 1155.5,270.5 1154.5,270.4 1153.5,273.8 1152.5,272.4 1151.5,270.8 1150.5,271.5 1149.5,270.5 1148.5,270.1 1147.5,270.6 1146.5,270.1 1145.5,271.5 1144.5,270.4 1143.5,273.8 1142.5,272.3 1141.5,270.4 1140.5,273.5 1139.5,270.1 1138.5,270.1 1137.5,274.1 1136.5,271.4 1135.5,270.1 1134.5,271.0 1133.5,270.1 1132.5,271.0 1131.5,270.4 1130.5,273.1 1129.5,270.3 1128.5,270.1 1127.5,270.1 1126.5,270.2 1125.5,270.1 1124.5,273.2 1123.5,270.6 1122.5,270.1 1121.5,270.5 1120.5,270.2 1119.5,270.1 1118.5,270.1 1117.5,270.4 1116.5,272.4 1115.5,270.1 1114.5,270.1 1113.5,271.2 1112.5,270.1 1111.5,270.7 1110.5,270.7 1109.5,270.5 1108.5,273.4 1107.5,273.8 1106.5,273.3 1105.5,270.0 1104.5,272.6 1103.5,270.0 1102.5,272.8 1101.5,273.9 1100.5,272.9 1099.5,272.2 1098.5,270.1 1097.5,270.8 1096.5,270.2 1095.5,271.0 1094.5,272.2 1093.5,272.0 1092.5,270.1 1091.5,270.4 1090.5,270.5 1089.5,270.0 1088.5,271.2 1087.5,270.6 1086.5,270.0 1085.5,270.2 1084.5,270.2 1083.5,273.4 1082.5,272.2 1081.5,270.5 1080.5,270.0 1079.5,270.0 1078.5,270.1 1077.5,271.3 1076.5,270.1 1075.5,274.3 1074.5,270.0 1073.5,272.4 1072.5,271.8 1071.5,272.5 1070.5,270.0 1069.5,271.6 1068.5,271.7 1067.5,272.5 1066.5,270.0 1065.5,270.1 1064.5,270.1 1063.5,273.0 1062.5,270.0 1061.5,269.9 1060.5,270.1 1059.5,270.0 1058.5,270.6 1057.5,270.6 1056.5,270.2 1055.5,274.1 1054.5,270.6 1053.5,274.0 1052.5,270.5 1051.5,270.1 1050.5,270.0 1049.5,271.3 1048.5,269.9 1047.5,271.6 1046.5,271.8 1045.5,270.0 1044.5,270.3 1043.5,270.6 1042.5,270.1 1041.5,269.9 1040.5,271.7 1039.5,270.3 1038.5,270.2 1037.5,270.4 1036.5,270.4 1035.5,270.4 1034.5,271.9 1033.5,270.5 1032.5,270.6 1031.5,269.9 1030.5,270.1 1029.5,273.0 1028.5,270.2 1027.5,270.0 1026.5,270.4 1025.5,270.1 1024.5,271.7 1023.5,271.3 1022.5,270.0 1021.5,273.3 1020.5,270.7 1019.5,270.5 1018.5,270.6 1017.5,270.1 1016.5,271.1 1015.5,273.3 1014.5,269.9 1013.5,270.2 1012.5,269.9 1011.5,271.4 1010.5,270.0 1009.5,270.2 1008.5,270.5 1007.5,270.0 1006.5,271.0 1005.5,272.5 1004.5,269.9 1003.5,271.7 1002.5,270.3 1001.5,272.1 1000.5,270.2 999.5,271.1 998.5,270.2 997.5,270.0 996.5,272.1 995.5,273.7 994.5,270.4 993.5,272.2 992.5,269.9 991.5,272.5 990.5,269.9 989.5,270.6 988.5,272.1 987.5,270.1 986.5,270.1 985.5,270.0 984.5,270.0 983.5,269.9 982.5,269.9 981.5,270.2 980.5,272.7 979.5,272.7 978.5,271.7 977.5,270.5 976.5,272.1 975.5,273.6 974.5,270.5 973.5,271.4 972.5,271.7 971.5,270.3 970.5,271.0 969.5,269.8 968.5,269.9 967.5,269.9 966.5,269.8 965.5,270.2 964.5,273.4 963.5,269.9 962.5,270.6 961.5,270.0 960.5,269.9 959.5,270.4 958.5,269.8 957.5,269.8 956.5,270.0 955.5,271.7 954.5,271.9 953.5,269.9 952.5,271.8 951.5,269.9 950.5,269.9 949.5,273.8 948.5,269.9 947.5,271.3 946.5,273.4 945.5,272.6 944.5,271.3 943.5,269.8 942.5,269.9 941.5,272.8 940.5,269.9 939.5,270.1 938.5,270.0 937.5,270.1 936.5,271.0 935.5,272.8 934.5,270.0 933.5,271.6 932.5,269.9 931.5,269.9 930.5,270.4 929.5,271.1 928.5,272.0 927.5,269.8 926.5,269.9 925.5,269.8 924.5,272.0 923.5,270.9 922.5,272.2 921.5,270.0 920.5,272.9 919.5,270.8 918.5,269.8 917.5,269.8 916.5,271.3 915.5,269.9 914.5,272.2 913.5,272.2 912.5,273.4 911.5,269.8 910.5,269.7 909.5,272.1 908.5,269.8 907.5,272.2 906.5,271.0 905.5,271.7 904.5,269.7 903.5,271.7 902.5,270.1 901.5,270.3 900.5,271.9 899.5,270.9 898.5,269.7 897.5,270.5 896.5,271.8 895.5,273.8 894.5,270.8 893.5,269.7 892.5,270.9 891.5,271.0 890.5,270.5 889.5,270.0 888.5,269.8 887.5,270.9 886.5,269.8 885.5,269.7 884.5,269.7 883.5,269.8 882.5,271.3 881.5,272.8 880.5,273.5 879.5,269.8 878.5,271.9 877.5,270.7 876.5,270.8 875.5,269.7 874.5,270.3 873.5,271.3 872.5,269.7 871.5,269.8 870.5,272.0 869.5,270.0 868.5,269.9 867.5,273.5 866.5,270.3 865.5,269.9 864.5,271.8 863.5,269.7 862.5,270.1 861.5,270.0 860.5,270.6 859.5,269.8 858.5,269.8 857.5,269.6 856.5,270.1 855.5,270.1 854.5,271.5 853.5,270.3 852.5,271.5 851.5,272.8 850.5,269.7 849.5,269.9 848.5,270.2 847.5,273.6 846.5,271.2 845.5,270.1 844.5,271.6 843.5,271.4 842.5,270.6 841.5,270.1 840.5,269.6 839.5,269.7 838.5,270.6 837.5,273.2 836.5,269.7 835.5,273.6 834.5,272.3 833.5,271.8 832.5,271.3 831.5,270.3 830.5,269.6 829.5,271.5 828.5,269.7 827.5,270.4 826.5,269.8 825.5,269.7 824.5,270.5 823.5,270.4 822.5,271.5 821.5,271.1 820.5,269.8 819.5,273.3 818.5,270.7 817.5,272.0 816.5,269.8 815.5,272.3 814.5,269.6 813.5,272.6 812.5,272.4 811.5,270.5 810.5,271.1 809.5,269.8 808.5,269.7 807.5,270.0 806.5,269.6 805.5,269.6 804.5,269.6 803.5,270.0 802.5,269.7 801.5,269.7 800.5,269.7 799.5,269.9 798.5,273.6 797.5,269.6 796.5,270.3 795.5,270.5 794.5,269.6 793.5,270.4 792.5,271.5 791.5,272.5 790.5,269.6 789.5,270.7 788.5,269.5 787.5,269.9 786.5,269.9 785.5,271.9 784.5,272.0 783.5,271.0 782.5,272.8 781.5,269.6 780.5,269.6 779.5,270.1 778.5,269.6 777.5,269.6 776.5,269.6 775.5,269.6 774.5,269.6 773.5,269.8 772.5,272.6 771.5,270.0 770.5,270.5 769.5,269.7 768.5,269.6 767.5,270.6 766.5,270.5 765.5,270.0 764.5,269.6 763.5,270.0 762.5,269.6 761.5,270.2 760.5,269.5 759.5,273.2 758.5,272.0 757.5,270.8 756.5,270.7 755.5,270.6 754.5,270.9 753.5,269.5 752.5,269.5 751.5,270.2 750.5,269.8 749.5,271.4 748.5,272.5 747.5,272.1 746.5,269.5 745.5,269.8 744.5,270.2 743.5,270.3 742.5,270.6 741.5,269.6 740.5,269.6 739.5,270.0 738.5,269.5 737.5,270.8 736.5,269.7 735.5,269.7 734.5,270.5 733.5,269.9 732.5,270.1 731.5,269.6 730.5,269.9 729.5,269.6 728.5,270.8 727.5,273.7 726.5,269.4 725.5,270.4 724.5,272.0 723.5,269.7 722.5,270.2 721.5,269.9 720.5,269.9 719.5,269.8 718.5,270.8 717.5,269.6 716.5,269.5 715.5,269.8 714.5,269.4 713.5,271.3 712.5,269.8 711.5,272.8 710.5,269.7 709.5,271.0 708.5,270.5 707.5,269.6 706.5,269.8 705.5,269.8 704.5,270.2 703.5,269.7 702.5,272.4 701.5,273.1 700.5,270.4 699.5,270.0 698.5,271.6 697.5,271.8 696.5,270.9 695.5,271.8 694.5,271.6 693.5,269.4 692.5,271.1 691.5,269.8 690.5,269.5 689.5,269.4 688.5,269.4 687.5,269.4 686.5,271.5 685.5,273.5 684.5,269.5 683.5,270.1 682.5,271.0 681.5,269.4 680.5,270.3 679.5,269.4 678.5,271.2 677.5,269.4 676.5,271.1 675.5,269.9 674.5,269.4 673.5,271.4 672.5,270.0 671.5,270.2 670.5,269.7 669.5,269.6 668.5,270.7 667.5,269.4 666.5,269.4 665.5,269.6 664.5,269.6 663.5,273.0 662.5,272.7 661.5,270.3 660.5,269.8 659.5,269.5 658.5,271.0 657.5,269.6 656.5,269.4 655.5,269.7 654.5,269.4 653.5,270.7 652.5,269.7 651.5,270.7 650.5,270.6 649.5,269.8 648.5,269.5 647.5,269.3 646.5,272.2 645.5,270.4 644.5,272.0 643.5,270.6 642.5,269.7 641.5,272.0 640.5,271.7 639.5,270.7 638.5,270.4 637.5,269.3 636.5,269.3 635.5,269.3 634.5,270.3 633.5,269.9 632.5,270.8 631.5,269.4 630.5,271.9 629.5,273.6 628.5,269.5 627.5,270.0 626.5,269.5 625.5,270.1 624.5,269.6 623.5,270.3 622.5,272.1 621.5,272.5 620.5,269.4 619.5,269.5 618.5,269.6 617.5,272.7 616.5,269.3 615.5,269.6 614.5,269.4 613.5,269.3 612.5,273.0 611.5,269.4 610.5,270.4 609.5,269.9 608.5,272.4 607.5,269.6 606.5,269.4 605.5,269.4 604.5,270.8 603.5,270.1 602.5,269.3 601.5,272.2 600.5,269.6 599.5,269.5 598.5,269.5 597.5,270.4 596.5,271.4 595.5,271.0 594.5,270.7 593.5,271.5 592.5,270.5 591.5,269.6 590.5,272.4 589.5,271.5 588.5,269.3 587.5,272.0 586.5,269.2 585.5,269.4 584.5,269.4 583.5,269.3 582.5,271.1 581.5,269.7 580.5,270.7 579.5,271.7 578.5,270.4 577.5,269.4 576.5,269.9 575.5,269.4 574.5,270.3 573.5,269.6 572.5,270.2 571.5,269.3 570.5,269.9 569.5,269.7 568.5,269.8 567.5,272.4 566.5,269.2 565.5,269.3 564.5,271.2 563.5,269.7 562.5,271.1 561.5,271.0 560.5,269.3 559.5,269.2 558.5,269.6 557.5,269.3 556.5,269.4 555.5,269.2 554.5,269.5 553.5,269.8 552.5,269.2 551.5,269.4 550.5,269.7 549.5,271.5 548.5,273.2 547.5,270.5 546.5,270.3 545.5,269.2 544.5,269.2 543.5,271.2 542.5,270.2 541.5,269.3 540.5,269.4 539.5,269.7 538.5,269.7 537.5,269.8 536.5,270.5 535.5,269.8 534.5,269.8 533.5,270.6 532.5,269.8 531.5,269.2 530.5,269.4 529.5,269.9 528.5,269.2 527.5,270.7 526.5,272.6 525.5,270.2 524.5,270.9 523.5,271.0 522.5,269.5 521.5,269.5 520.5,269.3 519.5,270.4 518.5,271.0 517.5,269.2 516.5,269.1 515.5,269.4 514.5,269.2 513.5,269.3 512.5,269.4 511.5,270.6 510.5,269.6 509.5,269.6 508.5,273.3 507.5,269.2 506.5,273.2 505.5,271.6 504.5,269.2 503.5,269.5 502.5,269.3 501.5,269.5 500.5,270.9 499.5,270.5 498.5,271.8 497.5,270.4 496.5,269.1 495.5,271.9 494.5,269.1 493.5,270.3 492.5,269.7 491.5,270.7 490.5,272.5 489.5,269.1 488.5,272.2 487.5,271.5 486.5,270.1 485.5,269.4 484.5,269.1 483.5,270.9 482.5,269.0 481.5,270.9 480.5,269.1 479.5,270.7 478.5,269.5 477.5,269.2 476.5,269.1 475.5,269.3 474.5,269.2 473.5,269.8 472.5,270.7 471.5,269.1 470.5,269.6 469.5,272.2 468.5,269.2 467.5,270.4 466.5,273.3 465.5,272.0 464.5,270.1 463.5,269.6 462.5,270.7 461.5,269.1 460.5,271.7 459.5,269.4 458.5,269.8 457.5,269.3 456.5,269.2 455.5,269.6 454.5,270.0 453.5,269.0 452.5,270.0 451.5,270.7 450.5,269.5 449.5,271.9 448.5,269.2 447.5,271.5 446.5,271.3 445.5,273.1 444.5,269.4 443.5,270.2 442.5,269.0 441.5,269.3 440.5,269.0 439.5,269.5 438.5,269.3 437.5,269.0 436.5,269.0 435.5,271.9 434.5,269.6 433.5,269.4 432.5,270.4 431.5,269.1 430.5,269.0 429.5,269.9 428.5,269.0 427.5,268.9 426.5,269.1 425.5,272.1 424.5,270.8 423.5,270.1 422.5,270.4 421.5,269.9 420.5,270.5 419.5,269.5 418.5,269.7 417.5,269.2 416.5,269.9 415.5,269.0 414.5,271.3 413.5,269.3 412.5,271.2 411.5,269.3 410.5,269.1 409.5,268.9 408.5,269.6 407.5,269.5 406.5,270.5 405.5,268.9 404.5,269.3 403.5,270.0 402.5,268.9 401.5,270.5 400.5,269.2 399.5,270.0 398.5,269.8 397.5,270.1 396.5,269.0 395.5,269.0 394.5,269.1 393.5,269.1 392.5,270.9 391.5,269.0 390.5,269.6 389.5,270.3 388.5,269.4 387.5,271.0 386.5,271.5 385.5,272.7 384.5,271.5 383.5,271.5 382.5,268.9 381.5,270.7 380.5,269.4 379.5,272.8 378.5,268.9 377.5,268.8 376.5,269.0 375.5,268.9 374.5,269.3 373.5,271.5 372.5,269.0 371.5,268.8 370.5,270.3 369.5,269.9 368.5,269.1 367.5,270.2 366.5,270.3 365.5,269.1 364.5,269.2 363.5,269.6 362.5,273.0 361.5,270.0 360.5,270.8 359.5,270.0 358.5,269.3 357.5,268.8 356.5,269.4 355.5,271.0 354.5,268.8 353.5,268.9 352.5,273.1 351.5,270.4 350.5,270.4 349.5,270.8 348.5,270.4 347.5,268.9 346.5,270.5 345.5,268.8 344.5,268.9 343.5,271.4 342.5,269.6 341.5,268.8 340.5,268.9 339.5,271.5 338.5,268.8 337.5,271.1 336.5,268.8 335.5,270.8 334.5,268.7 333.5,269.3 332.5,270.0 331.5,268.8 330.5,269.3 329.5,268.9 328.5,268.8 327.5,268.7 326.5,268.9 325.5,268.8 324.5,269.2 323.5,270.7 322.5,270.2 321.5,270.5 320.5,268.8 319.5,269.2 318.5,268.9 317.5,272.5 316.5,268.8 315.5,268.8 314.5,269.0 313.5,268.7 312.5,270.1 311.5,270.3 310.5,268.9 309.5,268.9 308.5,270.5 307.5,269.2 306.5,268.8 305.5,268.8 304.5,269.0 303.5,268.7 302.5,268.7 301.5,271.3 300.5,268.8 299.5,269.2 298.5,269.3 297.5,271.7 296.5,270.2 295.5,268.9 294.5,268.7 293.5,268.8 292.5,269.1 291.5,269.0 290.5,269.8 289.5,269.6 288.5,270.4 287.5,268.7 286.5,268.7 285.5,271.0 284.5,270.8 283.5,269.7 282.5,268.7 281.5,269.6 280.5,269.0 279.5,269.6 278.5,269.0 277.5,271.9 276.5,268.7 275.5,269.9 274.5,269.2 273.5,271.7 272.5,269.3 271.5,268.6 270.5,270.7 269.5,270.2 268.5,268.9 267.5,271.9 266.5,270.9 265.5,268.7 264.5,271.2 263.5,268.7 262.5,269.9 261.5,269.0 260.5,269.1 259.5,268.7 258.5,268.9 257.5,268.7 256.5,272.1 255.5,270.7 254.5,268.6 253.5,269.7 252.5,268.7 251.5,270.0 250.5,268.6 249.5,268.8 248.5,268.6 247.5,268.6 246.5,268.7 245.5,272.6 244.5,270.6 243.5,269.3 242.5,269.4 241.5,269.8 240.5,268.7 239.5,271.2 238.5,270.8 237.5,271.8 236.5,268.7 235.5,268.9 234.5,272.0 233.5,268.7 232.5,269.3 231.5,268.5 230.5,269.6 229.5,268.7 228.5,269.0 227.5,268.6 226.5,268.7 225.5,269.7 224.5,269.8 223.5,269.5 222.5,269.3 221.5,268.8 220.5,268.5 219.5,270.6 218.5,268.6 217.5,272.8 216.5,268.6 215.5,268.7 214.5,268.6 213.5,272.2 212.5,268.8 211.5,271.3 210.5,268.7 209.5,268.8 208.5,269.0 207.5,268.7 206.5,268.5 205.5,268.5 204.5,271.8 203.5,268.6 202.5,268.7 201.5,270.5 200.5,270.0 199.5,272.4 198.5,270.1 197.5,268.8 196.5,272.0 195.5,268.6 194.5,268.5 193.5,270.6 192.5,272.1 191.5,270.2 190.5,269.3 189.5,269.2 188.5,272.4 187.5,268.6 186.5,268.5 185.5,268.6 184.5,268.8 183.5,271.2 182.5,268.6 181.5,270.6 180.5,269.0 179.5,268.5 178.5,268.5 177.5,270.9 176.5,269.1 175.5,270.5 174.5,269.5 173.5,268.4 172.5,271.1 171.5,268.5 170.5,268.6 169.5,272.6 168.5,268.4 167.5,268.4 166.5,268.4 165.5,269.0 164.5,269.5 163.5,268.5 162.5,268.4 161.5,268.5 160.5,268.9 159.5,270.1 158.5,268.9 157.5,268.4 156.5,268.7 155.5,270.7 154.5,269.9 153.5,268.5 152.5,268.4 151.5,268.5 150.5,268.5 149.5,268.4 148.5,272.3 147.5,268.6 146.5,269.7 145.5,268.6 144.5,268.9 143.5,271.9 142.5,270.6 141.5,268.6 140.5,269.9 139.5,270.0 138.5,269.2 137.5,268.9 136.5,268.8 135.5,270.6 134.5,268.4 133.5,268.5 132.5,270.4 131.5,268.3 130.5,268.6 129.5,268.6 128.5,268.4 127.5,268.4 126.5,268.9 125.5,271.7 124.5,268.7 123.5,272.7 122.5,268.9 121.5,268.7 120.5,269.2 119.5,269.1 118.5,268.5 117.5,269.4 116.5,268.9 115.5,271.6 114.5,268.9 113.5,268.4 112.5,270.6 111.5,269.4 110.5,270.2 109.5,272.0 108.5,269.2 107.5,269.0 106.5,270.1 105.5,269.1 104.5,268.4 103.5,269.1 102.5,268.3 101.5,271.6 100.5,271.7 99.5,268.5 98.5,268.4 97.5,268.5 96.5,268.3 95.5,272.6 94.5,268.3Z" fill="#00ff00"/>
<path d="M94.5,207.9 95.5,205.8 96.5,207.4 97.5,204.4 98.5,207.4 99.5,208.2 100.5,208.1 101.5,203.8 102.5,208.7 103.5,208.2 104.5,207.7 105.5,208.4 106.5,204.1 107.5,207.2 108.5,208.9 109.5,208.7 110.5,204.6 111.5,208.9 112.5,208.7 113.5,209.0 114.5,208.7 115.5,208.8 116.5,209.0 117.5,206.6 118.5,208.9 119.5,208.9 120.5,208.9 121.5,208.8 122.5,207.4 123.5,208.3 124.5,208.0 125.5,208.7 126.5,208.2 127.5,206.2 128.5,205.0 129.5,208.0 130.5,208.6 131.5,207.0 132.5,208.2 133.5,209.0 134.5,207.7 135.5,208.3 136.5,208.2 137.5,204.9 138.5,208.2 139.5,208.5 140.5,208.6 141.5,208.8 142.5,207.6 143.5,207.6 144.5,203.3 145.5,208.4 146.5,204.1 147.5,206.6 148.5,208.1 149.5,207.6 150.5,208.8 151.5,208.7 152.5,207.9 153.5,208.8 154.5,208.9 155.5,206.3 156.5,202.7 157.5,209.0 158.5,208.4 159.5,205.8 160.5,209.0 161.5,206.2 162.5,208.8 163.5,208.6 164.5,206.7 165.5,203.3 166.5,205.5 167.5,209.0 168.5,207.6 169.5,208.9 170.5,208.6 171.5,208.3 172.5,208.9 173.5,208.9 174.5,208.4 175.5,206.7 176.5,227.2 177.5,267.6 178.5,267.0 179.5,266.6 180.5,264.5 181.5,259.3 182.5,255.9 183.5,252.4 184.5,250.0 185.5,245.7 186.5,245.4 187.5,251.2 188.5,255.5 189.5,258.5 190.5,261.8 191.5,266.8 192.5,270.3 193.5,270.1 194.5,267.9 195.5,270.4 196.5,266.2 197.5,269.7 198.5,267.0 199.5,266.7 200.5,270.8 201.5,268.4 202.5,270.5 203.5,270.9 204.5,270.3 205.5,270.6 206.5,271.0 207.5,270.9 208.5,270.9 209.5,266.3 210.5,268.2 211.5,270.6 212.5,271.0 213.5,267.3 214.5,270.8 215.5,271.2 216.5,270.2 217.5,268.0 218.5,269.8 219.5,270.9 220.5,270.8 221.5,271.1 222.5,266.8 223.5,269.1 224.5,270.7 225.5,266.8 226.5,270.4 227.5,271.0 228.5,271.2 229.5,270.2 230.5,269.5 231.5,265.1 232.5,270.6 233.5,271.1 234.5,269.1 235.5,271.1 236.5,270.8 237.5,270.9 238.5,270.0 239.5,270.0 240.5,270.3 241.5,270.9 242.5,266.3 243.5,270.7 244.5,269.8 245.5,271.1 246.5,271.0 247.5,268.7 248.5,269.8 249.5,270.9 250.5,265.6 251.5,268.8 252.5,266.1 253.5,269.5 254.5,270.2 255.5,266.6 256.5,270.2 257.5,269.8 258.5,269.9 259.5,268.9 260.5,269.8 261.5,268.9 262.5,268.2 263.5,267.9 264.5,266.9 265.5,269.3 266.5,270.9 267.5,266.9 268.5,271.0 269.5,266.7 270.5,271.1 271.5,270.2 272.5,271.0 273.5,271.2 274.5,270.2 275.5,270.5 276.5,270.8 277.5,270.3 278.5,271.0 279.5,269.6 280.5,271.0 281.5,269.6 282.5,268.5 283.5,268.0 284.5,269.9 285.5,270.7 286.5,271.0 287.5,267.0 288.5,271.1 289.5,271.1 290.5,266.6 291.5,271.2 292.5,271.1 293.5,266.0 294.5,270.7 295.5,270.5 296.5,270.7 297.5,268.5 298.5,265.1 299.5,269.3 300.5,266.4 301.5,267.3 302.5,270.8 303.5,271.1 304.5,270.8 305.5,271.1 306.5,270.9 307.5,268.3 308.5,271.0 309.5,271.2 310.5,271.1 311.5,270.2 312.5,269.6 313.5,267.2 314.5,271.0 315.5,267.5 316.5,269.7 317.5,268.1 318.5,271.1 319.5,266.5 320.5,271.2 321.5,270.6 322.5,267.2 323.5,271.2 324.5,268.6 325.5,270.9 326.5,271.2 327.5,267.1 328.5,267.0 329.5,270.2 330.5,271.1 331.5,265.0 332.5,268.6 333.5,271.1 334.5,268.8 335.5,265.6 336.5,271.2 337.5,269.3 338.5,270.0 339.5,271.8 340.5,271.2 341.5,272.3 342.5,271.8 343.5,268.6 344.5,270.7 345.5,268.8 346.5,268.1 347.5,267.5 348.5,269.7 349.5,268.4 350.5,267.6 351.5,265.8 352.5,265.9 353.5,263.5 354.5,261.0 355.5,257.8 356.5,255.5 357.5,252.4 358.5,243.9 359.5,236.1 360.5,229.7 361.5,224.9 362.5,224.4 363.5,242.7 364.5,266.0 365.5,285.0 366.5,302.8 367.5,320.6 368.5,349.4 369.5,381.5 370.5,396.0 371.5,418.7 372.5,429.3 373.5,447.8 374.5,457.2 375.5,454.4 376.5,452.7 377.5,445.8 378.5,442.8 379.5,438.9 380.5,434.4 381.5,430.7 382.5,427.7 383.5,421.8 384.5,417.9 385.5,419.0 386.5,417.7 387.5,414.9 388.5,404.2 389.5,396.7 390.5,385.3 391.5,379.4 392.5,370.8 393.5,356.0 394.5,358.9 395.5,361.0 396.5,368.1 397.5,370.1 398.5,380.8 399.5,384.4 400.5,388.6 401.5,393.7 402.5,397.7 403.5,402.6 404.5,409.0 405.5,411.1 406.5,399.0 407.5,395.4 408.5,394.8 409.5,428.2 410.5,462.5 411.5,484.3 412.5,500.6 413.5,520.6 414.5,529.9 415.5,531.8 416.5,534.0 417.5,541.9 418.5,554.3 419.5,565.2 420.5,553.0 421.5,531.9 422.5,505.9 423.5,488.0 424.5,484.2 425.5,481.1 426.5,476.4 427.5,471.1 428.5,427.3 429.5,395.0 430.5,363.3 431.5,291.2 432.5,281.6 433.5,301.4 434.5,331.8 435.5,360.9 436.5,382.7 437.5,410.8 438.5,418.6 439.5,430.1 440.5,443.2 441.5,451.6 442.5,470.6 443.5,483.6 444.5,496.0 445.5,515.3 446.5,529.2 447.5,540.8 448.5,550.8 449.5,562.6 450.5,573.9 451.5,585.3 452.5,586.7 453.5,580.4 454.5,568.9 455.5,561.0 456.5,550.3 457.5,544.4 458.5,524.9 459.5,498.4 460.5,481.0 461.5,475.1 462.5,482.2 463.5,484.8 464.5,486.3 465.5,478.1 466.5,470.2 467.5,459.6 468.5,455.5 469.5,458.9 470.5,465.3 471.5,489.2 472.5,496.2 473.5,509.2 474.5,558.5 475.5,598.9 476.5,596.3 477.5,598.9 478.5,599.3 479.5,597.5 480.5,599.6 481.5,597.5 482.5,598.4 483.5,597.9 484.5,598.7 485.5,598.0 486.5,598.9 487.5,468.6 488.5,478.1 489.5,465.5 490.5,441.4 491.5,412.4 492.5,392.5 493.5,367.9 494.5,356.5 495.5,333.4 496.5,316.1 497.5,295.4 498.5,287.1 499.5,268.1 500.5,253.7 501.5,251.3 502.5,248.5 503.5,245.1 504.5,240.6 505.5,237.8 506.5,233.1 507.5,232.9 508.5,229.5 509.5,227.7 510.5,225.0 511.5,222.6 512.5,220.2 513.5,217.7 514.5,215.1 515.5,209.4 516.5,210.9 517.5,211.6 518.5,211.2 519.5,210.9 520.5,209.8 521.5,208.9 522.5,210.8 523.5,208.9 524.5,209.0 525.5,207.7 526.5,210.0 527.5,209.2 528.5,209.4 529.5,207.6 530.5,208.2 531.5,204.8 532.5,208.6 533.5,208.4 534.5,203.7 535.5,207.3 536.5,207.2 537.5,206.3 538.5,205.7 539.5,205.2 540.5,204.7 541.5,204.9 542.5,201.9 543.5,202.9 544.5,202.6 545.5,199.3 546.5,202.5 547.5,197.6 548.5,201.7 549.5,201.4 550.5,199.8 551.5,198.1 552.5,200.2 553.5,199.5 554.5,199.1 555.5,198.9 556.5,198.4 557.5,198.0 558.5,197.1 559.5,196.3 560.5,195.6 561.5,194.9 562.5,193.9 563.5,193.8 564.5,193.0 565.5,191.8 566.5,188.7 567.5,189.8 568.5,189.9 569.5,189.7 570.5,184.7 571.5,188.5 572.5,187.7 573.5,187.2 574.5,185.8 575.5,185.3 576.5,184.2 577.5,184.5 578.5,183.4 579.5,184.2 580.5,182.1 581.5,182.9 582.5,182.9 583.5,181.6 584.5,179.8 585.5,176.6 586.5,180.9 587.5,177.7 588.5,178.2 589.5,176.1 590.5,179.3 591.5,177.2 592.5,179.1 593.5,180.3 594.5,177.3 595.5,179.6 596.5,181.0 597.5,181.3 598.5,181.5 599.5,182.1 600.5,178.0 601.5,179.8 602.5,176.8 603.5,183.0 604.5,182.6 605.5,183.2 606.5,184.1 607.5,181.9 608.5,180.5 609.5,184.5 610.5,184.1 611.5,185.4 612.5,183.5 613.5,185.9 614.5,182.6 615.5,186.6 616.5,186.8 617.5,180.7 618.5,181.7 619.5,187.7 620.5,185.5 621.5,188.3 622.5,184.6 623.5,184.9 624.5,189.1 625.5,189.6 626.5,185.0 627.5,189.7 628.5,189.1 629.5,189.6 630.5,189.3 631.5,191.0 632.5,190.9 633.5,185.4 634.5,192.2 635.5,186.4 636.5,192.7 637.5,188.3 638.5,193.1 639.5,192.9 640.5,193.7 641.5,193.3 642.5,192.9 643.5,194.1 644.5,195.0 645.5,192.1 646.5,195.4 647.5,191.5 648.5,195.4 649.5,195.7 650.5,196.0 651.5,195.9 652.5,190.2 653.5,195.8 654.5,194.8 655.5,193.1 656.5,193.7 657.5,193.7 658.5,196.8 659.5,196.4 660.5,196.8 661.5,193.7 662.5,195.6 663.5,197.0 664.5,197.3 665.5,195.8 666.5,194.9 667.5,196.5 668.5,196.3 669.5,195.0 670.5,198.0 671.5,197.5 672.5,198.1 673.5,196.8 674.5,193.8 675.5,198.1 676.5,198.3 677.5,198.6 678.5,197.5 679.5,197.7 680.5,197.9 681.5,196.5 682.5,194.3 683.5,196.5 684.5,195.5 685.5,198.9 686.5,198.7 687.5,199.1 688.5,199.3 689.5,198.3 690.5,199.5 691.5,199.5 692.5,199.5 693.5,199.9 694.5,198.3 695.5,196.9 696.5,199.3 697.5,199.6 698.5,195.3 699.5,199.9 700.5,198.5 701.5,199.8 702.5,199.4 703.5,195.8 704.5,193.8 705.5,199.9 706.5,198.8 707.5,197.7 708.5,197.7 709.5,199.8 710.5,198.3 711.5,199.0 712.5,199.2 713.5,195.4 714.5,199.8 715.5,199.4 716.5,196.4 717.5,194.2 718.5,199.7 719.5,198.9 720.5,199.8 721.5,200.0 722.5,199.9 723.5,197.8 724.5,199.8 725.5,195.3 726.5,195.3 727.5,199.3 728.5,199.8 729.5,195.1 730.5,197.5 731.5,196.2 732.5,199.9 733.5,198.3 734.5,197.1 735.5,199.9 736.5,199.7 737.5,196.2 738.5,199.8 739.5,196.4 740.5,199.4 741.5,196.6 742.5,198.7 743.5,197.3 744.5,198.7 745.5,199.1 746.5,197.9 747.5,200.1 748.5,198.3 749.5,198.9 750.5,199.8 751.5,200.1 752.5,196.7 753.5,198.7 754.5,200.0 755.5,200.0 756.5,198.8 757.5,199.7 758.5,198.9 759.5,199.7 760.5,198.8 761.5,199.1 762.5,200.0 763.5,197.1 764.5,199.8 765.5,199.9 766.5,199.8 767.5,199.6 768.5,197.1 769.5,200.1 770.5,200.0 771.5,199.5 772.5,199.7 773.5,199.8 774.5,199.1 775.5,199.9 776.5,197.9 777.5,196.3 778.5,199.3 779.5,197.2 780.5,199.6 781.5,197.3 782.5,199.9 783.5,195.9 784.5,197.0 785.5,199.5 786.5,198.7 787.5,199.7 788.5,199.8 789.5,199.7 790.5,200.1 791.5,197.5 792.5,200.1 793.5,199.8 794.5,198.9 795.5,195.2 796.5,200.0 797.5,199.9 798.5,199.9 799.5,193.9 800.5,195.9 801.5,196.2 802.5,199.7 803.5,199.6 804.5,199.8 805.5,197.2 806.5,198.5 807.5,199.9 808.5,198.3 809.5,198.5 810.5,197.1 811.5,194.0 812.5,197.7 813.5,199.9 814.5,197.8 815.5,199.4 816.5,199.8 817.5,194.7 818.5,199.7 819.5,200.1 820.5,196.7 821.5,200.0 822.5,196.7 823.5,200.2 824.5,199.9 825.5,200.0 826.5,198.8 827.5,198.3 828.5,197.4 829.5,199.2 830.5,199.7 831.5,199.7 832.5,196.7 833.5,200.2 834.5,199.5 835.5,199.5 836.5,200.2 837.5,198.9 838.5,200.0 839.5,196.8 840.5,200.0 841.5,196.2 842.5,198.4 843.5,198.9 844.5,196.1 845.5,199.7 846.5,199.4 847.5,198.7 848.5,195.0 849.5,199.5 850.5,195.6 851.5,199.5 852.5,200.2 853.5,199.4 854.5,199.5 855.5,199.8 856.5,194.6 857.5,196.9 858.5,199.8 859.5,197.5 860.5,199.9 861.5,198.5 862.5,198.3 863.5,199.9 864.5,196.8 865.5,200.0 866.5,198.3 867.5,199.9 868.5,198.3 869.5,199.5 870.5,198.9 871.5,200.0 872.5,197.0 873.5,199.9 874.5,200.0 875.5,199.9 876.5,199.6 877.5,198.7 878.5,194.8 879.5,199.4 880.5,199.5 881.5,199.5 882.5,199.7 883.5,199.9 884.5,200.1 885.5,200.0 886.5,199.4 887.5,198.5 888.5,199.3 889.5,198.8 890.5,193.4 891.5,200.1 892.5,198.9 893.5,198.5 894.5,199.5 895.5,200.1 896.5,198.7 897.5,194.9 898.5,199.9 899.5,198.0 900.5,199.7 901.5,197.7 902.5,199.7 903.5,200.1 904.5,196.8 905.5,196.1 906.5,199.8 907.5,195.3 908.5,200.0 909.5,199.8 910.5,200.1 911.5,195.7 912.5,196.9 913.5,199.2 914.5,199.8 915.5,200.2 916.5,199.7 917.5,194.8 918.5,200.1 919.5,199.5 920.5,198.7 921.5,196.1 922.5,198.3 923.5,200.0 924.5,199.1 925.5,200.1 926.5,195.5 927.5,195.2 928.5,200.2 929.5,199.2 930.5,196.6 931.5,196.8 932.5,200.1 933.5,199.8 934.5,197.9 935.5,193.9 936.5,200.0 937.5,195.1 938.5,194.2 939.5,194.1 940.5,199.3 941.5,199.4 942.5,200.2 943.5,200.0 944.5,200.2 945.5,194.8 946.5,197.8 947.5,199.4 948.5,199.4 949.5,199.8 950.5,197.8 951.5,197.5 952.5,198.4 953.5,193.5 954.5,194.3 955.5,197.3 956.5,200.0 957.5,199.4 958.5,195.9 959.5,199.5 960.5,198.2 961.5,200.0 962.5,200.1 963.5,198.5 964.5,199.7 965.5,199.8 966.5,194.7 967.5,199.6 968.5,200.0 969.5,200.1 970.5,199.8 971.5,199.6 972.5,200.1 973.5,200.1 974.5,193.5 975.5,200.0 976.5,196.2 977.5,197.0 978.5,197.0 979.5,196.7 980.5,199.9 981.5,200.1 982.5,193.5 983.5,199.9 984.5,198.3 985.5,197.3 986.5,199.9 987.5,200.2 988.5,198.2 989.5,199.8 990.5,196.4 991.5,195.9 992.5,200.0 993.5,199.4 994.5,198.4 995.5,200.2 996.5,199.9 997.5,200.1 998.5,200.2 999.5,200.1 1000.5,200.2 1001.5,199.4 1002.5,194.6 1003.5,198.2 1004.5,198.0 1005.5,196.3 1006.5,194.0 1007.5,194.4 1008.5,200.1 1009.5,199.8 1010.5,199.6 1011.5,199.4 1012.5,195.4 1013.5,199.8 1014.5,196.4 1015.5,195.8 1016.5,196.6 1017.5,199.0 1018.5,199.2 1019.5,199.8 1020.5,199.7 1021.5,199.9 1022.5,198.6 1023.5,198.4 1024.5,194.3 1025.5,194.9 1026.5,198.6 1027.5,200.2 1028.5,200.1 1029.5,200.0 1030.5,200.1 1031.5,197.8 1032.5,195.0 1033.5,198.4 1034.5,199.9 1035.5,200.0 1036.5,199.7 1037.5,200.0 1038.5,197.9 1039.5,199.7 1040.5,200.0 1041.5,198.5 1042.5,200.2 1043.5,199.7 1044.5,199.9 1045.5,196.4 1046.5,200.0 1047.5,200.0 1048.5,199.1 1049.5,196.2 1050.5,199.2 1051.5,199.6 1052.5,199.8 1053.5,194.8 1054.5,199.6 1055.5,195.1 1056.5,195.4 1057.5,199.8 1058.5,200.2 1059.5,200.1 1060.5,197.8 1061.5,199.1 1062.5,194.7 1063.5,197.6 1064.5,194.7 1065.5,198.7 1066.5,197.8 1067.5,199.9 1068.5,198.1 1069.5,200.1 1070.5,196.7 1071.5,200.0 1072.5,200.1 1073.5,200.0 1074.5,199.9 1075.5,194.8 1076.5,197.4 1077.5,198.5 1078.5,199.0 1079.5,196.3 1080.5,200.1 1081.5,199.0 1082.5,199.9 1083.5,194.9 1084.5,200.1 1085.5,200.1 1086.5,200.1 1087.5,199.1 1088.5,200.1 1089.5,199.2 1090.5,199.0 1091.5,199.3 1092.5,200.1 1093.5,199.7 1094.5,199.8 1095.5,199.9 1096.5,200.0 1097.5,195.3 1098.5,198.6 1099.5,199.7 1100.5,198.3 1101.5,199.7 1102.5,197.9 1103.5,199.8 1104.5,200.1 1105.5,198.9 1106.5,193.9 1107.5,199.9 1108.5,196.6 1109.5,199.0 1110.5,196.3 1111.5,198.9 1112.5,199.2 1113.5,198.6 1114.5,200.2 1115.5,199.8 1116.5,199.9 1117.5,199.4 1118.5,198.4 1119.5,197.3 1120.5,197.9 1121.5,198.1 1122.5,197.8 1123.5,199.4 1124.5,200.0 1125.5,197.2 1126.5,194.5 1127.5,200.2 1128.5,200.1 1129.5,198.9 1130.5,200.1 1131.5,200.1 1132.5,195.0 1133.5,200.1 1134.5,199.4 1135.5,194.4 1136.5,199.4 1137.5,199.9 1138.5,199.0 1139.5,200.2 1140.5,197.5 1141.5,200.0 1142.5,196.7 1143.5,199.9 1144.5,199.8 1145.5,199.3 1146.5,196.4 1147.5,198.9 1148.5,196.4 1149.5,199.9 1150.5,198.9 1151.5,199.7 1152.5,199.7 1153.5,193.7 1154.5,196.0 1155.5,194.8 1156.5,200.1 1157.5,197.4 1158.5,199.6 1159.5,199.9 1160.5,199.8 1161.5,200.0 1162.5,199.0 1163.5,199.5 1164.5,199.6 1165.5,199.2 1166.5,195.3 1167.5,199.9 1168.5,199.8 1169.5,194.8 1170.5,197.6 1171.5,200.0 1172.5,197.0 1173.5,198.5 1174.5,199.9 1175.5,200.2 1176.5,196.1 1177.5,199.6 1178.5,195.0 1179.5,199.9 1180.5,200.2 1181.5,199.0 1182.5,200.2 1183.5,197.5 1184.5,200.1 1185.5,200.0 1186.5,200.2 1187.5,199.7 1188.5,199.9 1189.5,198.7 1190.5,200.0 1191.5,194.3 1192.5,200.0 1193.5,200.1 1194.5,194.3 1195.5,199.5 1196.5,200.0 1197.5,195.4 1198.5,196.2 1199.5,200.1 1200.5,200.2 1201.5,199.0 1202.5,197.4 1203.5,200.1 1204.5,200.2 1205.5,194.9 1206.5,199.4 1207.5,197.4 1208.5,198.7 1209.5,199.8 1210.5,196.3 1211.5,197.2 1212.5,199.4 1213.5,193.4 1214.5,200.2 1215.5,199.9 1216.5,197.0 1217.5,200.0 1218.5,199.9 1219.5,199.3 1220.5,198.9 1221.5,200.2 1222.5,199.9 1223.5,195.2 1224.5,199.6 1225.5,200.1 1226.5,200.0 1227.5,199.8 1228.5,198.5 1229.5,198.7 1230.5,200.2 1231.5,199.8 1232.5,197.3 1233.5,200.1 1234.5,199.8 1235.5,199.5 1236.5,197.7 1237.5,199.8 1238.5,199.8 1239.5,199.8 1240.5,199.8 1241.5,199.8 1242.5,199.9 1243.5,199.6 1244.5,199.7 1245.5,195.7 1246.5,199.4 1247.5,199.7 1248.5,200.2 1249.5,195.6 1250.5,199.9 1251.5,199.8 1252.5,199.5 1253.5,196.2 1254.5,199.8 1255.5,196.7 1256.5,200.1 1257.5,199.8 1258.5,198.7 1259.5,198.7 1260.5,199.8 1261.5,199.1 1262.5,197.6 1263.5,199.3 1264.5,197.4 1265.5,199.3 1266.5,200.0 1267.5,199.4 1268.5,197.8 1269.5,193.9 1270.5,196.3 1271.5,199.7 1272.5,199.8 1273.5,199.7 1274.5,200.2 1275.5,198.4 1276.5,199.3 1277.5,198.0 1278.5,199.5 1279.5,199.8 1280.5,199.5 1281.5,198.8 1282.5,198.4 1283.5,196.2 1284.5,193.7 1285.5,194.7 1286.5,200.1 1287.5,196.8 1288.5,200.0 1289.5,197.0 1290.5,199.7 1291.5,198.6 1292.5,195.4 1293.5,198.5 1294.5,197.0 L1294.5,211.3 1293.5,211.6 1292.5,214.2 1291.5,211.6 1290.5,214.7 1289.5,216.5 1288.5,212.1 1287.5,212.0 1286.5,211.3 1285.5,215.0 1284.5,211.2 1283.5,215.2 1282.5,216.9 1281.5,211.4 1280.5,211.3 1279.5,214.1 1278.5,214.8 1277.5,212.3 1276.5,212.2 1275.5,215.6 1274.5,213.6 1273.5,215.6 1272.5,211.5 1271.5,211.8 1270.5,211.7 1269.5,211.6 1268.5,217.3 1267.5,214.1 1266.5,211.6 1265.5,211.6 1264.5,213.8 1263.5,211.6 1262.5,212.6 1261.5,211.4 1260.5,211.6 1259.5,211.3 1258.5,211.2 1257.5,213.1 1256.5,211.3 1255.5,211.2 1254.5,211.6 1253.5,211.8 1252.5,212.2 1251.5,211.4 1250.5,211.7 1249.5,211.4 1248.5,212.4 1247.5,211.9 1246.5,211.5 1245.5,214.6 1244.5,211.7 1243.5,211.5 1242.5,211.3 1241.5,211.8 1240.5,215.0 1239.5,211.4 1238.5,211.4 1237.5,213.0 1236.5,212.0 1235.5,211.3 1234.5,211.4 1233.5,212.0 1232.5,211.4 1231.5,212.1 1230.5,211.4 1229.5,217.0 1228.5,212.3 1227.5,211.9 1226.5,213.4 1225.5,213.0 1224.5,213.9 1223.5,216.8 1222.5,213.7 1221.5,212.1 1220.5,211.4 1219.5,211.4 1218.5,212.3 1217.5,215.2 1216.5,211.4 1215.5,212.2 1214.5,212.1 1213.5,215.4 1212.5,211.6 1211.5,214.5 1210.5,211.3 1209.5,215.3 1208.5,211.2 1207.5,212.2 1206.5,213.5 1205.5,211.7 1204.5,211.7 1203.5,211.6 1202.5,212.1 1201.5,213.1 1200.5,211.3 1199.5,212.4 1198.5,211.3 1197.5,211.6 1196.5,215.7 1195.5,217.0 1194.5,211.6 1193.5,212.4 1192.5,211.7 1191.5,212.7 1190.5,216.5 1189.5,211.7 1188.5,212.2 1187.5,211.5 1186.5,215.8 1185.5,212.3 1184.5,212.6 1183.5,211.8 1182.5,211.4 1181.5,211.2 1180.5,214.4 1179.5,211.6 1178.5,212.7 1177.5,215.2 1176.5,211.3 1175.5,211.2 1174.5,216.7 1173.5,214.6 1172.5,214.7 1171.5,212.2 1170.5,213.6 1169.5,216.5 1168.5,214.1 1167.5,212.9 1166.5,214.3 1165.5,214.2 1164.5,211.3 1163.5,217.4 1162.5,216.2 1161.5,217.2 1160.5,215.4 1159.5,211.6 1158.5,212.0 1157.5,212.3 1156.5,211.8 1155.5,211.6 1154.5,213.2 1153.5,211.7 1152.5,217.2 1151.5,211.3 1150.5,216.0 1149.5,215.0 1148.5,212.2 1147.5,211.7 1146.5,211.4 1145.5,212.1 1144.5,213.0 1143.5,211.3 1142.5,211.5 1141.5,211.5 1140.5,212.2 1139.5,211.7 1138.5,212.1 1137.5,211.4 1136.5,214.4 1135.5,213.6 1134.5,211.6 1133.5,213.4 1132.5,211.9 1131.5,211.4 1130.5,217.5 1129.5,214.2 1128.5,211.5 1127.5,212.2 1126.5,211.5 1125.5,212.2 1124.5,217.5 1123.5,212.3 1122.5,212.5 1121.5,211.4 1120.5,211.4 1119.5,214.8 1118.5,214.7 1117.5,214.3 1116.5,213.4 1115.5,211.3 1114.5,211.9 1113.5,211.2 1112.5,213.3 1111.5,217.8 1110.5,211.8 1109.5,212.4 1108.5,211.9 1107.5,215.8 1106.5,211.5 1105.5,211.8 1104.5,211.9 1103.5,213.8 1102.5,211.3 1101.5,211.8 1100.5,213.1 1099.5,216.5 1098.5,212.0 1097.5,216.4 1096.5,211.8 1095.5,212.6 1094.5,217.0 1093.5,217.3 1092.5,211.7 1091.5,216.1 1090.5,213.2 1089.5,211.6 1088.5,213.7 1087.5,212.0 1086.5,212.3 1085.5,217.7 1084.5,211.7 1083.5,211.7 1082.5,211.8 1081.5,211.2 1080.5,211.9 1079.5,211.4 1078.5,214.1 1077.5,211.3 1076.5,211.5 1075.5,216.8 1074.5,211.5 1073.5,215.9 1072.5,211.8 1071.5,214.8 1070.5,211.2 1069.5,211.5 1068.5,211.6 1067.5,212.8 1066.5,212.3 1065.5,211.8 1064.5,211.7 1063.5,212.3 1062.5,212.3 1061.5,211.8 1060.5,212.6 1059.5,211.7 1058.5,211.5 1057.5,211.8 1056.5,212.1 1055.5,212.7 1054.5,211.5 1053.5,215.2 1052.5,211.4 1051.5,211.3 1050.5,212.4 1049.5,211.3 1048.5,216.4 1047.5,212.3 1046.5,211.3 1045.5,212.8 1044.5,211.3 1043.5,211.3 1042.5,216.1 1041.5,214.0 1040.5,211.4 1039.5,211.5 1038.5,211.8 1037.5,212.2 1036.5,216.3 1035.5,214.2 1034.5,212.0 1033.5,211.2 1032.5,211.7 1031.5,211.8 1030.5,215.5 1029.5,211.4 1028.5,211.6 1027.5,216.2 1026.5,215.1 1025.5,212.5 1024.5,211.4 1023.5,212.2 1022.5,211.9 1021.5,217.5 1020.5,215.5 1019.5,211.3 1018.5,211.4 1017.5,213.0 1016.5,212.7 1015.5,211.3 1014.5,211.5 1013.5,213.3 1012.5,211.7 1011.5,211.8 1010.5,213.7 1009.5,211.6 1008.5,217.9 1007.5,212.7 1006.5,211.5 1005.5,214.0 1004.5,212.2 1003.5,211.7 1002.5,211.2 1001.5,212.1 1000.5,216.9 999.5,211.3 998.5,211.3 997.5,216.7 996.5,212.2 995.5,213.3 994.5,213.2 993.5,212.7 992.5,212.1 991.5,214.2 990.5,211.4 989.5,211.6 988.5,211.6 987.5,211.5 986.5,212.0 985.5,211.4 984.5,214.1 983.5,214.7 982.5,212.8 981.5,211.8 980.5,213.5 979.5,216.4 978.5,211.5 977.5,213.0 976.5,213.0 975.5,214.5 974.5,211.3 973.5,212.5 972.5,217.4 971.5,211.9 970.5,211.4 969.5,212.6 968.5,211.5 967.5,212.1 966.5,216.3 965.5,214.0 964.5,211.5 963.5,213.1 962.5,212.0 961.5,215.5 960.5,212.4 959.5,214.2 958.5,214.3 957.5,217.1 956.5,211.7 955.5,214.7 954.5,214.3 953.5,214.6 952.5,213.5 951.5,212.2 950.5,211.5 949.5,212.1 948.5,211.2 947.5,211.2 946.5,211.4 945.5,213.3 944.5,212.2 943.5,213.9 942.5,211.5 941.5,214.5 940.5,213.8 939.5,214.6 938.5,214.7 937.5,214.5 936.5,211.5 935.5,211.4 934.5,213.2 933.5,211.3 932.5,216.1 931.5,214.2 930.5,211.4 929.5,215.0 928.5,211.6 927.5,216.0 926.5,211.3 925.5,216.4 924.5,213.9 923.5,213.2 922.5,212.4 921.5,214.5 920.5,214.2 919.5,212.6 918.5,214.1 917.5,211.2 916.5,211.7 915.5,212.2 914.5,211.4 913.5,211.8 912.5,212.4 911.5,214.2 910.5,211.5 909.5,211.4 908.5,211.6 907.5,211.5 906.5,213.0 905.5,211.4 904.5,216.3 903.5,211.6 902.5,212.5 901.5,217.8 900.5,215.1 899.5,212.2 898.5,212.1 897.5,212.5 896.5,211.2 895.5,211.7 894.5,211.5 893.5,214.4 892.5,211.8 891.5,212.8 890.5,212.2 889.5,212.4 888.5,211.9 887.5,217.6 886.5,211.4 885.5,213.1 884.5,211.8 883.5,211.5 882.5,213.0 881.5,211.4 880.5,211.7 879.5,211.3 878.5,211.4 877.5,211.5 876.5,211.8 875.5,211.2 874.5,211.6 873.5,211.5 872.5,211.5 871.5,212.3 870.5,213.6 869.5,215.0 868.5,212.0 867.5,217.6 866.5,215.4 865.5,211.3 864.5,211.4 863.5,211.6 862.5,211.5 861.5,211.7 860.5,211.6 859.5,212.0 858.5,211.5 857.5,217.0 856.5,211.9 855.5,212.1 854.5,215.2 853.5,211.3 852.5,211.2 851.5,211.6 850.5,217.1 849.5,213.1 848.5,217.4 847.5,211.8 846.5,211.8 845.5,211.6 844.5,214.9 843.5,215.5 842.5,211.2 841.5,211.7 840.5,211.6 839.5,212.6 838.5,213.4 837.5,211.7 836.5,217.4 835.5,211.3 834.5,213.0 833.5,212.0 832.5,211.6 831.5,211.3 830.5,211.3 829.5,212.9 828.5,211.5 827.5,211.5 826.5,211.2 825.5,215.1 824.5,212.1 823.5,214.4 822.5,212.1 821.5,216.1 820.5,211.4 819.5,214.5 818.5,211.5 817.5,213.2 816.5,215.2 815.5,215.5 814.5,216.0 813.5,211.6 812.5,211.8 811.5,211.2 810.5,211.4 809.5,215.6 808.5,217.3 807.5,213.1 806.5,211.2 805.5,211.3 804.5,212.1 803.5,215.1 802.5,211.6 801.5,213.6 800.5,217.0 799.5,212.7 798.5,211.4 797.5,211.3 796.5,211.5 795.5,213.8 794.5,214.7 793.5,212.8 792.5,214.6 791.5,214.3 790.5,211.9 789.5,216.6 788.5,211.5 787.5,211.6 786.5,211.5 785.5,215.9 784.5,217.7 783.5,215.3 782.5,211.2 781.5,211.5 780.5,211.6 779.5,212.6 778.5,211.5 777.5,211.6 776.5,211.3 775.5,212.1 774.5,213.2 773.5,211.3 772.5,215.1 771.5,212.1 770.5,213.1 769.5,212.9 768.5,211.8 767.5,211.2 766.5,211.6 765.5,211.2 764.5,211.7 763.5,212.9 762.5,211.3 761.5,211.8 760.5,211.4 759.5,213.2 758.5,211.2 757.5,212.3 756.5,211.7 755.5,212.0 754.5,214.7 753.5,211.3 752.5,212.1 751.5,211.4 750.5,212.7 749.5,211.7 748.5,214.9 747.5,211.4 746.5,216.2 745.5,211.8 744.5,212.0 743.5,212.7 742.5,217.0 741.5,211.4 740.5,211.2 739.5,215.8 738.5,211.4 737.5,211.1 736.5,212.0 735.5,214.7 734.5,214.7 733.5,211.2 732.5,211.1 731.5,211.5 730.5,215.5 729.5,212.9 728.5,211.6 727.5,211.4 726.5,212.4 725.5,211.9 724.5,213.3 723.5,211.3 722.5,212.0 721.5,211.3 720.5,216.8 719.5,211.8 718.5,211.3 717.5,212.8 716.5,214.4 715.5,214.4 714.5,211.1 713.5,212.1 712.5,211.1 711.5,212.5 710.5,217.0 709.5,211.4 708.5,215.4 707.5,212.4 706.5,211.3 705.5,217.0 704.5,211.1 703.5,215.6 702.5,211.2 701.5,211.3 700.5,211.9 699.5,214.2 698.5,216.2 697.5,211.9 696.5,211.7 695.5,211.3 694.5,211.5 693.5,211.5 692.5,212.2 691.5,211.4 690.5,211.7 689.5,211.7 688.5,211.3 687.5,212.9 686.5,213.5 685.5,212.3 684.5,210.7 683.5,214.4 682.5,212.5 681.5,210.3 680.5,216.8 679.5,211.6 678.5,210.4 677.5,210.3 676.5,209.9 675.5,215.9 674.5,209.8 673.5,209.8 672.5,211.0 671.5,209.8 670.5,209.3 669.5,209.1 668.5,210.6 667.5,211.3 666.5,213.0 665.5,211.9 664.5,209.2 663.5,208.6 662.5,208.7 661.5,212.2 660.5,208.4 659.5,208.1 658.5,210.7 657.5,211.4 656.5,207.9 655.5,208.3 654.5,211.0 653.5,208.9 652.5,207.3 651.5,207.6 650.5,210.0 649.5,208.2 648.5,207.4 647.5,207.9 646.5,206.8 645.5,207.5 644.5,207.5 643.5,206.2 642.5,205.8 641.5,205.6 640.5,206.0 639.5,205.9 638.5,204.7 637.5,204.5 636.5,210.6 635.5,209.1 634.5,204.5 633.5,203.3 632.5,203.5 631.5,202.9 630.5,204.4 629.5,202.9 628.5,206.4 627.5,201.6 626.5,207.5 625.5,201.0 624.5,201.5 623.5,200.7 622.5,204.4 621.5,199.7 620.5,199.5 619.5,199.3 618.5,204.2 617.5,199.2 616.5,198.3 615.5,199.8 614.5,198.3 613.5,198.6 612.5,203.6 611.5,199.6 610.5,202.2 609.5,200.6 608.5,196.4 607.5,200.3 606.5,195.7 605.5,200.7 604.5,195.3 603.5,194.8 602.5,195.5 601.5,194.3 600.5,193.8 599.5,193.8 598.5,193.0 597.5,198.0 596.5,192.6 595.5,197.1 594.5,192.6 593.5,191.7 592.5,191.3 591.5,191.3 590.5,195.4 589.5,192.8 588.5,191.5 587.5,196.0 586.5,192.3 585.5,192.8 584.5,193.3 583.5,193.8 582.5,194.4 581.5,194.7 580.5,201.2 579.5,199.7 578.5,197.0 577.5,200.2 576.5,197.7 575.5,202.6 574.5,200.9 573.5,202.2 572.5,199.9 571.5,199.9 570.5,203.3 569.5,201.2 568.5,205.2 567.5,202.4 566.5,203.6 565.5,205.2 564.5,210.6 563.5,205.2 562.5,205.8 561.5,206.4 560.5,207.1 559.5,214.1 558.5,214.5 557.5,209.5 556.5,215.9 555.5,215.8 554.5,211.5 553.5,211.5 552.5,212.8 551.5,214.8 550.5,212.4 549.5,215.1 548.5,213.2 547.5,214.3 546.5,214.0 545.5,216.8 544.5,215.6 543.5,220.5 542.5,215.9 541.5,216.7 540.5,217.2 539.5,217.5 538.5,218.1 537.5,223.4 536.5,219.0 535.5,219.1 534.5,220.5 533.5,219.8 532.5,221.2 531.5,220.7 530.5,221.0 529.5,220.5 528.5,221.2 527.5,221.1 526.5,223.7 525.5,221.5 524.5,221.6 523.5,223.4 522.5,222.5 521.5,224.6 520.5,222.6 519.5,222.8 518.5,223.1 517.5,225.0 516.5,228.5 515.5,227.6 514.5,223.7 513.5,226.2 512.5,231.8 511.5,231.0 510.5,234.8 509.5,236.0 508.5,238.6 507.5,242.1 506.5,245.3 505.5,247.1 504.5,252.1 503.5,254.5 502.5,258.5 501.5,263.4 500.5,280.0 499.5,295.4 498.5,307.7 497.5,329.9 496.5,347.2 495.5,365.2 494.5,383.9 493.5,401.8 492.5,434.3 491.5,450.4 490.5,478.1 489.5,488.7 488.5,500.2 487.5,632.5 486.5,601.8 485.5,601.5 484.5,603.0 483.5,602.4 482.5,602.5 481.5,602.0 480.5,602.0 479.5,602.2 478.5,602.4 477.5,602.9 476.5,601.6 475.5,601.3 474.5,617.6 473.5,568.7 472.5,524.6 471.5,504.7 470.5,492.2 469.5,479.3 468.5,466.7 467.5,474.3 466.5,486.1 465.5,492.0 464.5,499.5 463.5,495.7 462.5,491.7 461.5,488.9 460.5,514.6 459.5,534.6 458.5,551.1 457.5,559.4 456.5,566.6 455.5,573.9 454.5,585.1 453.5,590.9 452.5,600.2 451.5,598.7 450.5,591.1 449.5,579.6 448.5,566.8 447.5,556.7 446.5,549.7 445.5,536.5 444.5,522.3 443.5,504.1 442.5,489.4 441.5,480.1 440.5,458.1 439.5,448.7 438.5,434.5 437.5,425.5 436.5,420.3 435.5,400.2 434.5,379.9 433.5,348.0 432.5,323.9 431.5,384.7 430.5,418.5 429.5,442.0 428.5,481.1 427.5,482.7 426.5,485.2 425.5,489.3 424.5,491.5 423.5,514.0 422.5,538.5 421.5,569.9 420.5,587.3 419.5,581.3 418.5,572.6 417.5,561.6 416.5,546.8 415.5,540.9 414.5,535.5 413.5,532.5 412.5,526.8 411.5,512.8 410.5,491.2 409.5,474.9 408.5,444.1 407.5,402.6 406.5,418.0 405.5,416.4 404.5,418.0 403.5,413.2 402.5,408.8 401.5,402.6 400.5,397.8 399.5,391.8 398.5,387.7 397.5,386.8 396.5,378.7 395.5,374.5 394.5,366.8 393.5,377.1 392.5,384.3 391.5,395.3 390.5,407.3 389.5,409.0 388.5,418.8 387.5,420.1 386.5,421.9 385.5,424.0 384.5,426.7 383.5,431.7 382.5,434.3 381.5,438.8 380.5,442.8 379.5,446.9 378.5,451.1 377.5,455.8 376.5,458.6 375.5,460.9 374.5,465.1 373.5,468.5 372.5,455.6 371.5,443.2 370.5,432.9 369.5,413.9 368.5,393.4 367.5,363.8 366.5,340.1 365.5,322.4 364.5,292.1 363.5,274.0 362.5,258.6 361.5,235.0 360.5,242.1 359.5,249.2 358.5,256.2 357.5,258.0 356.5,262.7 355.5,265.1 354.5,266.7 353.5,269.1 352.5,270.9 351.5,272.1 350.5,273.3 349.5,275.8 348.5,276.9 347.5,276.6 346.5,280.5 345.5,278.8 344.5,278.9 343.5,279.5 342.5,284.3 341.5,281.4 340.5,281.4 339.5,284.6 338.5,281.7 337.5,283.1 336.5,282.1 335.5,286.4 334.5,282.6 333.5,288.8 332.5,285.2 331.5,282.9 330.5,283.3 329.5,288.7 328.5,283.0 327.5,284.7 326.5,283.5 325.5,288.3 324.5,283.4 323.5,283.0 322.5,286.2 321.5,287.4 320.5,282.8 319.5,287.0 318.5,283.3 317.5,283.3 316.5,288.1 315.5,286.0 314.5,282.9 313.5,283.9 312.5,285.2 311.5,286.0 310.5,284.3 309.5,283.0 308.5,284.6 307.5,288.0 306.5,282.8 305.5,284.4 304.5,283.0 303.5,283.1 302.5,284.1 301.5,283.1 300.5,286.7 299.5,286.0 298.5,283.2 297.5,284.9 296.5,285.9 295.5,282.8 294.5,285.5 293.5,288.7 292.5,283.5 291.5,283.7 290.5,283.8 289.5,282.8 288.5,283.1 287.5,283.0 286.5,283.2 285.5,283.3 284.5,282.8 283.5,283.8 282.5,284.9 281.5,283.3 280.5,288.9 279.5,282.9 278.5,283.2 277.5,282.8 276.5,283.2 275.5,284.6 274.5,285.3 273.5,283.0 272.5,285.6 271.5,286.2 270.5,282.9 269.5,283.0 268.5,285.3 267.5,283.2 266.5,284.3 265.5,283.6 264.5,287.4 263.5,286.8 262.5,283.2 261.5,283.2 260.5,286.8 259.5,287.8 258.5,284.8 257.5,284.3 256.5,283.3 255.5,285.4 254.5,285.1 253.5,282.8 252.5,282.9 251.5,283.2 250.5,283.1 249.5,284.9 248.5,282.9 247.5,282.8 246.5,284.3 245.5,283.7 244.5,283.1 243.5,282.9 242.5,284.4 241.5,286.7 240.5,283.9 239.5,282.8 238.5,283.1 237.5,283.1 236.5,283.1 235.5,285.9 234.5,282.9 233.5,288.3 232.5,283.1 231.5,282.8 230.5,283.0 229.5,285.1 228.5,282.8 227.5,283.0 226.5,283.2 225.5,283.4 224.5,283.1 223.5,282.8 222.5,282.8 221.5,285.6 220.5,283.1 219.5,284.3 218.5,286.1 217.5,284.3 216.5,283.1 215.5,283.1 214.5,282.9 213.5,287.8 212.5,284.0 211.5,286.0 210.5,282.9 209.5,286.8 208.5,286.1 207.5,286.5 206.5,283.0 205.5,287.5 204.5,283.1 203.5,283.7 202.5,283.6 201.5,289.0 200.5,284.0 199.5,283.7 198.5,288.8 197.5,282.5 196.5,287.0 195.5,283.1 194.5,282.1 193.5,282.5 192.5,278.5 191.5,275.8 190.5,272.4 189.5,269.2 188.5,266.0 187.5,261.6 186.5,256.3 185.5,255.8 184.5,258.2 183.5,262.4 182.5,267.8 181.5,269.1 180.5,274.0 179.5,278.7 178.5,281.9 177.5,279.6 176.5,275.6 175.5,238.5 174.5,220.1 173.5,220.1 172.5,220.2 171.5,220.2 170.5,220.8 169.5,220.4 168.5,220.4 167.5,223.8 166.5,220.0 165.5,222.5 164.5,223.9 163.5,223.0 162.5,220.1 161.5,222.9 160.5,220.0 159.5,220.1 158.5,224.7 157.5,225.1 156.5,221.8 155.5,221.1 154.5,224.9 153.5,225.3 152.5,220.2 151.5,221.2 150.5,220.1 149.5,222.2 148.5,223.7 147.5,221.2 146.5,223.9 145.5,223.1 144.5,223.4 143.5,222.6 142.5,220.3 141.5,222.1 140.5,220.1 139.5,223.0 138.5,220.0 137.5,225.6 136.5,220.3 135.5,220.6 134.5,222.2 133.5,220.1 132.5,221.4 131.5,220.2 130.5,224.2 129.5,220.6 128.5,220.0 127.5,220.1 126.5,220.5 125.5,220.1 124.5,222.8 123.5,220.4 122.5,220.7 121.5,220.2 120.5,220.3 119.5,220.4 118.5,220.1 117.5,221.1 116.5,224.0 115.5,220.1 114.5,220.5 113.5,220.9 112.5,220.3 111.5,220.4 110.5,222.4 109.5,220.2 108.5,226.0 107.5,220.1 106.5,221.1 105.5,223.6 104.5,222.3 103.5,220.1 102.5,220.3 101.5,221.5 100.5,220.6 99.5,225.7 98.5,221.4 97.5,220.2 96.5,224.3 95.5,220.3 94.5,221.5Z" fill="#ff8000"/>
<path d="M475 596.5H487" stroke="#ff3000" stroke-width="1.5"/>
<path d="M94.5,179.9 95.5,177.9 96.5,180.1 97.5,180.2 98.5,180.2 99.5,176.4 100.5,180.0 101.5,179.1 102.5,180.2 103.5,179.4 104.5,180.2 105.5,176.8 106.5,179.4 107.5,180.2 108.5,179.8 109.5,180.1 110.5,180.1 111.5,179.1 112.5,179.9 113.5,178.9 114.5,179.2 115.5,178.1 116.5,179.5 117.5,180.1 118.5,178.4 119.5,180.0 120.5,178.1 121.5,180.2 122.5,180.2 123.5,179.3 124.5,176.3 125.5,180.1 126.5,180.0 127.5,179.4 128.5,179.9 129.5,179.4 130.5,180.1 131.5,178.1 132.5,180.0 133.5,180.1 134.5,180.1 135.5,179.4 136.5,178.0 137.5,180.1 138.5,180.1 139.5,179.7 140.5,179.5 141.5,179.8 142.5,180.0 143.5,179.6 144.5,180.2 145.5,177.0 146.5,180.2 147.5,179.2 148.5,180.2 149.5,178.6 150.5,179.7 151.5,180.1 152.5,179.6 153.5,180.1 154.5,180.2 155.5,180.1 156.5,179.5 157.5,180.0 158.5,179.7 159.5,180.2 160.5,177.1 161.5,178.4 162.5,176.8 163.5,179.1 164.5,180.1 165.5,178.8 166.5,180.0 167.5,180.1 168.5,180.1 169.5,180.2 170.5,179.7 171.5,180.0 172.5,177.3 173.5,179.1 174.5,180.6 175.5,181.6 176.5,184.2 177.5,198.4 178.5,297.5 179.5,301.4 180.5,302.3 181.5,305.1 182.5,306.1 183.5,306.9 184.5,307.3 185.5,309.1 186.5,307.2 187.5,308.3 188.5,307.9 189.5,310.4 190.5,309.1 191.5,311.2 192.5,311.1 193.5,311.8 194.5,312.1 195.5,312.5 196.5,309.5 197.5,312.7 198.5,312.5 199.5,311.8 200.5,312.5 201.5,310.2 202.5,312.2 203.5,312.0 204.5,311.7 205.5,312.5 206.5,309.5 207.5,310.9 208.5,309.5 209.5,312.4 210.5,312.6 211.5,312.2 212.5,309.3 213.5,312.7 214.5,312.1 215.5,312.2 216.5,312.5 217.5,310.1 218.5,312.7 219.5,312.7 220.5,311.8 221.5,310.9 222.5,311.8 223.5,312.4 224.5,312.4 225.5,312.0 226.5,309.7 227.5,312.2 228.5,312.2 229.5,312.6 230.5,312.6 231.5,310.8 232.5,312.7 233.5,311.5 234.5,312.6 235.5,311.5 236.5,312.7 237.5,312.6 238.5,312.4 239.5,312.5 240.5,312.5 241.5,312.1 242.5,312.7 243.5,311.1 244.5,311.7 245.5,312.5 246.5,312.6 247.5,309.9 248.5,311.9 249.5,312.3 250.5,309.4 251.5,312.5 252.5,312.7 253.5,309.0 254.5,311.0 255.5,310.5 256.5,310.2 257.5,309.8 258.5,312.7 259.5,312.5 260.5,312.1 261.5,312.2 262.5,312.7 263.5,312.7 264.5,312.5 265.5,312.4 266.5,311.8 267.5,312.5 268.5,312.7 269.5,312.3 270.5,312.4 271.5,312.1 272.5,312.4 273.5,312.6 274.5,311.8 275.5,308.9 276.5,312.5 277.5,312.6 278.5,312.4 279.5,312.7 280.5,312.4 281.5,312.7 282.5,312.5 283.5,311.6 284.5,311.5 285.5,310.6 286.5,312.5 287.5,312.5 288.5,312.0 289.5,310.4 290.5,311.6 291.5,312.7 292.5,312.6 293.5,312.7 294.5,312.5 295.5,309.1 296.5,312.7 297.5,312.7 298.5,312.6 299.5,312.5 300.5,309.6 301.5,312.7 302.5,312.6 303.5,312.7 304.5,312.5 305.5,309.6 306.5,312.6 307.5,310.4 308.5,309.5 309.5,312.7 310.5,310.5 311.5,312.4 312.5,312.4 313.5,312.6 314.5,312.7 315.5,312.5 316.5,312.6 317.5,312.7 318.5,311.7 319.5,312.4 320.5,310.9 321.5,312.4 322.5,310.8 323.5,311.7 324.5,310.8 325.5,311.3 326.5,312.6 327.5,311.0 328.5,312.7 329.5,312.4 330.5,312.7 331.5,312.5 332.5,312.6 333.5,312.7 334.5,311.9 335.5,312.7 336.5,312.6 337.5,309.1 338.5,312.7 339.5,310.7 340.5,312.7 341.5,312.6 342.5,312.7 343.5,312.7 344.5,311.5 345.5,310.9 346.5,312.6 347.5,310.8 348.5,311.3 349.5,311.4 350.5,311.9 351.5,310.7 352.5,312.7 353.5,312.5 354.5,311.3 355.5,312.0 356.5,310.0 357.5,312.5 358.5,310.8 359.5,309.3 360.5,310.2 361.5,312.5 362.5,309.8 363.5,305.6 364.5,303.2 365.5,301.1 366.5,299.1 367.5,296.2 368.5,292.9 369.5,294.8 370.5,294.6 371.5,296.2 372.5,297.4 373.5,297.1 374.5,300.6 375.5,300.7 376.5,300.9 377.5,301.8 378.5,303.9 379.5,303.8 380.5,303.7 381.5,305.8 382.5,306.3 383.5,307.0 384.5,307.7 385.5,307.5 386.5,305.8 387.5,307.4 388.5,304.2 389.5,307.8 390.5,308.2 391.5,308.5 392.5,309.1 393.5,308.6 394.5,306.5 395.5,306.6 396.5,303.9 397.5,304.2 398.5,302.7 399.5,302.3 400.5,301.4 401.5,300.4 402.5,299.0 403.5,297.7 404.5,296.3 405.5,295.9 406.5,294.8 407.5,294.4 408.5,292.4 409.5,290.2 410.5,286.8 411.5,283.6 412.5,280.2 413.5,277.2 414.5,274.0 415.5,272.9 416.5,268.0 417.5,265.7 418.5,262.7 419.5,261.1 420.5,264.8 421.5,265.4 422.5,268.4 423.5,271.6 424.5,277.6 425.5,277.9 426.5,274.9 427.5,270.4 428.5,269.9 429.5,271.2 430.5,272.6 431.5,274.3 432.5,278.4 433.5,280.8 434.5,279.9 435.5,275.5 436.5,271.7 437.5,268.5 438.5,265.1 439.5,259.9 440.5,258.2 441.5,255.4 442.5,253.9 443.5,249.8 444.5,248.5 445.5,245.4 446.5,241.8 447.5,239.2 448.5,236.3 449.5,233.7 450.5,233.9 451.5,231.8 452.5,229.4 453.5,230.7 454.5,232.0 455.5,232.0 456.5,234.3 457.5,235.3 458.5,235.2 459.5,239.0 460.5,239.0 461.5,242.7 462.5,243.5 463.5,244.3 464.5,246.1 465.5,246.1 466.5,246.9 467.5,249.7 468.5,250.8 469.5,254.3 470.5,256.9 471.5,261.0 472.5,257.7 473.5,251.2 474.5,243.9 475.5,238.5 476.5,232.4 477.5,226.3 478.5,223.0 479.5,211.6 480.5,198.4 481.5,190.9 482.5,185.4 483.5,184.5 484.5,180.9 485.5,180.6 486.5,177.2 487.5,179.4 488.5,177.7 489.5,178.0 490.5,175.2 491.5,177.7 492.5,176.2 493.5,178.1 494.5,178.2 495.5,178.2 496.5,178.3 497.5,178.5 498.5,178.6 499.5,178.6 500.5,178.9 501.5,179.0 502.5,179.2 503.5,178.8 504.5,179.4 505.5,179.4 506.5,176.7 507.5,176.9 508.5,179.8 509.5,179.7 510.5,180.1 511.5,180.2 512.5,179.7 513.5,179.1 514.5,179.7 515.5,180.3 516.5,178.6 517.5,180.7 518.5,179.4 519.5,180.7 520.5,177.5 521.5,181.3 522.5,181.3 523.5,180.8 524.5,179.9 525.5,179.4 526.5,178.4 527.5,182.0 528.5,179.0 529.5,182.2 530.5,181.9 531.5,180.5 532.5,181.6 533.5,180.3 534.5,179.7 535.5,182.9 536.5,183.0 537.5,182.6 538.5,182.6 539.5,182.0 540.5,182.7 541.5,180.3 542.5,183.0 543.5,184.0 544.5,184.1 545.5,184.1 546.5,184.2 547.5,184.2 548.5,182.5 549.5,184.8 550.5,184.7 551.5,184.9 552.5,182.4 553.5,184.0 554.5,185.6 555.5,185.2 556.5,182.3 557.5,186.0 558.5,183.3 559.5,186.0 560.5,186.3 561.5,186.3 562.5,186.5 563.5,185.8 564.5,185.9 565.5,185.9 566.5,186.1 567.5,185.7 568.5,185.9 569.5,182.6 570.5,185.4 571.5,185.3 572.5,184.6 573.5,185.2 574.5,183.7 575.5,184.2 576.5,185.0 577.5,184.8 578.5,182.5 579.5,184.3 580.5,184.5 581.5,184.4 582.5,182.8 583.5,183.5 584.5,181.1 585.5,180.9 586.5,181.8 587.5,183.6 588.5,182.1 589.5,183.6 590.5,181.2 591.5,183.1 592.5,182.0 593.5,181.2 594.5,182.3 595.5,182.1 596.5,182.1 597.5,182.3 598.5,182.1 599.5,181.0 600.5,181.4 601.5,181.4 602.5,180.3 603.5,181.1 604.5,178.4 605.5,180.3 606.5,180.0 607.5,178.3 608.5,180.3 609.5,179.9 610.5,179.7 611.5,179.7 612.5,179.5 613.5,179.2 614.5,175.4 615.5,177.4 616.5,178.3 617.5,178.6 618.5,176.8 619.5,178.6 620.5,175.9 621.5,178.5 622.5,176.7 623.5,178.0 624.5,178.5 625.5,177.2 626.5,178.1 627.5,178.4 628.5,174.6 629.5,178.4 630.5,178.4 631.5,178.5 632.5,178.2 633.5,176.2 634.5,175.8 635.5,175.9 636.5,177.6 637.5,178.1 638.5,177.6 639.5,178.2 640.5,176.8 641.5,176.1 642.5,175.9 643.5,177.0 644.5,173.6 645.5,177.2 646.5,176.9 647.5,177.1 648.5,174.8 649.5,176.3 650.5,177.1 651.5,177.0 652.5,177.0 653.5,177.1 654.5,176.3 655.5,176.2 656.5,176.6 657.5,175.8 658.5,173.4 659.5,177.0 660.5,173.4 661.5,176.5 662.5,175.9 663.5,176.4 664.5,176.5 665.5,176.9 666.5,176.5 667.5,175.0 668.5,176.8 669.5,176.6 670.5,174.4 671.5,175.2 672.5,176.0 673.5,176.7 674.5,176.5 675.5,176.7 676.5,176.7 677.5,176.1 678.5,173.3 679.5,176.7 680.5,176.1 681.5,174.4 682.5,175.4 683.5,174.3 684.5,176.4 685.5,176.5 686.5,176.1 687.5,174.1 688.5,176.1 689.5,176.4 690.5,173.2 691.5,174.7 692.5,176.5 693.5,176.5 694.5,174.7 695.5,175.6 696.5,176.2 697.5,176.4 698.5,176.1 699.5,174.3 700.5,176.1 701.5,176.2 702.5,176.2 703.5,173.8 704.5,176.5 705.5,176.3 706.5,174.6 707.5,175.1 708.5,176.4 709.5,176.1 710.5,176.5 711.5,175.1 712.5,174.8 713.5,174.8 714.5,175.8 715.5,176.4 716.5,174.4 717.5,176.0 718.5,176.4 719.5,174.2 720.5,175.0 721.5,174.3 722.5,176.4 723.5,176.3 724.5,176.4 725.5,175.2 726.5,176.1 727.5,176.4 728.5,175.3 729.5,175.3 730.5,176.3 731.5,176.3 732.5,174.1 733.5,176.3 734.5,176.0 735.5,173.3 736.5,176.3 737.5,173.6 738.5,176.3 739.5,175.3 740.5,176.4 741.5,176.3 742.5,176.3 743.5,175.9 744.5,176.3 745.5,176.3 746.5,176.3 747.5,174.5 748.5,175.6 749.5,174.7 750.5,175.8 751.5,176.2 752.5,176.1 753.5,175.7 754.5,176.3 755.5,175.7 756.5,176.3 757.5,176.0 758.5,174.7 759.5,175.7 760.5,176.3 761.5,175.8 762.5,173.9 763.5,175.1 764.5,176.2 765.5,175.7 766.5,172.8 767.5,176.3 768.5,175.9 769.5,175.4 770.5,174.9 771.5,172.8 772.5,176.2 773.5,176.2 774.5,176.0 775.5,175.9 776.5,175.9 777.5,176.3 778.5,176.0 779.5,175.8 780.5,176.2 781.5,176.3 782.5,176.1 783.5,174.3 784.5,174.1 785.5,174.5 786.5,176.2 787.5,172.6 788.5,175.1 789.5,176.1 790.5,176.2 791.5,175.5 792.5,173.7 793.5,175.5 794.5,175.4 795.5,176.3 796.5,174.3 797.5,176.1 798.5,176.1 799.5,176.1 800.5,175.2 801.5,175.2 802.5,176.0 803.5,175.5 804.5,176.1 805.5,176.2 806.5,176.0 807.5,175.7 808.5,176.1 809.5,176.2 810.5,175.6 811.5,175.9 812.5,175.9 813.5,176.1 814.5,176.3 815.5,175.8 816.5,173.3 817.5,175.2 818.5,176.2 819.5,175.9 820.5,175.9 821.5,175.2 822.5,175.7 823.5,176.0 824.5,175.6 825.5,175.4 826.5,175.3 827.5,176.3 828.5,174.7 829.5,176.2 830.5,176.1 831.5,174.9 832.5,175.0 833.5,176.3 834.5,175.6 835.5,175.6 836.5,176.3 837.5,175.5 838.5,175.6 839.5,176.1 840.5,175.7 841.5,176.2 842.5,173.2 843.5,176.2 844.5,176.3 845.5,176.3 846.5,176.1 847.5,175.8 848.5,172.4 849.5,176.4 850.5,176.1 851.5,174.4 852.5,175.4 853.5,176.2 854.5,175.8 855.5,176.3 856.5,173.1 857.5,176.2 858.5,176.0 859.5,176.4 860.5,176.2 861.5,172.6 862.5,176.4 863.5,173.7 864.5,174.9 865.5,176.3 866.5,172.7 867.5,173.4 868.5,176.1 869.5,176.4 870.5,176.4 871.5,174.2 872.5,175.8 873.5,174.7 874.5,173.6 875.5,176.2 876.5,176.4 877.5,175.9 878.5,176.2 879.5,176.3 880.5,176.3 881.5,174.3 882.5,176.0 883.5,176.4 884.5,174.0 885.5,176.4 886.5,175.1 887.5,176.3 888.5,176.4 889.5,174.4 890.5,174.4 891.5,175.8 892.5,176.3 893.5,176.1 894.5,176.1 895.5,176.2 896.5,175.6 897.5,176.1 898.5,172.9 899.5,175.6 900.5,175.9 901.5,175.2 902.5,176.3 903.5,176.2 904.5,174.6 905.5,176.4 906.5,175.6 907.5,176.3 908.5,176.2 909.5,176.5 910.5,176.1 911.5,173.5 912.5,174.0 913.5,173.0 914.5,176.4 915.5,173.2 916.5,176.3 917.5,175.2 918.5,176.5 919.5,176.3 920.5,176.4 921.5,176.2 922.5,173.5 923.5,176.3 924.5,173.2 925.5,174.3 926.5,176.4 927.5,176.5 928.5,173.5 929.5,175.9 930.5,176.4 931.5,176.4 932.5,176.3 933.5,175.8 934.5,176.0 935.5,176.1 936.5,176.5 937.5,175.2 938.5,175.7 939.5,176.3 940.5,176.5 941.5,175.9 942.5,174.9 943.5,174.8 944.5,174.9 945.5,176.5 946.5,174.4 947.5,175.7 948.5,176.3 949.5,175.5 950.5,176.4 951.5,173.4 952.5,174.3 953.5,174.8 954.5,173.8 955.5,175.6 956.5,176.3 957.5,176.5 958.5,175.4 959.5,176.5 960.5,176.3 961.5,175.0 962.5,175.9 963.5,176.5 964.5,176.5 965.5,175.6 966.5,174.4 967.5,173.0 968.5,172.8 969.5,175.2 970.5,176.0 971.5,172.9 972.5,174.3 973.5,176.5 974.5,176.5 975.5,176.1 976.5,176.3 977.5,176.6 978.5,176.6 979.5,175.7 980.5,176.0 981.5,176.5 982.5,176.5 983.5,176.4 984.5,176.7 985.5,176.6 986.5,176.3 987.5,176.6 988.5,176.6 989.5,172.8 990.5,176.7 991.5,176.6 992.5,176.1 993.5,176.6 994.5,176.1 995.5,176.7 996.5,176.6 997.5,175.4 998.5,176.3 999.5,176.5 1000.5,176.3 1001.5,176.6 1002.5,176.7 1003.5,176.4 1004.5,176.4 1005.5,176.2 1006.5,176.1 1007.5,176.7 1008.5,176.6 1009.5,174.7 1010.5,175.9 1011.5,174.6 1012.5,174.6 1013.5,175.0 1014.5,173.3 1015.5,176.6 1016.5,174.1 1017.5,176.7 1018.5,175.3 1019.5,175.3 1020.5,175.3 1021.5,175.6 1022.5,176.5 1023.5,176.7 1024.5,176.6 1025.5,176.5 1026.5,176.2 1027.5,176.6 1028.5,174.9 1029.5,176.8 1030.5,176.4 1031.5,175.5 1032.5,176.4 1033.5,174.0 1034.5,176.3 1035.5,176.4 1036.5,176.7 1037.5,175.5 1038.5,176.6 1039.5,175.0 1040.5,175.7 1041.5,175.6 1042.5,176.6 1043.5,176.7 1044.5,176.4 1045.5,175.9 1046.5,173.2 1047.5,175.9 1048.5,176.8 1049.5,176.8 1050.5,176.7 1051.5,175.2 1052.5,175.7 1053.5,176.8 1054.5,176.7 1055.5,176.8 1056.5,172.9 1057.5,176.8 1058.5,175.5 1059.5,175.1 1060.5,176.6 1061.5,176.8 1062.5,176.6 1063.5,176.8 1064.5,176.8 1065.5,176.6 1066.5,176.7 1067.5,175.1 1068.5,176.8 1069.5,176.9 1070.5,173.9 1071.5,174.1 1072.5,174.5 1073.5,175.0 1074.5,176.7 1075.5,175.0 1076.5,176.7 1077.5,176.8 1078.5,175.7 1079.5,175.2 1080.5,176.6 1081.5,176.8 1082.5,173.6 1083.5,175.9 1084.5,175.8 1085.5,173.7 1086.5,176.6 1087.5,176.0 1088.5,176.6 1089.5,176.5 1090.5,175.3 1091.5,175.6 1092.5,176.9 1093.5,176.3 1094.5,175.4 1095.5,176.0 1096.5,175.9 1097.5,176.8 1098.5,173.5 1099.5,175.2 1100.5,176.9 1101.5,176.8 1102.5,176.8 1103.5,176.1 1104.5,176.8 1105.5,176.1 1106.5,176.8 1107.5,176.4 1108.5,176.3 1109.5,174.6 1110.5,176.6 1111.5,176.9 1112.5,173.5 1113.5,176.8 1114.5,176.4 1115.5,175.8 1116.5,175.3 1117.5,174.6 1118.5,175.9 1119.5,176.8 1120.5,175.6 1121.5,174.0 1122.5,175.6 1123.5,177.0 1124.5,176.9 1125.5,176.6 1126.5,176.4 1127.5,174.0 1128.5,176.7 1129.5,177.0 1130.5,176.0 1131.5,176.2 1132.5,175.9 1133.5,176.9 1134.5,176.1 1135.5,176.8 1136.5,174.0 1137.5,177.1 1138.5,177.0 1139.5,173.5 1140.5,173.4 1141.5,177.1 1142.5,176.5 1143.5,174.6 1144.5,177.0 1145.5,174.8 1146.5,176.8 1147.5,175.6 1148.5,176.1 1149.5,174.8 1150.5,176.5 1151.5,177.0 1152.5,176.4 1153.5,175.7 1154.5,176.3 1155.5,176.8 1156.5,176.9 1157.5,176.5 1158.5,176.8 1159.5,176.9 1160.5,176.7 1161.5,175.7 1162.5,173.4 1163.5,177.1 1164.5,177.0 1165.5,176.5 1166.5,176.9 1167.5,176.4 1168.5,176.9 1169.5,176.5 1170.5,177.0 1171.5,177.1 1172.5,177.1 1173.5,174.9 1174.5,174.9 1175.5,177.0 1176.5,177.0 1177.5,177.0 1178.5,176.5 1179.5,176.7 1180.5,177.2 1181.5,174.7 1182.5,176.7 1183.5,173.7 1184.5,177.1 1185.5,177.1 1186.5,176.6 1187.5,177.1 1188.5,176.8 1189.5,177.0 1190.5,177.2 1191.5,176.3 1192.5,176.9 1193.5,175.5 1194.5,177.0 1195.5,177.2 1196.5,177.2 1197.5,175.8 1198.5,174.9 1199.5,176.5 1200.5,176.1 1201.5,175.3 1202.5,177.2 1203.5,177.2 1204.5,176.2 1205.5,177.0 1206.5,174.8 1207.5,176.0 1208.5,177.2 1209.5,176.6 1210.5,176.9 1211.5,177.0 1212.5,177.0 1213.5,174.6 1214.5,177.2 1215.5,177.0 1216.5,175.7 1217.5,174.8 1218.5,177.2 1219.5,174.4 1220.5,177.1 1221.5,176.0 1222.5,176.8 1223.5,175.0 1224.5,177.1 1225.5,176.7 1226.5,177.3 1227.5,177.2 1228.5,176.4 1229.5,177.0 1230.5,177.2 1231.5,175.4 1232.5,177.2 1233.5,176.8 1234.5,176.6 1235.5,176.5 1236.5,173.9 1237.5,176.9 1238.5,176.9 1239.5,177.3 1240.5,177.2 1241.5,177.2 1242.5,177.0 1243.5,176.5 1244.5,177.1 1245.5,177.1 1246.5,176.9 1247.5,176.0 1248.5,176.6 1249.5,176.7 1250.5,176.8 1251.5,177.3 1252.5,177.1 1253.5,176.7 1254.5,176.1 1255.5,175.6 1256.5,177.2 1257.5,173.4 1258.5,176.0 1259.5,177.2 1260.5,177.2 1261.5,177.3 1262.5,177.3 1263.5,176.0 1264.5,177.2 1265.5,177.4 1266.5,174.0 1267.5,177.4 1268.5,175.4 1269.5,177.4 1270.5,176.2 1271.5,173.8 1272.5,177.1 1273.5,177.2 1274.5,177.3 1275.5,177.1 1276.5,177.0 1277.5,175.5 1278.5,173.5 1279.5,173.9 1280.5,176.0 1281.5,177.2 1282.5,176.7 1283.5,177.2 1284.5,176.5 1285.5,176.9 1286.5,176.6 1287.5,176.6 1288.5,176.4 1289.5,175.0 1290.5,177.3 1291.5,175.7 1292.5,176.5 1293.5,177.1 1294.5,177.4 L1294.5,190.7 1293.5,189.3 1292.5,188.0 1291.5,188.0 1290.5,188.0 1289.5,188.0 1288.5,188.1 1287.5,188.7 1286.5,189.2 1285.5,188.1 1284.5,188.8 1283.5,189.2 1282.5,188.9 1281.5,189.0 1280.5,188.1 1279.5,188.4 1278.5,188.1 1277.5,190.2 1276.5,188.7 1275.5,188.0 1274.5,188.1 1273.5,189.8 1272.5,187.9 1271.5,191.6 1270.5,189.7 1269.5,188.4 1268.5,187.9 1267.5,190.5 1266.5,187.9 1265.5,188.6 1264.5,188.2 1263.5,188.1 1262.5,188.0 1261.5,187.9 1260.5,190.2 1259.5,190.5 1258.5,190.7 1257.5,188.0 1256.5,188.6 1255.5,190.0 1254.5,189.0 1253.5,188.0 1252.5,189.7 1251.5,188.2 1250.5,188.8 1249.5,190.4 1248.5,187.9 1247.5,187.9 1246.5,187.9 1245.5,188.2 1244.5,188.0 1243.5,187.9 1242.5,188.0 1241.5,190.1 1240.5,188.0 1239.5,190.7 1238.5,187.9 1237.5,188.6 1236.5,188.4 1235.5,189.7 1234.5,187.8 1233.5,189.7 1232.5,190.6 1231.5,188.7 1230.5,187.8 1229.5,188.0 1228.5,187.9 1227.5,187.9 1226.5,187.9 1225.5,188.1 1224.5,187.9 1223.5,188.4 1222.5,188.0 1221.5,187.8 1220.5,188.6 1219.5,189.1 1218.5,187.9 1217.5,188.4 1216.5,190.4 1215.5,188.3 1214.5,188.0 1213.5,187.8 1212.5,188.1 1211.5,188.0 1210.5,189.7 1209.5,188.2 1208.5,188.3 1207.5,188.3 1206.5,188.1 1205.5,188.8 1204.5,187.8 1203.5,189.7 1202.5,188.1 1201.5,188.6 1200.5,188.2 1199.5,187.9 1198.5,187.8 1197.5,190.6 1196.5,190.4 1195.5,188.3 1194.5,190.4 1193.5,190.4 1192.5,187.8 1191.5,187.9 1190.5,188.8 1189.5,188.9 1188.5,190.8 1187.5,191.0 1186.5,187.7 1185.5,189.3 1184.5,188.5 1183.5,188.2 1182.5,188.0 1181.5,188.6 1180.5,190.6 1179.5,188.3 1178.5,189.5 1177.5,190.1 1176.5,188.3 1175.5,187.8 1174.5,188.3 1173.5,189.2 1172.5,187.7 1171.5,188.0 1170.5,189.2 1169.5,190.3 1168.5,190.3 1167.5,190.2 1166.5,189.8 1165.5,188.5 1164.5,187.7 1163.5,187.7 1162.5,189.3 1161.5,189.7 1160.5,187.7 1159.5,188.1 1158.5,188.7 1157.5,188.7 1156.5,187.8 1155.5,187.6 1154.5,190.5 1153.5,187.9 1152.5,191.5 1151.5,191.4 1150.5,190.2 1149.5,190.2 1148.5,190.9 1147.5,191.0 1146.5,189.7 1145.5,188.0 1144.5,187.8 1143.5,190.5 1142.5,187.9 1141.5,189.3 1140.5,189.4 1139.5,188.0 1138.5,189.9 1137.5,188.2 1136.5,190.7 1135.5,188.2 1134.5,187.6 1133.5,187.7 1132.5,187.7 1131.5,187.9 1130.5,187.8 1129.5,190.9 1128.5,190.7 1127.5,188.7 1126.5,190.6 1125.5,187.6 1124.5,187.9 1123.5,187.6 1122.5,188.1 1121.5,187.7 1120.5,187.9 1119.5,187.6 1118.5,188.8 1117.5,190.1 1116.5,187.9 1115.5,187.7 1114.5,190.1 1113.5,190.4 1112.5,188.7 1111.5,187.8 1110.5,190.1 1109.5,187.6 1108.5,188.0 1107.5,188.0 1106.5,188.8 1105.5,187.7 1104.5,191.0 1103.5,188.2 1102.5,187.7 1101.5,188.0 1100.5,187.6 1099.5,188.0 1098.5,190.6 1097.5,188.0 1096.5,187.8 1095.5,187.5 1094.5,187.7 1093.5,189.1 1092.5,188.8 1091.5,187.5 1090.5,191.2 1089.5,188.0 1088.5,187.5 1087.5,187.6 1086.5,188.2 1085.5,187.7 1084.5,188.6 1083.5,187.8 1082.5,187.5 1081.5,190.9 1080.5,187.9 1079.5,187.5 1078.5,187.5 1077.5,191.4 1076.5,188.3 1075.5,188.2 1074.5,188.2 1073.5,187.6 1072.5,188.7 1071.5,187.5 1070.5,187.8 1069.5,187.5 1068.5,187.6 1067.5,187.4 1066.5,188.3 1065.5,187.5 1064.5,187.4 1063.5,188.6 1062.5,187.5 1061.5,187.7 1060.5,188.0 1059.5,187.9 1058.5,188.3 1057.5,187.7 1056.5,187.4 1055.5,187.4 1054.5,187.6 1053.5,187.6 1052.5,187.4 1051.5,187.6 1050.5,188.4 1049.5,187.4 1048.5,187.4 1047.5,187.5 1046.5,188.1 1045.5,187.7 1044.5,187.4 1043.5,190.4 1042.5,187.5 1041.5,189.2 1040.5,188.7 1039.5,187.5 1038.5,187.4 1037.5,190.9 1036.5,191.1 1035.5,188.0 1034.5,191.0 1033.5,187.6 1032.5,187.3 1031.5,187.4 1030.5,187.6 1029.5,188.5 1028.5,190.6 1027.5,191.2 1026.5,188.9 1025.5,188.0 1024.5,187.9 1023.5,187.3 1022.5,187.4 1021.5,190.6 1020.5,187.9 1019.5,189.7 1018.5,187.4 1017.5,187.9 1016.5,187.7 1015.5,188.5 1014.5,190.8 1013.5,188.3 1012.5,187.3 1011.5,187.5 1010.5,187.5 1009.5,187.4 1008.5,188.7 1007.5,188.9 1006.5,190.9 1005.5,188.9 1004.5,187.4 1003.5,187.3 1002.5,187.7 1001.5,189.4 1000.5,188.8 999.5,188.2 998.5,187.7 997.5,187.3 996.5,190.2 995.5,187.3 994.5,187.3 993.5,189.5 992.5,188.1 991.5,188.2 990.5,189.9 989.5,187.7 988.5,187.3 987.5,187.4 986.5,187.3 985.5,187.9 984.5,189.4 983.5,187.7 982.5,187.2 981.5,189.2 980.5,188.3 979.5,187.3 978.5,190.6 977.5,187.7 976.5,187.3 975.5,188.1 974.5,190.0 973.5,187.3 972.5,188.2 971.5,187.4 970.5,188.9 969.5,188.7 968.5,189.5 967.5,189.4 966.5,188.3 965.5,187.6 964.5,187.7 963.5,187.7 962.5,187.3 961.5,187.7 960.5,188.2 959.5,187.3 958.5,190.9 957.5,188.3 956.5,187.4 955.5,187.3 954.5,188.1 953.5,187.7 952.5,188.3 951.5,187.8 950.5,187.1 949.5,187.1 948.5,187.3 947.5,188.8 946.5,189.1 945.5,188.2 944.5,187.5 943.5,187.3 942.5,187.7 941.5,188.0 940.5,189.9 939.5,188.4 938.5,188.4 937.5,190.5 936.5,187.3 935.5,189.0 934.5,187.2 933.5,187.1 932.5,187.1 931.5,187.1 930.5,187.4 929.5,187.9 928.5,190.5 927.5,190.3 926.5,190.4 925.5,187.2 924.5,188.0 923.5,187.3 922.5,187.2 921.5,187.2 920.5,187.5 919.5,188.0 918.5,187.6 917.5,187.2 916.5,188.1 915.5,191.0 914.5,189.8 913.5,187.3 912.5,187.3 911.5,188.7 910.5,187.3 909.5,187.3 908.5,190.7 907.5,189.2 906.5,188.8 905.5,189.2 904.5,187.9 903.5,187.5 902.5,188.5 901.5,187.4 900.5,187.5 899.5,187.0 898.5,188.5 897.5,189.1 896.5,188.7 895.5,187.4 894.5,187.4 893.5,187.2 892.5,187.3 891.5,187.0 890.5,188.3 889.5,190.4 888.5,188.1 887.5,187.1 886.5,187.0 885.5,187.0 884.5,187.2 883.5,187.4 882.5,187.1 881.5,188.9 880.5,187.2 879.5,189.7 878.5,188.1 877.5,189.6 876.5,187.2 875.5,189.8 874.5,187.4 873.5,188.3 872.5,188.6 871.5,187.0 870.5,186.9 869.5,187.1 868.5,187.7 867.5,187.3 866.5,187.4 865.5,190.1 864.5,186.9 863.5,187.0 862.5,189.6 861.5,187.7 860.5,187.0 859.5,186.9 858.5,187.9 857.5,187.1 856.5,186.9 855.5,188.3 854.5,188.1 853.5,187.5 852.5,187.0 851.5,189.0 850.5,187.2 849.5,190.4 848.5,188.2 847.5,187.0 846.5,190.4 845.5,187.1 844.5,189.5 843.5,187.8 842.5,187.1 841.5,186.9 840.5,187.0 839.5,188.3 838.5,187.3 837.5,187.9 836.5,187.0 835.5,187.5 834.5,189.2 833.5,186.8 832.5,190.6 831.5,187.1 830.5,186.9 829.5,188.4 828.5,187.0 827.5,187.0 826.5,187.9 825.5,190.6 824.5,187.6 823.5,186.9 822.5,190.1 821.5,187.1 820.5,187.3 819.5,190.1 818.5,188.6 817.5,187.1 816.5,187.1 815.5,189.1 814.5,186.8 813.5,187.6 812.5,187.2 811.5,186.9 810.5,190.5 809.5,187.5 808.5,190.5 807.5,187.0 806.5,188.9 805.5,189.3 804.5,187.5 803.5,186.9 802.5,188.6 801.5,187.3 800.5,187.6 799.5,186.9 798.5,188.4 797.5,189.8 796.5,190.2 795.5,186.9 794.5,187.3 793.5,187.2 792.5,186.8 791.5,186.9 790.5,187.1 789.5,187.0 788.5,187.5 787.5,187.1 786.5,189.6 785.5,187.1 784.5,187.0 783.5,187.1 782.5,188.0 781.5,187.0 780.5,186.8 779.5,187.2 778.5,189.5 777.5,186.9 776.5,186.8 775.5,188.5 774.5,187.3 773.5,187.5 772.5,187.0 771.5,187.0 770.5,187.3 769.5,186.9 768.5,189.5 767.5,187.2 766.5,186.9 765.5,187.2 764.5,189.2 763.5,187.0 762.5,187.3 761.5,190.5 760.5,189.6 759.5,190.0 758.5,189.8 757.5,187.1 756.5,186.9 755.5,187.2 754.5,189.6 753.5,188.0 752.5,190.3 751.5,187.0 750.5,187.4 749.5,188.2 748.5,187.0 747.5,187.4 746.5,188.8 745.5,188.6 744.5,186.9 743.5,187.0 742.5,190.7 741.5,187.2 740.5,189.6 739.5,188.6 738.5,187.3 737.5,187.4 736.5,189.4 735.5,188.5 734.5,190.0 733.5,187.4 732.5,187.5 731.5,187.1 730.5,187.2 729.5,190.0 728.5,187.5 727.5,190.3 726.5,187.6 725.5,188.0 724.5,188.0 723.5,187.4 722.5,187.8 721.5,190.9 720.5,187.1 719.5,190.2 718.5,187.0 717.5,187.0 716.5,188.0 715.5,189.9 714.5,187.5 713.5,187.1 712.5,187.1 711.5,188.2 710.5,191.0 709.5,187.1 708.5,187.1 707.5,187.4 706.5,187.0 705.5,187.3 704.5,187.0 703.5,188.4 702.5,187.1 701.5,190.8 700.5,187.1 699.5,187.4 698.5,187.1 697.5,188.3 696.5,187.0 695.5,187.2 694.5,189.1 693.5,189.0 692.5,187.5 691.5,188.7 690.5,189.2 689.5,190.1 688.5,187.1 687.5,187.9 686.5,188.8 685.5,187.7 684.5,187.2 683.5,187.2 682.5,190.5 681.5,189.6 680.5,188.1 679.5,187.5 678.5,187.3 677.5,189.4 676.5,187.5 675.5,190.5 674.5,189.1 673.5,190.2 672.5,187.5 671.5,188.6 670.5,187.6 669.5,187.9 668.5,187.5 667.5,187.6 666.5,187.6 665.5,188.2 664.5,187.5 663.5,187.5 662.5,187.5 661.5,188.3 660.5,187.9 659.5,187.8 658.5,187.7 657.5,188.7 656.5,188.8 655.5,189.1 654.5,187.8 653.5,187.8 652.5,191.1 651.5,187.7 650.5,188.9 649.5,188.7 648.5,188.0 647.5,189.2 646.5,190.7 645.5,187.8 644.5,190.2 643.5,188.0 642.5,188.3 641.5,191.1 640.5,188.0 639.5,187.5 638.5,190.1 637.5,188.7 636.5,188.4 635.5,187.0 634.5,187.0 633.5,190.6 632.5,188.0 631.5,187.8 630.5,187.3 629.5,187.2 628.5,187.2 627.5,189.8 626.5,187.2 625.5,187.1 624.5,187.5 623.5,187.2 622.5,187.3 621.5,187.7 620.5,191.2 619.5,190.3 618.5,187.3 617.5,190.8 616.5,188.1 615.5,189.9 614.5,191.8 613.5,189.4 612.5,188.4 611.5,190.1 610.5,188.9 609.5,191.9 608.5,190.5 607.5,189.5 606.5,189.5 605.5,192.7 604.5,190.2 603.5,192.1 602.5,192.5 601.5,190.7 600.5,190.8 599.5,192.8 598.5,191.9 597.5,191.7 596.5,191.2 595.5,191.9 594.5,192.3 593.5,193.9 592.5,192.0 591.5,192.2 590.5,192.2 589.5,192.4 588.5,193.1 587.5,192.8 586.5,192.9 585.5,193.2 584.5,193.3 583.5,193.1 582.5,194.1 581.5,194.7 580.5,194.9 579.5,194.0 578.5,194.4 577.5,194.2 576.5,195.6 575.5,194.1 574.5,194.6 573.5,198.0 572.5,194.4 571.5,195.1 570.5,195.2 569.5,195.5 568.5,194.8 567.5,194.8 566.5,194.9 565.5,197.1 564.5,195.1 563.5,195.6 562.5,195.4 561.5,195.6 560.5,195.3 559.5,195.1 558.5,194.9 557.5,196.7 556.5,194.7 555.5,195.8 554.5,194.4 553.5,195.1 552.5,194.2 551.5,193.9 550.5,194.6 549.5,193.8 548.5,197.1 547.5,194.0 546.5,193.4 545.5,194.2 544.5,193.0 543.5,192.7 542.5,192.6 541.5,193.1 540.5,192.5 539.5,195.7 538.5,195.9 537.5,193.4 536.5,191.8 535.5,191.9 534.5,191.5 533.5,194.3 532.5,191.3 531.5,191.1 530.5,191.3 529.5,192.6 528.5,192.6 527.5,190.8 526.5,191.6 525.5,190.4 524.5,190.6 523.5,190.3 522.5,190.1 521.5,190.7 520.5,190.4 519.5,191.3 518.5,190.2 517.5,191.8 516.5,193.3 515.5,189.8 514.5,189.5 513.5,190.6 512.5,189.1 511.5,189.0 510.5,189.4 509.5,189.4 508.5,188.7 507.5,188.5 506.5,190.7 505.5,188.4 504.5,191.4 503.5,190.8 502.5,188.4 501.5,187.9 500.5,189.4 499.5,187.5 498.5,187.5 497.5,190.0 496.5,187.5 495.5,189.9 494.5,187.5 493.5,186.7 492.5,188.7 491.5,187.7 490.5,190.0 489.5,186.8 488.5,187.6 487.5,188.6 486.5,188.9 485.5,189.6 484.5,192.4 483.5,188.6 482.5,193.9 481.5,201.6 480.5,215.1 479.5,227.2 478.5,230.1 477.5,237.3 476.5,241.7 475.5,247.2 474.5,255.0 473.5,262.1 472.5,266.6 471.5,266.7 470.5,264.1 469.5,260.3 468.5,257.4 467.5,255.9 466.5,253.7 465.5,253.3 464.5,250.6 463.5,251.8 462.5,248.7 461.5,248.1 460.5,246.2 459.5,243.5 458.5,243.0 457.5,240.7 456.5,241.0 455.5,237.8 454.5,236.2 453.5,235.1 452.5,237.7 451.5,237.8 450.5,240.0 449.5,241.4 448.5,243.8 447.5,245.7 446.5,248.7 445.5,252.7 444.5,256.0 443.5,257.2 442.5,258.8 441.5,262.2 440.5,264.8 439.5,268.4 438.5,271.7 437.5,276.3 436.5,278.8 435.5,283.4 434.5,287.5 433.5,287.7 432.5,284.8 431.5,281.4 430.5,277.8 429.5,276.6 428.5,275.3 427.5,278.3 426.5,281.2 425.5,285.1 424.5,284.4 423.5,280.7 422.5,274.7 421.5,272.1 420.5,269.6 419.5,268.5 418.5,271.7 417.5,271.5 416.5,276.5 415.5,279.0 414.5,280.7 413.5,283.9 412.5,287.6 411.5,290.1 410.5,293.3 409.5,296.1 408.5,298.5 407.5,298.5 406.5,299.1 405.5,303.2 404.5,301.2 403.5,302.3 402.5,304.8 401.5,304.6 400.5,309.0 399.5,307.7 398.5,311.2 397.5,309.1 396.5,310.2 395.5,311.7 394.5,313.0 393.5,313.4 392.5,312.8 391.5,312.1 390.5,312.5 389.5,313.1 388.5,311.4 387.5,313.1 386.5,310.9 385.5,313.5 384.5,311.1 383.5,312.0 382.5,312.2 381.5,312.3 380.5,310.9 379.5,308.5 378.5,308.0 377.5,311.0 376.5,306.8 375.5,306.6 374.5,304.8 373.5,304.1 372.5,304.3 371.5,302.6 370.5,301.8 369.5,301.8 368.5,303.0 367.5,303.0 366.5,304.5 365.5,306.5 364.5,308.7 363.5,313.8 362.5,316.5 361.5,319.4 360.5,319.7 359.5,319.3 358.5,319.6 357.5,322.4 356.5,320.1 355.5,319.6 354.5,319.6 353.5,322.8 352.5,319.5 351.5,319.3 350.5,319.3 349.5,322.1 348.5,319.6 347.5,320.7 346.5,320.1 345.5,319.4 344.5,320.8 343.5,319.4 342.5,320.6 341.5,319.4 340.5,319.3 339.5,319.6 338.5,319.3 337.5,321.2 336.5,322.3 335.5,321.4 334.5,319.3 333.5,320.4 332.5,319.4 331.5,320.2 330.5,320.5 329.5,320.3 328.5,319.3 327.5,320.3 326.5,319.3 325.5,320.7 324.5,319.9 323.5,319.4 322.5,321.5 321.5,320.8 320.5,323.0 319.5,320.0 318.5,320.3 317.5,320.3 316.5,319.3 315.5,319.5 314.5,320.0 313.5,320.8 312.5,321.4 311.5,320.4 310.5,320.4 309.5,319.6 308.5,319.3 307.5,321.2 306.5,319.5 305.5,322.8 304.5,321.3 303.5,319.3 302.5,321.8 301.5,320.8 300.5,319.8 299.5,319.3 298.5,319.3 297.5,319.3 296.5,320.5 295.5,319.3 294.5,319.8 293.5,322.3 292.5,319.7 291.5,321.8 290.5,322.7 289.5,319.4 288.5,319.4 287.5,319.6 286.5,319.8 285.5,319.3 284.5,319.5 283.5,319.4 282.5,320.9 281.5,320.2 280.5,320.8 279.5,319.5 278.5,319.6 277.5,319.6 276.5,319.3 275.5,322.6 274.5,319.7 273.5,319.4 272.5,320.2 271.5,319.3 270.5,321.0 269.5,320.2 268.5,319.3 267.5,322.6 266.5,322.2 265.5,320.2 264.5,319.3 263.5,322.1 262.5,319.3 261.5,319.5 260.5,319.6 259.5,322.3 258.5,322.1 257.5,319.9 256.5,319.7 255.5,320.5 254.5,319.4 253.5,319.9 252.5,319.3 251.5,319.4 250.5,320.4 249.5,319.4 248.5,323.1 247.5,319.7 246.5,320.0 245.5,320.7 244.5,322.7 243.5,320.6 242.5,319.3 241.5,320.0 240.5,320.2 239.5,319.3 238.5,319.6 237.5,319.9 236.5,319.4 235.5,319.6 234.5,319.3 233.5,319.3 232.5,319.8 231.5,319.9 230.5,319.4 229.5,319.4 228.5,322.2 227.5,319.3 226.5,323.0 225.5,320.4 224.5,322.3 223.5,320.4 222.5,320.0 221.5,320.9 220.5,319.3 219.5,320.7 218.5,319.3 217.5,319.8 216.5,319.4 215.5,322.5 214.5,321.4 213.5,320.9 212.5,319.3 211.5,319.5 210.5,321.9 209.5,319.3 208.5,319.3 207.5,319.7 206.5,319.4 205.5,320.3 204.5,320.8 203.5,319.5 202.5,319.3 201.5,319.5 200.5,320.5 199.5,320.3 198.5,319.4 197.5,321.1 196.5,319.6 195.5,319.4 194.5,319.3 193.5,318.6 192.5,319.3 191.5,320.1 190.5,317.9 189.5,317.8 188.5,317.6 187.5,318.0 186.5,317.0 185.5,316.2 184.5,314.9 183.5,315.4 182.5,313.0 181.5,312.0 180.5,311.0 179.5,309.5 178.5,305.3 177.5,303.0 176.5,201.5 175.5,190.1 174.5,188.9 173.5,188.9 172.5,188.7 171.5,187.8 170.5,188.7 169.5,188.1 168.5,187.8 167.5,187.8 166.5,188.4 165.5,187.8 164.5,188.9 163.5,188.2 162.5,189.2 161.5,188.1 160.5,188.9 159.5,190.6 158.5,190.6 157.5,188.0 156.5,188.3 155.5,187.9 154.5,191.0 153.5,188.1 152.5,187.8 151.5,189.0 150.5,189.8 149.5,187.9 148.5,190.5 147.5,190.6 146.5,188.1 145.5,188.8 144.5,187.9 143.5,191.0 142.5,188.1 141.5,187.9 140.5,188.4 139.5,190.2 138.5,187.8 137.5,191.2 136.5,189.9 135.5,187.9 134.5,188.9 133.5,187.8 132.5,188.7 131.5,188.6 130.5,188.7 129.5,187.8 128.5,187.8 127.5,187.8 126.5,189.9 125.5,187.8 124.5,188.0 123.5,188.4 122.5,189.3 121.5,187.9 120.5,187.8 119.5,189.8 118.5,188.9 117.5,188.2 116.5,188.4 115.5,188.7 114.5,188.0 113.5,189.2 112.5,187.8 111.5,189.8 110.5,187.8 109.5,187.9 108.5,190.7 107.5,188.1 106.5,191.3 105.5,187.8 104.5,187.8 103.5,187.8 102.5,190.0 101.5,188.0 100.5,188.1 99.5,189.0 98.5,188.3 97.5,187.8 96.5,187.8 95.5,187.9 94.5,188.4Z" fill="#9090f0"/>
</g>
<path d="M315.5 117.5V597.5M555.5 117.5V597.5" stroke="#0000ff" stroke-width="1.2"/>
<path d="M94.5 117.5V597.5H1294.5V117.5z" stroke="#fff" stroke-width="1" fill="none" shape-rendering="crispEdges"/>
<path d="M94.0 118.4H1295.0" stroke="#ff4000" stroke-width="1.2"/>
<text transform="translate(96.5 159.0) scale(0.82 1)" font-size="12" fill="#f0f000" font-family='"Liberation Mono", monospace'>2.45 V</text>
<text transform="translate(96.5 207.0) scale(0.82 1)" font-size="12" fill="#f0f000" font-family='"Liberation Mono", monospace'>1.95 V</text>
<text transform="translate(96.5 255.0) scale(0.82 1)" font-size="12" fill="#f0f000" font-family='"Liberation Mono", monospace'>1.45 V</text>
<text transform="translate(96.5 303.0) scale(0.82 1)" font-size="12" fill="#f0f000" font-family='"Liberation Mono", monospace'>950 mV</text>
<text transform="translate(96.5 351.0) scale(0.82 1)" font-size="12" fill="#f0f000" font-family='"Liberation Mono", monospace'>450 mV</text>
<text transform="translate(96.5 399.0) scale(0.82 1)" font-size="12" fill="#f0f000" font-family='"Liberation Mono", monospace'>-50 mV</text>
<text transform="translate(96.5 447.0) scale(0.82 1)" font-size="12" fill="#f0f000" font-family='"Liberation Mono", monospace'>-550 mV</text>
<text transform="translate(96.5 495.0) scale(0.82 1)" font-size="12" fill="#f0f000" font-family='"Liberation Mono", monospace'>-1.05 V</text>
<text transform="translate(96.5 543.0) scale(0.82 1)" font-size="12" fill="#f0f000" font-family='"Liberation Mono", monospace'>-1.55 V</text>
<text transform="translate(96.5 591.0) scale(0.82 1)" font-size="12" fill="#f0f000" font-family='"Liberation Mono", monospace'>-2.05 V</text>
<text transform="translate(196.5 591.5) scale(0.82 1)" font-size="12" fill="#f0f000" font-family='"Liberation Mono", monospace'>190 ns</text>
<text transform="translate(296.5 591.5) scale(0.82 1)" font-size="12" fill="#f0f000" font-family='"Liberation Mono", monospace'>1.19 µs</text>
<text transform="translate(396.5 591.5) scale(0.82 1)" font-size="12" fill="#f0f000" font-family='"Liberation Mono", monospace'>2.19 µs</text>
<text transform="translate(496.5 591.5) scale(0.82 1)" font-size="12" fill="#f0f000" font-family='"Liberation Mono", monospace'>3.19 µs</text>
<text transform="translate(596.5 591.5) scale(0.82 1)" font-size="12" fill="#f0f000" font-family='"Liberation Mono", monospace'>4.19 µs</text>
<text transform="translate(696.5 591.5) scale(0.82 1)" font-size="12" fill="#f0f000" font-family='"Liberation Mono", monospace'>5.19 µs</text>
<text transform="translate(796.5 591.5) scale(0.82 1)" font-size="12" fill="#f0f000" font-family='"Liberation Mono", monospace'>6.19 µs</text>
<text transform="translate(896.5 591.5) scale(0.82 1)" font-size="12" fill="#f0f000" font-family='"Liberation Mono", monospace'>7.19 µs</text>
<text transform="translate(996.5 591.5) scale(0.82 1)" font-size="12" fill="#f0f000" font-family='"Liberation Mono", monospace'>8.19 µs</text>
<text transform="translate(1096.5 591.5) scale(0.82 1)" font-size="12" fill="#f0f000" font-family='"Liberation Mono", monospace'>9.19 µs</text>
<text transform="translate(1196.5 591.5) scale(0.82 1)" font-size="12" fill="#f0f000" font-family='"Liberation Mono", monospace'>10.19 µs</text>
<path d="M169.700 119h11.600l-5.800 11.700z" fill="#9090f0"/>
<path d="M170 134.300h11v2.700h-4.100v8.700h-2.800v-8.700h-4.100z" fill="#9090f0"/>
<path d="M170 220.500l6 -6 6 6 -6 6zM166 220.500h4M182 220.500h4" stroke="#9090f0" stroke-width="1.3" fill="none"/>
<path d="M179.500 595.500L194.500 580.500 209.500 595.500z" stroke="#808080" stroke-width="2" fill="none"/>
<path d="M55.500 171.3H85L93.700 180.5 85 189.7H55.500z" fill="none" stroke="#d0d0d0" stroke-width="1"/>
<text x="59.8" y="186.8" font-size="16.5" fill="#d0d0d0" textLength="14.7" lengthAdjust="spacingAndGlyphs" stroke="#d0d0d0" stroke-width=".35">R1</text>
<path d="M55.500 184.3H85L93.700 193.5 85 202.7H55.500z" fill="none" stroke="#e6e600" stroke-width="1"/>
<text x="59.8" y="199.8" font-size="16.5" fill="#e6e600" textLength="14.7" lengthAdjust="spacingAndGlyphs" stroke="#e6e600" stroke-width=".35">C1</text>
<path d="M55.500 195.3H85L93.700 204.5 85 213.7H55.500z" fill="none" stroke="#8c4600" stroke-width="1"/>
<text x="59.8" y="210.8" font-size="16.5" fill="#8c4600" textLength="14.7" lengthAdjust="spacingAndGlyphs" stroke="#8c4600" stroke-width=".35">C3</text>
<path d="M55.500 211.3H85L93.700 220.5 85 229.7H55.500z" fill="none" stroke="#5c5c99" stroke-width="1"/>
<text x="59.8" y="226.8" font-size="16.5" fill="#5c5c99" textLength="14.7" lengthAdjust="spacingAndGlyphs" stroke="#5c5c99" stroke-width=".35">C4</text>
<path d="M55.500 257.3H85L93.700 266.5 85 275.7H55.500z" fill="none" stroke="#008c00" stroke-width="1"/>
<text x="59.8" y="272.8" font-size="16.5" fill="#008c00" textLength="14.7" lengthAdjust="spacingAndGlyphs" stroke="#008c00" stroke-width=".35">C2</text>
<path d="M55.500 392.3H85L93.700 401.5 85 410.7H55.500z" fill="#fff000"/>
<text x="59.8" y="407.8" font-size="16.5" fill="#000" textLength="14.7" lengthAdjust="spacingAndGlyphs" stroke="#000" stroke-width=".35">C1</text>
<path d="M79 197.500h2v-8h2" stroke="#e6e600" stroke-width="1" fill="none"/>
<path d="M78.500 224.500h3v-9h3" stroke="#5c5c99" stroke-width="1" fill="none"/>
<path d="M1295.500 193.400L1305.500 184H1333V202.800H1305.500z" fill="#8c8c00"/>
<text x="1313.0" y="200.0" font-size="16.5" fill="#000" textLength="10.0" lengthAdjust="spacingAndGlyphs">A</text>
<path d="M1295.500 220.300L1305.500 211H1333V229.600H1305.500z" fill="none" stroke="#5c5c99" stroke-width="1"/>
<text x="1313.5" y="226.5" font-size="16.5" fill="#5c5c99" textLength="9.0" lengthAdjust="spacingAndGlyphs">B</text>
<rect x="1262" y="175.5" width="28" height="6" fill="#202060"/>
<text x="1262.5" y="180.5" font-size="11" fill="#a0a0ff" textLength="27.0" lengthAdjust="spacingAndGlyphs">Pload</text>
<rect x="1274" y="200" width="16" height="6" fill="#402000"/>
<text x="1274.5" y="205.0" font-size="11" fill="#ff8000" textLength="14.0" lengthAdjust="spacingAndGlyphs">Pis</text>
<rect x="1279" y="262.5" width="14" height="6" fill="#004000"/>
<text x="1279.5" y="266.5" font-size="11" fill="#00f000" textLength="13.0" lengthAdjust="spacingAndGlyphs">Pis</text>
<text x="1452.4" y="49.0" font-size="22" fill="#eef0f6" font-weight="700" textLength="84.0" lengthAdjust="spacingAndGlyphs">Horizontal</text>
<text x="1465.2" y="100.3" font-size="19.5" fill="#000" font-weight="700" textLength="42.0" lengthAdjust="spacingAndGlyphs" stroke="#000" stroke-width=".4">Zoom</text>
<text x="1467.5" y="190.2" font-size="19.5" fill="#000" font-weight="700" textLength="37.4" lengthAdjust="spacingAndGlyphs" stroke="#000" stroke-width=".4">Hori-</text>
<text x="1463.5" y="210.5" font-size="19.5" fill="#000" font-weight="700" textLength="45.4" lengthAdjust="spacingAndGlyphs" stroke="#000" stroke-width=".4">zontal</text>
<text x="1461.3" y="290.2" font-size="19.5" fill="#000" font-weight="700" textLength="49.8" lengthAdjust="spacingAndGlyphs" stroke="#000" stroke-width=".4">Acqui-</text>
<text x="1465.5" y="310.5" font-size="19.5" fill="#000" font-weight="700" textLength="41.6" lengthAdjust="spacingAndGlyphs" stroke="#000" stroke-width=".4">sition</text>
<text x="1609.8" y="63.0" font-size="20.5" fill="#eef0f6" font-weight="700" textLength="61.6" lengthAdjust="spacingAndGlyphs">Position</text>
<circle cx="1640.6" cy="72.4" r="2.3" fill="#484852" opacity="0.43"/>
<circle cx="1671.4" cy="90.2" r="2.3" fill="#484852" opacity="0.66"/>
<circle cx="1671.4" cy="125.8" r="2.3" fill="#484852" opacity="0.83"/>
<circle cx="1640.6" cy="143.6" r="2.3" fill="#484852" opacity="0.77"/>
<circle cx="1609.8" cy="125.8" r="2.3" fill="#484852" opacity="0.54"/>
<circle cx="1609.8" cy="90.2" r="2.3" fill="#484852" opacity="0.37"/>
<text x="1620.8" y="221.7" font-size="20" fill="#eef0f6" font-weight="700" textLength="40.4" lengthAdjust="spacingAndGlyphs">Scale</text>
<circle cx="1640.6" cy="240.4" r="2.3" fill="#484852" opacity="0.43"/>
<circle cx="1679.2" cy="262.7" r="2.3" fill="#484852" opacity="0.66"/>
<circle cx="1679.2" cy="307.3" r="2.3" fill="#484852" opacity="0.83"/>
<circle cx="1640.6" cy="329.6" r="2.3" fill="#484852" opacity="0.77"/>
<circle cx="1602.0" cy="307.3" r="2.3" fill="#484852" opacity="0.54"/>
<circle cx="1602.0" cy="262.7" r="2.3" fill="#484852" opacity="0.37"/>
<path d="M1601.5,80.5 1609.5,73.0 1609.5,88.0z" fill="#e8eaf2"/>
<path d="M1680.0,80.5 1672.0,73.0 1672.0,88.0z" fill="#e8eaf2"/>
<path d="M1588.7,238.0 1597.0,245.5 1588.7,253.0z" fill="#e8eaf2"/>
<path d="M1606.3,238.0 1598.0,245.5 1606.3,253.0z" fill="#e8eaf2"/>
<path d="M1675.8,245.5 1683.6,238.7 1683.6,252.3z" fill="#e8eaf2"/>
<path d="M1692.5,245.5 1684.8,238.7 1684.8,252.3z" fill="#e8eaf2"/>
<text x="1452.0" y="377.5" font-size="22" fill="#eef0f6" font-weight="700" textLength="63.5" lengthAdjust="spacingAndGlyphs">Vertical</text>
<text x="1472.2" y="428.4" font-size="19.5" fill="#000" font-weight="700" textLength="28.0" lengthAdjust="spacingAndGlyphs" stroke="#000" stroke-width=".4">Ch1</text>
<text x="1472.2" y="530.9" font-size="19.5" fill="#000" font-weight="700" textLength="28.0" lengthAdjust="spacingAndGlyphs" stroke="#000" stroke-width=".4">Ch2</text>
<text x="1472.2" y="633.4" font-size="19.5" fill="#000" font-weight="700" textLength="28.0" lengthAdjust="spacingAndGlyphs" stroke="#000" stroke-width=".4">Ch3</text>
<text x="1472.2" y="735.9" font-size="19.5" fill="#000" font-weight="700" textLength="28.0" lengthAdjust="spacingAndGlyphs" stroke="#000" stroke-width=".4">Ch4</text>
<text x="1465.8" y="838.4" font-size="19.5" fill="#000" font-weight="700" textLength="41.0" lengthAdjust="spacingAndGlyphs" stroke="#000" stroke-width=".4">Logic</text>
<text x="1578.5" y="838.4" font-size="19.5" fill="#000" font-weight="700" textLength="25.5" lengthAdjust="spacingAndGlyphs" stroke="#000" stroke-width=".4">Ref</text>
<text x="1675.8" y="838.4" font-size="19.5" fill="#000" font-weight="700" textLength="41.0" lengthAdjust="spacingAndGlyphs" stroke="#000" stroke-width=".4">Math</text>
<circle cx="1653.2" cy="438.8" r="2.3" fill="#484852" opacity="0.50"/>
<circle cx="1676.6" cy="466.7" r="2.3" fill="#484852" opacity="0.74"/>
<circle cx="1664.2" cy="500.9" r="2.3" fill="#484852" opacity="0.84"/>
<circle cx="1628.4" cy="507.2" r="2.3" fill="#484852" opacity="0.70"/>
<circle cx="1605.0" cy="479.3" r="2.3" fill="#484852" opacity="0.46"/>
<circle cx="1617.4" cy="445.1" r="2.3" fill="#484852" opacity="0.36"/>
<text x="1620.6" y="627.5" font-size="20" fill="#eef0f6" font-weight="700" textLength="40.8" lengthAdjust="spacingAndGlyphs">Scale</text>
<circle cx="1640.8" cy="657.6" r="2.3" fill="#484852" opacity="0.43"/>
<circle cx="1679.4" cy="679.9" r="2.3" fill="#484852" opacity="0.66"/>
<circle cx="1679.4" cy="724.5" r="2.3" fill="#484852" opacity="0.83"/>
<circle cx="1640.8" cy="746.8" r="2.3" fill="#484852" opacity="0.77"/>
<circle cx="1602.2" cy="724.5" r="2.3" fill="#484852" opacity="0.54"/>
<circle cx="1602.2" cy="679.9" r="2.3" fill="#484852" opacity="0.37"/>
<path d="M1583.0,428.3 1598.0,428.3 1590.5,435.8z" fill="#e8eaf2"/>
<path d="M1684.2,436.2 1698.3,436.2 1691.2,428.7z" fill="#e8eaf2"/>
<path d="M1582.6,636.3 1596.5,636.3 1589.5,644.4z" fill="#e8eaf2"/>
<path d="M1582.6,653.2 1596.5,653.2 1589.5,645.1z" fill="#e8eaf2"/>
<path d="M1685.0,644.6 1699.4,644.6 1692.2,637.0z" fill="#e8eaf2"/>
<path d="M1685.0,645.8 1699.4,645.8 1692.2,653.2z" fill="#e8eaf2"/>
<text x="1787.5" y="47.5" font-size="22" fill="#eef0f6" font-weight="700" textLength="59.5" lengthAdjust="spacingAndGlyphs">Trigger</text>
<text x="1788.8" y="100.3" font-size="19.5" fill="#000" font-weight="700" textLength="55.0" lengthAdjust="spacingAndGlyphs" stroke="#000" stroke-width=".4">Trigger</text>
<text x="1789.8" y="173.8" font-size="19.5" fill="#000" font-weight="700" textLength="53.0" lengthAdjust="spacingAndGlyphs" stroke="#000" stroke-width=".4">Source</text>
<text x="1798.0" y="236.3" font-size="19.5" fill="#000" font-weight="700" textLength="36.5" lengthAdjust="spacingAndGlyphs" stroke="#000" stroke-width=".4">Auto</text>
<text x="1795.5" y="256.1" font-size="19.5" fill="#000" font-weight="700" textLength="41.5" lengthAdjust="spacingAndGlyphs" stroke="#000" stroke-width=".4">Norm</text>
<text x="2011.8" y="88.5" font-size="19.5" fill="#000" font-weight="700" textLength="30.0" lengthAdjust="spacingAndGlyphs" stroke="#000" stroke-width=".4">Run</text>
<text x="2009.2" y="109.0" font-size="19.5" fill="#000" font-weight="700" textLength="35.0" lengthAdjust="spacingAndGlyphs" stroke="#000" stroke-width=".4">Stop</text>
<text x="2002.8" y="173.8" font-size="19.5" fill="#000" font-weight="700" textLength="48.0" lengthAdjust="spacingAndGlyphs" stroke="#000" stroke-width=".4">Single</text>
<text x="2007.8" y="234.4" font-size="19.5" fill="#000" font-weight="700" textLength="38.0" lengthAdjust="spacingAndGlyphs" stroke="#000" stroke-width=".4">Force</text>
<text x="2001.8" y="254.9" font-size="19.5" fill="#000" font-weight="700" textLength="50.0" lengthAdjust="spacingAndGlyphs" stroke="#000" stroke-width=".4">Trigger</text>
<text x="1904.2" y="80.7" font-size="15" fill="#000" font-weight="700" textLength="34.5" lengthAdjust="spacingAndGlyphs">Trig'd</text>
<text x="1897.9" y="121.0" font-size="19.5" fill="#eef0f6" font-weight="700" textLength="47.3" lengthAdjust="spacingAndGlyphs">Levels</text>
<circle cx="1936.8" cy="134.3" r="2.3" fill="#484852" opacity="0.52"/>
<circle cx="1957.4" cy="163.7" r="2.3" fill="#484852" opacity="0.75"/>
<circle cx="1942.2" cy="196.2" r="2.3" fill="#484852" opacity="0.84"/>
<circle cx="1906.4" cy="199.3" r="2.3" fill="#484852" opacity="0.68"/>
<circle cx="1885.8" cy="169.9" r="2.3" fill="#484852" opacity="0.45"/>
<circle cx="1901.0" cy="137.4" r="2.3" fill="#484852" opacity="0.36"/>
<path d="M1873.0,135.2 1887.0,135.2 1880.0,142.2z" fill="#e8eaf2"/>
<path d="M1955.5,142.2 1969.8,142.2 1962.7,135.2z" fill="#e8eaf2"/>
<text x="1787.5" y="324.0" font-size="22" fill="#eef0f6" font-weight="700" textLength="53.5" lengthAdjust="spacingAndGlyphs">Action</text>
<text x="1903.2" y="364.9" font-size="19.5" fill="#000" font-weight="700" textLength="36.0" lengthAdjust="spacingAndGlyphs" stroke="#000" stroke-width=".4">Save</text>
<text x="1903.8" y="384.9" font-size="19.5" fill="#000" font-weight="700" textLength="35.0" lengthAdjust="spacingAndGlyphs" stroke="#000" stroke-width=".4">Load</text>
<text x="1997.3" y="374.9" font-size="19.5" fill="#000" font-weight="700" textLength="58.8" lengthAdjust="spacingAndGlyphs" stroke="#000" stroke-width=".4">Autoset</text>
<text x="1795.5" y="435.7" font-size="19.5" fill="#000" font-weight="700" textLength="41.4" lengthAdjust="spacingAndGlyphs" stroke="#000" stroke-width=".4">Touch</text>
<text x="1800.5" y="459.6" font-size="19.5" fill="#000" font-weight="700" textLength="31.5" lengthAdjust="spacingAndGlyphs" stroke="#000" stroke-width=".4">Lock</text>
<text x="1901.8" y="437.4" font-size="19.5" fill="#000" font-weight="700" textLength="38.8" lengthAdjust="spacingAndGlyphs" stroke="#000" stroke-width=".4">Clear</text>
<text x="1895.3" y="457.9" font-size="19.5" fill="#000" font-weight="700" textLength="51.9" lengthAdjust="spacingAndGlyphs" stroke="#000" stroke-width=".4">Screen</text>
<text x="2005.2" y="447.7" font-size="19.5" fill="#000" font-weight="700" textLength="43.2" lengthAdjust="spacingAndGlyphs" stroke="#000" stroke-width=".4">Preset</text>
<g><path d="M1799.200 356.700h6.600l2.500 -3.400h16l2.500 3.400h6c1.700 0 3 1.300 3 3v18.100c0 1.700 -1.300 3 -3 3h-33.600c-1.700 0 -3 -1.300 -3 -3v-18.100c0 -1.700 1.300 -3 3 -3z" fill="#050506"/><circle cx="1816.200" cy="368.300" r="8.100" fill="none" stroke="#c8c8d0" stroke-width="2.200"/></g>
<text x="1787.5" y="521.0" font-size="22" fill="#eef0f6" font-weight="700" textLength="70.0" lengthAdjust="spacingAndGlyphs">Analysis</text>
<circle cx="1913.3" cy="546.1" r="2.3" fill="#484852" opacity="0.40"/>
<circle cx="1955.2" cy="561.3" r="2.3" fill="#484852" opacity="0.62"/>
<circle cx="1962.9" cy="605.3" r="2.3" fill="#484852" opacity="0.82"/>
<circle cx="1928.7" cy="633.9" r="2.3" fill="#484852" opacity="0.80"/>
<circle cx="1886.8" cy="618.7" r="2.3" fill="#484852" opacity="0.58"/>
<circle cx="1879.1" cy="574.7" r="2.3" fill="#484852" opacity="0.38"/>
<text x="1791.0" y="692.1" font-size="19.5" fill="#000" font-weight="700" textLength="50.4" lengthAdjust="spacingAndGlyphs" stroke="#000" stroke-width=".4">Cursor</text>
<text x="1900.5" y="692.1" font-size="19.5" fill="#000" font-weight="700" textLength="41.4" lengthAdjust="spacingAndGlyphs" stroke="#000" stroke-width=".4">Meas</text>
<text x="1794.6" y="753.0" font-size="19.5" fill="#000" font-weight="700" textLength="43.3" lengthAdjust="spacingAndGlyphs" stroke="#000" stroke-width=".4">Quick</text>
<text x="1795.5" y="776.7" font-size="19.5" fill="#000" font-weight="700" textLength="41.4" lengthAdjust="spacingAndGlyphs" stroke="#000" stroke-width=".4">Meas</text>
<text x="1895.3" y="764.9" font-size="19.5" fill="#000" font-weight="700" textLength="51.9" lengthAdjust="spacingAndGlyphs" stroke="#000" stroke-width=".4">Search</text>
<text x="2014.0" y="764.9" font-size="19.5" fill="#000" font-weight="700" textLength="25.5" lengthAdjust="spacingAndGlyphs" stroke="#000" stroke-width=".4">FFT</text>
<text x="1787.9" y="838.1" font-size="19.5" fill="#000" font-weight="700" textLength="56.7" lengthAdjust="spacingAndGlyphs" stroke="#000" stroke-width=".4">Protocol</text>
<text x="1906.8" y="838.1" font-size="19.5" fill="#000" font-weight="700" textLength="28.8" lengthAdjust="spacingAndGlyphs" stroke="#000" stroke-width=".4">Gen</text>
<path d="M1827.800 591.500A11.800 11.800 0 1 1 1816 578.200" fill="none" stroke="#eef0f6" stroke-width="3.400"/><path d="M1820.500 573.800L1830.800 582.800 1818.800 584z" fill="#eef0f6"/>
<g><path d="M2037.6 685.0L2041.8 685.0M2036.1 690.5L2039.8 692.6M2032.1 694.5L2034.2 698.2M2026.6 696.0L2026.6 700.2M2021.1 694.5L2019.0 698.2M2017.1 690.5L2013.4 692.6M2015.6 685.0L2011.4 685.0M2017.1 679.5L2013.4 677.4M2021.1 675.5L2019.0 671.8M2026.6 674.0L2026.6 669.8M2032.1 675.5L2034.2 671.8M2036.1 679.5L2039.8 677.4" stroke="#050506" stroke-width="1.700" fill="none"/><circle cx="2026.6" cy="685" r="7.200" fill="none" stroke="#050506" stroke-width="1.800"/><path d="M2031.7 679.9A7.200 7.200 0 0 1 2021.5 690.1z" fill="#050506"/></g>
<rect x="2003.3" y="817.2" width="11.700" height="11.700" rx="1.500" fill="#050506"/>
<rect x="2003.3" y="834.7" width="11.700" height="11.700" rx="1.500" fill="#050506"/>
<rect x="2020.8" y="817.2" width="11.700" height="11.700" rx="1.500" fill="#050506"/>
<rect x="2020.8" y="834.7" width="11.700" height="11.700" rx="1.500" fill="#050506"/>
<rect x="2038.3" y="817.2" width="11.700" height="11.700" rx="1.500" fill="#050506"/>
<rect x="2038.3" y="834.7" width="11.700" height="11.700" rx="1.500" fill="#050506"/>
<text x="1670.0" y="136.5" font-size="11.5" fill="#e4e6f0" font-weight="700" textLength="21.5" lengthAdjust="spacingAndGlyphs">Push</text>
<text x="1670.0" y="151.1" font-size="11.5" fill="#e4e6f0" font-weight="700" textLength="32.5" lengthAdjust="spacingAndGlyphs">to Zero</text>
<text x="1957.3" y="195.2" font-size="11.5" fill="#e4e6f0" font-weight="700" textLength="22.0" lengthAdjust="spacingAndGlyphs">Push</text>
<text x="1942.8" y="209.8" font-size="11.5" fill="#e4e6f0" font-weight="700" textLength="36.5" lengthAdjust="spacingAndGlyphs">for 50%</text>
<text x="1682.8" y="321.2" font-size="11.5" fill="#e4e6f0" font-weight="700" textLength="30.5" lengthAdjust="spacingAndGlyphs">Coarse</text>
<text x="1682.8" y="335.8" font-size="11.5" fill="#e4e6f0" font-weight="700" textLength="19.0" lengthAdjust="spacingAndGlyphs">Fine</text>
<text x="1689.7" y="511.3" font-size="11.5" fill="#e4e6f0" font-weight="700" textLength="22.3" lengthAdjust="spacingAndGlyphs">Push</text>
<text x="1689.7" y="525.9" font-size="11.5" fill="#e4e6f0" font-weight="700" textLength="31.6" lengthAdjust="spacingAndGlyphs">to Zero</text>
<text x="1695.8" y="748.9" font-size="11.5" fill="#e4e6f0" font-weight="700" textLength="30.6" lengthAdjust="spacingAndGlyphs">Coarse</text>
<text x="1695.8" y="763.5" font-size="11.5" fill="#e4e6f0" font-weight="700" textLength="19.0" lengthAdjust="spacingAndGlyphs">Fine</text>
<text x="1970.6" y="627.0" font-size="11.5" fill="#e4e6f0" font-weight="700" textLength="22.0" lengthAdjust="spacingAndGlyphs">Push</text>
<text x="1953.0" y="641.6" font-size="11.5" fill="#e4e6f0" font-weight="700" textLength="39.6" lengthAdjust="spacingAndGlyphs">to Select</text>
<g transform="translate(1605.5 143.5)" fill="#eef0f6"><path d="M-1.700 -7.700h3.400v2.700h5.600l-7.300 5 -7.300 -5h5.600z"/><path d="M-3.300 0h6.600l2.800 6h-12.200z"/><rect x="-8.800" y="6.400" width="17.600" height="1.300"/></g>
<g transform="translate(1597.5 329.4)" fill="#eef0f6"><path d="M-1.700 -7.700h3.400v2.700h5.600l-7.300 5 -7.300 -5h5.600z"/><path d="M-3.300 0h6.600l2.800 6h-12.200z"/><rect x="-8.800" y="6.400" width="17.600" height="1.300"/></g>
<g transform="translate(1595.3 519.0)" fill="#eef0f6"><path d="M-1.700 -7.700h3.400v2.700h5.600l-7.300 5 -7.300 -5h5.600z"/><path d="M-3.300 0h6.600l2.800 6h-12.200z"/><rect x="-8.800" y="6.400" width="17.600" height="1.300"/></g>
<g transform="translate(1587.0 756.3)" fill="#eef0f6"><path d="M-1.700 -7.700h3.400v2.700h5.600l-7.300 5 -7.300 -5h5.600z"/><path d="M-3.300 0h6.600l2.800 6h-12.200z"/><rect x="-8.800" y="6.400" width="17.600" height="1.300"/></g>
<g transform="translate(1880.0 202.6)" fill="#eef0f6"><path d="M-1.700 -7.700h3.400v2.700h5.600l-7.300 5 -7.300 -5h5.600z"/><path d="M-3.300 0h6.600l2.800 6h-12.200z"/><rect x="-8.800" y="6.400" width="17.600" height="1.300"/></g>
<g transform="translate(1878.0 634.2)" fill="#eef0f6"><path d="M-1.700 -7.700h3.400v2.700h5.600l-7.300 5 -7.300 -5h5.600z"/><path d="M-3.300 0h6.600l2.800 6h-12.200z"/><rect x="-8.800" y="6.400" width="17.600" height="1.300"/></g>
</svg>
</div>
</body></html>
